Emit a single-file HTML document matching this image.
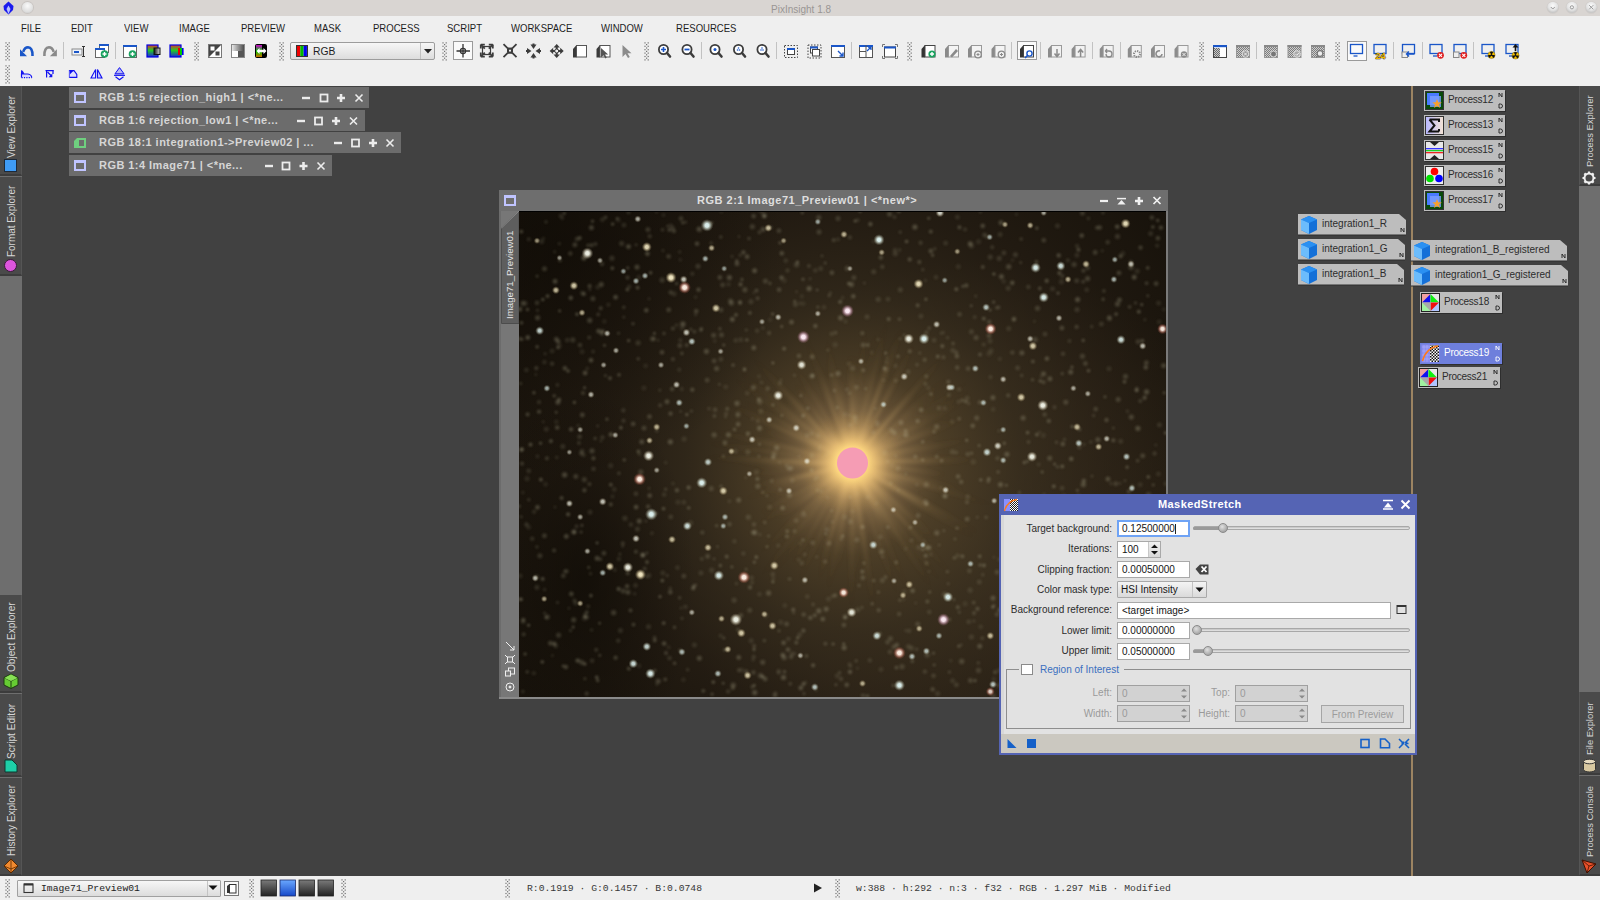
<!DOCTYPE html><html><head><meta charset="utf-8"><style>
*{margin:0;padding:0;box-sizing:border-box}
html,body{width:1600px;height:900px;overflow:hidden;background:#414141;font-family:"Liberation Sans",sans-serif}
.a{position:absolute}
.mi{position:absolute;top:22px;font-size:11.5px;color:#1e1e1e;white-space:nowrap;transform:scaleX(0.83);transform-origin:0 0}
.grip{position:absolute;width:5px;background-image:linear-gradient(45deg,#9a9a9a 25%,transparent 25%,transparent 75%,#9a9a9a 75%),linear-gradient(45deg,#9a9a9a 25%,transparent 25%,transparent 75%,#9a9a9a 75%);background-size:2px 2px;background-position:0 0,1px 1px;opacity:.8}
.sep{position:absolute;width:1px;background:#c4c4c4}
.ti{position:absolute;top:44px;width:16px;height:16px}
.ti2{position:absolute;top:66px;width:16px;height:16px}
.vt{position:absolute;transform-origin:0 0;transform:rotate(-90deg) scaleX(0.9);font-size:11px;color:#d6d6d6;white-space:nowrap}
.ictab{position:absolute;background:#484848}
.iw{position:absolute;height:21px;background:#6c6c6c;color:#d6d6d6;font-weight:bold;font-size:11px;white-space:nowrap}
.iw span{position:absolute;left:30px;top:4px;letter-spacing:0.45px}
.wb{position:absolute;top:5px;width:11px;height:11px}
.pi{position:absolute;height:21px;background:#bdbdbd;color:#2e2e2e;font-size:11px;white-space:nowrap}
.lbl{position:absolute;font-size:10px;color:#2c2c2c;text-align:right;white-space:nowrap}
.ed{position:absolute;height:17px;background:#fff;border:1px solid #a7a7a7;font-size:10px;color:#111;padding:2px 0 0 5px;white-space:nowrap}
.mono{font-family:"Liberation Mono",monospace}
.st{position:absolute;top:881px;font-size:10px;color:#2e2e2e;white-space:nowrap;font-family:"Liberation Mono",monospace}
</style></head><body><div class="a" style="left:0;top:0;width:1600px;height:16px;background:#d9d5d2"></div><div class="a" style="left:771px;top:3.5px;font-size:10px;color:#9a9694;letter-spacing:0px">PixInsight 1.8</div><svg class="a" style="left:2px;top:1px" width="13" height="14" viewBox="0 0 13 14"><path d="M6.5 0.5 L11.5 5 L11 9 L6.5 13.5 L2 9 L1.5 5 Z" fill="#1a1aee"/><path d="M6.5 4.5 L8.5 8 L6.5 13 L4.5 8Z" fill="#b8c0ff"/></svg><div class="a" style="left:21.5px;top:2.2px;width:11px;height:11px;border-radius:50%;background:radial-gradient(circle at 50% 35%,#fafafa,#dedede 65%,#bdbdbd);box-shadow:0 0 0 1px #c8c4c1"></div><svg class="a" style="left:1540px;top:0" width="60" height="16"><defs><radialGradient id="tbb" cx=".5" cy=".35" r=".6"><stop offset="0" stop-color="#fbfbfb"/><stop offset=".7" stop-color="#e2e2e2"/><stop offset="1" stop-color="#c8c8c8"/></radialGradient></defs><circle cx="12.8" cy="7.5" r="6.3" fill="#cfcbc8"/><circle cx="31.9" cy="7.5" r="6.3" fill="#cfcbc8"/><circle cx="51.25" cy="7.5" r="6.3" fill="#cfcbc8"/><circle cx="12.8" cy="7.3" r="5.6" fill="url(#tbb)"/><circle cx="31.9" cy="7.3" r="5.6" fill="url(#tbb)"/><circle cx="51.25" cy="7.3" r="5.6" fill="url(#tbb)"/><path d="M10.8 7 L12.8 9 L14.8 7" stroke="#9a9a9a" stroke-width="1" fill="none"/><circle cx="31.9" cy="7.3" r="1.6" fill="none" stroke="#9a9a9a" stroke-width="1"/><path d="M49.2 5.2 L53.3 9.3 M53.3 5.2 L49.2 9.3" stroke="#9a9a9a" stroke-width="1"/></svg><div class="a" style="left:0;top:16px;width:1600px;height:70px;background:#efefef"></div><div class="mi" style="left:21px">FILE</div><div class="mi" style="left:71px">EDIT</div><div class="mi" style="left:124px">VIEW</div><div class="mi" style="left:179px">IMAGE</div><div class="mi" style="left:241px">PREVIEW</div><div class="mi" style="left:314px">MASK</div><div class="mi" style="left:373px">PROCESS</div><div class="mi" style="left:447px">SCRIPT</div><div class="mi" style="left:511px">WORKSPACE</div><div class="mi" style="left:601px">WINDOW</div><div class="mi" style="left:676px">RESOURCES</div><svg class="a" style="left:0;top:0" width="1600" height="86"><rect x="5.4" y="42.3" width="1.2" height="1.2" fill="#707070"/><rect x="8.6" y="42.3" width="1.2" height="1.2" fill="#707070"/><rect x="7.0" y="44.0" width="1.2" height="1.2" fill="#707070"/><rect x="5.4" y="45.7" width="1.2" height="1.2" fill="#707070"/><rect x="8.6" y="45.7" width="1.2" height="1.2" fill="#707070"/><rect x="7.0" y="47.4" width="1.2" height="1.2" fill="#707070"/><rect x="5.4" y="49.1" width="1.2" height="1.2" fill="#707070"/><rect x="8.6" y="49.1" width="1.2" height="1.2" fill="#707070"/><rect x="7.0" y="50.8" width="1.2" height="1.2" fill="#707070"/><rect x="5.4" y="52.5" width="1.2" height="1.2" fill="#707070"/><rect x="8.6" y="52.5" width="1.2" height="1.2" fill="#707070"/><rect x="7.0" y="54.2" width="1.2" height="1.2" fill="#707070"/><rect x="5.4" y="55.9" width="1.2" height="1.2" fill="#707070"/><rect x="8.6" y="55.9" width="1.2" height="1.2" fill="#707070"/><rect x="7.0" y="57.6" width="1.2" height="1.2" fill="#707070"/><rect x="5.4" y="59.3" width="1.2" height="1.2" fill="#707070"/><rect x="8.6" y="59.3" width="1.2" height="1.2" fill="#707070"/><rect x="194.4" y="42.3" width="1.2" height="1.2" fill="#707070"/><rect x="197.6" y="42.3" width="1.2" height="1.2" fill="#707070"/><rect x="196.0" y="44.0" width="1.2" height="1.2" fill="#707070"/><rect x="194.4" y="45.7" width="1.2" height="1.2" fill="#707070"/><rect x="197.6" y="45.7" width="1.2" height="1.2" fill="#707070"/><rect x="196.0" y="47.4" width="1.2" height="1.2" fill="#707070"/><rect x="194.4" y="49.1" width="1.2" height="1.2" fill="#707070"/><rect x="197.6" y="49.1" width="1.2" height="1.2" fill="#707070"/><rect x="196.0" y="50.8" width="1.2" height="1.2" fill="#707070"/><rect x="194.4" y="52.5" width="1.2" height="1.2" fill="#707070"/><rect x="197.6" y="52.5" width="1.2" height="1.2" fill="#707070"/><rect x="196.0" y="54.2" width="1.2" height="1.2" fill="#707070"/><rect x="194.4" y="55.9" width="1.2" height="1.2" fill="#707070"/><rect x="197.6" y="55.9" width="1.2" height="1.2" fill="#707070"/><rect x="196.0" y="57.6" width="1.2" height="1.2" fill="#707070"/><rect x="194.4" y="59.3" width="1.2" height="1.2" fill="#707070"/><rect x="197.6" y="59.3" width="1.2" height="1.2" fill="#707070"/><rect x="279.4" y="42.3" width="1.2" height="1.2" fill="#707070"/><rect x="282.6" y="42.3" width="1.2" height="1.2" fill="#707070"/><rect x="281.0" y="44.0" width="1.2" height="1.2" fill="#707070"/><rect x="279.4" y="45.7" width="1.2" height="1.2" fill="#707070"/><rect x="282.6" y="45.7" width="1.2" height="1.2" fill="#707070"/><rect x="281.0" y="47.4" width="1.2" height="1.2" fill="#707070"/><rect x="279.4" y="49.1" width="1.2" height="1.2" fill="#707070"/><rect x="282.6" y="49.1" width="1.2" height="1.2" fill="#707070"/><rect x="281.0" y="50.8" width="1.2" height="1.2" fill="#707070"/><rect x="279.4" y="52.5" width="1.2" height="1.2" fill="#707070"/><rect x="282.6" y="52.5" width="1.2" height="1.2" fill="#707070"/><rect x="281.0" y="54.2" width="1.2" height="1.2" fill="#707070"/><rect x="279.4" y="55.9" width="1.2" height="1.2" fill="#707070"/><rect x="282.6" y="55.9" width="1.2" height="1.2" fill="#707070"/><rect x="281.0" y="57.6" width="1.2" height="1.2" fill="#707070"/><rect x="279.4" y="59.3" width="1.2" height="1.2" fill="#707070"/><rect x="282.6" y="59.3" width="1.2" height="1.2" fill="#707070"/><rect x="442.4" y="42.3" width="1.2" height="1.2" fill="#707070"/><rect x="445.6" y="42.3" width="1.2" height="1.2" fill="#707070"/><rect x="444.0" y="44.0" width="1.2" height="1.2" fill="#707070"/><rect x="442.4" y="45.7" width="1.2" height="1.2" fill="#707070"/><rect x="445.6" y="45.7" width="1.2" height="1.2" fill="#707070"/><rect x="444.0" y="47.4" width="1.2" height="1.2" fill="#707070"/><rect x="442.4" y="49.1" width="1.2" height="1.2" fill="#707070"/><rect x="445.6" y="49.1" width="1.2" height="1.2" fill="#707070"/><rect x="444.0" y="50.8" width="1.2" height="1.2" fill="#707070"/><rect x="442.4" y="52.5" width="1.2" height="1.2" fill="#707070"/><rect x="445.6" y="52.5" width="1.2" height="1.2" fill="#707070"/><rect x="444.0" y="54.2" width="1.2" height="1.2" fill="#707070"/><rect x="442.4" y="55.9" width="1.2" height="1.2" fill="#707070"/><rect x="445.6" y="55.9" width="1.2" height="1.2" fill="#707070"/><rect x="444.0" y="57.6" width="1.2" height="1.2" fill="#707070"/><rect x="442.4" y="59.3" width="1.2" height="1.2" fill="#707070"/><rect x="445.6" y="59.3" width="1.2" height="1.2" fill="#707070"/><rect x="644.4" y="42.3" width="1.2" height="1.2" fill="#707070"/><rect x="647.6" y="42.3" width="1.2" height="1.2" fill="#707070"/><rect x="646.0" y="44.0" width="1.2" height="1.2" fill="#707070"/><rect x="644.4" y="45.7" width="1.2" height="1.2" fill="#707070"/><rect x="647.6" y="45.7" width="1.2" height="1.2" fill="#707070"/><rect x="646.0" y="47.4" width="1.2" height="1.2" fill="#707070"/><rect x="644.4" y="49.1" width="1.2" height="1.2" fill="#707070"/><rect x="647.6" y="49.1" width="1.2" height="1.2" fill="#707070"/><rect x="646.0" y="50.8" width="1.2" height="1.2" fill="#707070"/><rect x="644.4" y="52.5" width="1.2" height="1.2" fill="#707070"/><rect x="647.6" y="52.5" width="1.2" height="1.2" fill="#707070"/><rect x="646.0" y="54.2" width="1.2" height="1.2" fill="#707070"/><rect x="644.4" y="55.9" width="1.2" height="1.2" fill="#707070"/><rect x="647.6" y="55.9" width="1.2" height="1.2" fill="#707070"/><rect x="646.0" y="57.6" width="1.2" height="1.2" fill="#707070"/><rect x="644.4" y="59.3" width="1.2" height="1.2" fill="#707070"/><rect x="647.6" y="59.3" width="1.2" height="1.2" fill="#707070"/><rect x="907.4" y="42.3" width="1.2" height="1.2" fill="#707070"/><rect x="910.6" y="42.3" width="1.2" height="1.2" fill="#707070"/><rect x="909.0" y="44.0" width="1.2" height="1.2" fill="#707070"/><rect x="907.4" y="45.7" width="1.2" height="1.2" fill="#707070"/><rect x="910.6" y="45.7" width="1.2" height="1.2" fill="#707070"/><rect x="909.0" y="47.4" width="1.2" height="1.2" fill="#707070"/><rect x="907.4" y="49.1" width="1.2" height="1.2" fill="#707070"/><rect x="910.6" y="49.1" width="1.2" height="1.2" fill="#707070"/><rect x="909.0" y="50.8" width="1.2" height="1.2" fill="#707070"/><rect x="907.4" y="52.5" width="1.2" height="1.2" fill="#707070"/><rect x="910.6" y="52.5" width="1.2" height="1.2" fill="#707070"/><rect x="909.0" y="54.2" width="1.2" height="1.2" fill="#707070"/><rect x="907.4" y="55.9" width="1.2" height="1.2" fill="#707070"/><rect x="910.6" y="55.9" width="1.2" height="1.2" fill="#707070"/><rect x="909.0" y="57.6" width="1.2" height="1.2" fill="#707070"/><rect x="907.4" y="59.3" width="1.2" height="1.2" fill="#707070"/><rect x="910.6" y="59.3" width="1.2" height="1.2" fill="#707070"/><rect x="1199.4" y="42.3" width="1.2" height="1.2" fill="#707070"/><rect x="1202.6" y="42.3" width="1.2" height="1.2" fill="#707070"/><rect x="1201.0" y="44.0" width="1.2" height="1.2" fill="#707070"/><rect x="1199.4" y="45.7" width="1.2" height="1.2" fill="#707070"/><rect x="1202.6" y="45.7" width="1.2" height="1.2" fill="#707070"/><rect x="1201.0" y="47.4" width="1.2" height="1.2" fill="#707070"/><rect x="1199.4" y="49.1" width="1.2" height="1.2" fill="#707070"/><rect x="1202.6" y="49.1" width="1.2" height="1.2" fill="#707070"/><rect x="1201.0" y="50.8" width="1.2" height="1.2" fill="#707070"/><rect x="1199.4" y="52.5" width="1.2" height="1.2" fill="#707070"/><rect x="1202.6" y="52.5" width="1.2" height="1.2" fill="#707070"/><rect x="1201.0" y="54.2" width="1.2" height="1.2" fill="#707070"/><rect x="1199.4" y="55.9" width="1.2" height="1.2" fill="#707070"/><rect x="1202.6" y="55.9" width="1.2" height="1.2" fill="#707070"/><rect x="1201.0" y="57.6" width="1.2" height="1.2" fill="#707070"/><rect x="1199.4" y="59.3" width="1.2" height="1.2" fill="#707070"/><rect x="1202.6" y="59.3" width="1.2" height="1.2" fill="#707070"/><rect x="1335.4" y="42.3" width="1.2" height="1.2" fill="#707070"/><rect x="1338.6" y="42.3" width="1.2" height="1.2" fill="#707070"/><rect x="1337.0" y="44.0" width="1.2" height="1.2" fill="#707070"/><rect x="1335.4" y="45.7" width="1.2" height="1.2" fill="#707070"/><rect x="1338.6" y="45.7" width="1.2" height="1.2" fill="#707070"/><rect x="1337.0" y="47.4" width="1.2" height="1.2" fill="#707070"/><rect x="1335.4" y="49.1" width="1.2" height="1.2" fill="#707070"/><rect x="1338.6" y="49.1" width="1.2" height="1.2" fill="#707070"/><rect x="1337.0" y="50.8" width="1.2" height="1.2" fill="#707070"/><rect x="1335.4" y="52.5" width="1.2" height="1.2" fill="#707070"/><rect x="1338.6" y="52.5" width="1.2" height="1.2" fill="#707070"/><rect x="1337.0" y="54.2" width="1.2" height="1.2" fill="#707070"/><rect x="1335.4" y="55.9" width="1.2" height="1.2" fill="#707070"/><rect x="1338.6" y="55.9" width="1.2" height="1.2" fill="#707070"/><rect x="1337.0" y="57.6" width="1.2" height="1.2" fill="#707070"/><rect x="1335.4" y="59.3" width="1.2" height="1.2" fill="#707070"/><rect x="1338.6" y="59.3" width="1.2" height="1.2" fill="#707070"/><rect x="5.4" y="65.3" width="1.2" height="1.2" fill="#707070"/><rect x="8.6" y="65.3" width="1.2" height="1.2" fill="#707070"/><rect x="7.0" y="67.0" width="1.2" height="1.2" fill="#707070"/><rect x="5.4" y="68.7" width="1.2" height="1.2" fill="#707070"/><rect x="8.6" y="68.7" width="1.2" height="1.2" fill="#707070"/><rect x="7.0" y="70.4" width="1.2" height="1.2" fill="#707070"/><rect x="5.4" y="72.1" width="1.2" height="1.2" fill="#707070"/><rect x="8.6" y="72.1" width="1.2" height="1.2" fill="#707070"/><rect x="7.0" y="73.8" width="1.2" height="1.2" fill="#707070"/><rect x="5.4" y="75.5" width="1.2" height="1.2" fill="#707070"/><rect x="8.6" y="75.5" width="1.2" height="1.2" fill="#707070"/><rect x="7.0" y="77.2" width="1.2" height="1.2" fill="#707070"/><rect x="5.4" y="78.9" width="1.2" height="1.2" fill="#707070"/><rect x="8.6" y="78.9" width="1.2" height="1.2" fill="#707070"/><rect x="7.0" y="80.6" width="1.2" height="1.2" fill="#707070"/><rect x="5.4" y="82.3" width="1.2" height="1.2" fill="#707070"/><rect x="8.6" y="82.3" width="1.2" height="1.2" fill="#707070"/><rect x="63" y="42" width="1" height="17" fill="#c2c2c2"/><rect x="115" y="42" width="1" height="17" fill="#c2c2c2"/><rect x="701" y="42" width="1" height="17" fill="#c2c2c2"/><rect x="776" y="42" width="1" height="17" fill="#c2c2c2"/><rect x="851" y="42" width="1" height="17" fill="#c2c2c2"/><rect x="1011" y="42" width="1" height="17" fill="#c2c2c2"/><rect x="1040" y="42" width="1" height="17" fill="#c2c2c2"/><rect x="1092" y="42" width="1" height="17" fill="#c2c2c2"/><rect x="1120" y="42" width="1" height="17" fill="#c2c2c2"/><rect x="1256" y="42" width="1" height="17" fill="#c2c2c2"/><rect x="1393" y="42" width="1" height="17" fill="#c2c2c2"/><rect x="1422" y="42" width="1" height="17" fill="#c2c2c2"/><rect x="1473" y="42" width="1" height="17" fill="#c2c2c2"/><g><path d="M23.2 51.8 Q24.7 47.3 28.0 47.3 Q32.7 47.5 32.5 56" stroke="#1a56c8" stroke-width="2.6" fill="none"/><path d="M20.0 49.2 L20.0 56.2 L27.0 56.2 Z" fill="#1a56c8"/></g><g transform="translate(100.4,0) scale(-1,1)"><path d="M46.7 51.8 Q48.2 47.3 51.5 47.3 Q56.2 47.5 56.0 56" stroke="#8a8a8a" stroke-width="2.6" fill="none"/><path d="M43.5 49.2 L43.5 56.2 L50.5 56.2 Z" fill="#8a8a8a"/></g><rect x="72" y="49" width="10" height="6" fill="#eef2f8" stroke="#8a8a8a" stroke-width="1"/><rect x="74" y="51" width="5" height="2" fill="#1a56c8"/><path d="M82 46.5h3 M83.5 46.5v10 M82 56.5h3" stroke="#333" stroke-width="1" fill="none"/><rect x="99.5" y="44.5" width="9.0" height="8.0" fill="#fff" stroke="#666" stroke-width="1"/><rect x="99.0" y="44.0" width="10.0" height="2" fill="#1a56c8"/><rect x="95.5" y="48.5" width="9.0" height="9.0" fill="#fff" stroke="#666" stroke-width="1"/><rect x="95.0" y="48.0" width="10.0" height="2" fill="#1a56c8"/><circle cx="104.5" cy="54.0" r="3.8" fill="#1aa360"/><path d="M102.5 54.0h4 M104.5 52.0v4" stroke="#fff" stroke-width="1.4"/><rect x="123.5" y="45.5" width="13.0" height="12.0" fill="#fff" stroke="#666" stroke-width="1"/><rect x="123.0" y="45.0" width="14.0" height="2" fill="#1a56c8"/><circle cx="132.5" cy="54.0" r="3.8" fill="#1aa360"/><path d="M130.5 54.0h4 M132.5 52.0v4" stroke="#fff" stroke-width="1.4"/><defs><linearGradient id="rgbg" x1="0" y1="0" x2="0" y2="1"><stop offset="0" stop-color="#d33"/><stop offset=".45" stop-color="#2c2"/><stop offset="1" stop-color="#22d"/></linearGradient><linearGradient id="gg" x1="0" x2="1"><stop offset="0" stop-color="#111"/><stop offset="1" stop-color="#ddd"/></linearGradient></defs><rect x="147" y="45" width="11" height="12" fill="url(#rgbg)" stroke="#0000e0" stroke-width="1.2"/><rect x="154" y="48" width="6" height="6.5" fill="url(#gg)" stroke="#111" stroke-width="1"/><rect x="170" y="45" width="11" height="12" fill="url(#rgbg)" stroke="#0000e0" stroke-width="1.2"/><rect x="178" y="48" width="2" height="7" fill="#e00"/><rect x="180" y="48" width="2" height="7" fill="#0c0"/><rect x="182" y="48" width="1.6" height="7" fill="#00e"/><rect x="208.5" y="44.5" width="13" height="13" fill="#fff" stroke="#777"/><path d="M209 45 H221 L209 57 Z" fill="#444"/><rect x="210.5" y="46.5" width="4" height="4" fill="#fff"/><rect x="215.5" y="51.5" width="4" height="4" fill="#444"/><defs><linearGradient id="g9" x1="0" x2="1"><stop offset="0" stop-color="#eee"/><stop offset="1" stop-color="#444"/></linearGradient></defs><rect x="231.5" y="44.5" width="13" height="13" fill="url(#g9)" stroke="#888"/><rect x="232" y="51" width="6" height="6" fill="#fff"/><rect x="238" y="51" width="6" height="6" fill="#555"/><defs><linearGradient id="g10" x1="0" y1="0" x2="0" y2="1"><stop offset="0" stop-color="#f0f"/><stop offset=".5" stop-color="#0f0"/><stop offset="1" stop-color="#f80"/></linearGradient></defs><rect x="255" y="44" width="12" height="14" rx="2" fill="#000"/><rect x="256" y="45" width="6" height="12" fill="url(#g10)" opacity=".8"/><path d="M256.5 51 L259.5 48 V49.8 H263.5 V48 L266.5 51 L263.5 54 V52.2 H259.5 V54 Z" fill="#fff"/><defs><linearGradient id="cmb" x1="0" y1="0" x2="0" y2="1"><stop offset="0" stop-color="#f7f7f7"/><stop offset="1" stop-color="#dcdcdc"/></linearGradient></defs><rect x="290.5" y="42.5" width="144" height="17" rx="1.5" fill="url(#cmb)" stroke="#9c9c9c"/><rect x="420" y="43" width="1" height="16" fill="#c0c0c0"/><path d="M424 49 H432 L428 53.5Z" fill="#222"/><text x="313" y="55" font-size="11.5" fill="#1e1e1e" font-family="Liberation Sans" transform="translate(313 0) scale(0.9 1) translate(-313 0)">RGB</text><rect x="297" y="46" width="3.3" height="10" fill="#e00"/><rect x="300.3" y="46" width="3.3" height="10" fill="#0b0"/><rect x="303.6" y="46" width="3.3" height="10" fill="#00e"/><rect x="296.5" y="45.5" width="11" height="11" fill="none" stroke="#333" stroke-width="1"/><rect x="453.5" y="41.5" width="19" height="18" fill="#fafafa" stroke="#9a9a9a"/><path d="M456.5 51 H470 M463 44 V57.5" stroke="#333" stroke-width="1.3"/><circle cx="463" cy="51" r="2.6" fill="none" stroke="#333" stroke-width="1.2"/><rect x="482.5" y="46.5" width="8" height="8" fill="none" stroke="#3c3c3c" stroke-width="1.2"/><path d="M484.8 48.6 L480.8 44.6" stroke="#3c3c3c" stroke-width="1.8"/><path d="M480.8 44.6 h4.0 M480.8 44.6 v4.0" stroke="#3c3c3c" stroke-width="1.8"/><path d="M484.8 52.6 L480.8 56.6" stroke="#3c3c3c" stroke-width="1.8"/><path d="M480.8 56.6 h4.0 M480.8 56.6 v-4.0" stroke="#3c3c3c" stroke-width="1.8"/><path d="M488.8 48.6 L492.8 44.6" stroke="#3c3c3c" stroke-width="1.8"/><path d="M492.8 44.6 h-4.0 M492.8 44.6 v4.0" stroke="#3c3c3c" stroke-width="1.8"/><path d="M488.8 52.6 L492.8 56.6" stroke="#3c3c3c" stroke-width="1.8"/><path d="M492.8 56.6 h-4.0 M492.8 56.6 v-4.0" stroke="#3c3c3c" stroke-width="1.8"/><path d="M503.5 44.1 L508.0 48.6" stroke="#3c3c3c" stroke-width="1.8"/><path d="M508.0 48.6 h4.0 M508.0 48.6 v4.0" stroke="#3c3c3c" stroke-width="1.8"/><path d="M503.5 57.1 L508.0 52.6" stroke="#3c3c3c" stroke-width="1.8"/><path d="M508.0 52.6 h4.0 M508.0 52.6 v-4.0" stroke="#3c3c3c" stroke-width="1.8"/><path d="M516.5 44.1 L512.0 48.6" stroke="#3c3c3c" stroke-width="1.8"/><path d="M512.0 48.6 h-4.0 M512.0 48.6 v4.0" stroke="#3c3c3c" stroke-width="1.8"/><path d="M516.5 57.1 L512.0 52.6" stroke="#3c3c3c" stroke-width="1.8"/><path d="M512.0 52.6 h-4.0 M512.0 52.6 v-4.0" stroke="#3c3c3c" stroke-width="1.8"/><g transform="rotate(0 533.5 51.0)"><path d="M530.5 44.5 L536.5 44.5 L533.5 49.0 Z" fill="#3c3c3c"/><rect x="532.5" y="43.5" width="2" height="3" fill="#3c3c3c"/></g><g transform="rotate(90 533.5 51.0)"><path d="M530.5 44.5 L536.5 44.5 L533.5 49.0 Z" fill="#3c3c3c"/><rect x="532.5" y="43.5" width="2" height="3" fill="#3c3c3c"/></g><g transform="rotate(180 533.5 51.0)"><path d="M530.5 44.5 L536.5 44.5 L533.5 49.0 Z" fill="#3c3c3c"/><rect x="532.5" y="43.5" width="2" height="3" fill="#3c3c3c"/></g><g transform="rotate(270 533.5 51.0)"><path d="M530.5 44.5 L536.5 44.5 L533.5 49.0 Z" fill="#3c3c3c"/><rect x="532.5" y="43.5" width="2" height="3" fill="#3c3c3c"/></g><rect x="555.7" y="46.0" width="2" height="10" fill="#3c3c3c"/><rect x="551.7" y="50.0" width="10" height="2" fill="#3c3c3c"/><g transform="rotate(0 556.7 51.0)"><path d="M553.5 47.5 L559.9 47.5 L556.7 44.0 Z" fill="#3c3c3c"/></g><g transform="rotate(90 556.7 51.0)"><path d="M553.5 47.5 L559.9 47.5 L556.7 44.0 Z" fill="#3c3c3c"/></g><g transform="rotate(180 556.7 51.0)"><path d="M553.5 47.5 L559.9 47.5 L556.7 44.0 Z" fill="#3c3c3c"/></g><g transform="rotate(270 556.7 51.0)"><path d="M553.5 47.5 L559.9 47.5 L556.7 44.0 Z" fill="#3c3c3c"/></g><circle cx="556.7" cy="51.0" r="2" fill="#efefef" stroke="#3c3c3c" stroke-width="1"/><path d="M573.0 49.0 L576.5 45.0 L576.5 57.5 L573.0 57.5 Z" fill="#3a3a3a"/><rect x="576.5" y="45.5" width="10" height="11.5" fill="#fff" stroke="#555" stroke-width="1"/><path d="M596.5 49.0 L600.0 45.0 L600.0 57.5 L596.5 57.5 Z" fill="#3a3a3a"/><rect x="600.0" y="45.5" width="10" height="11.5" fill="#fff" stroke="#555" stroke-width="1"/><path d="M601.0 48.0 l0 9.6 l2.4 -2.4 l2.0 3.2 l1.4 -0.8 l-1.8 -3.0 l3.2 0.0 Z" fill="#555"/><path d="M622.5 45.0 l0 12.0 l3.0 -3.0 l2.5 4.0 l1.8 -1.0 l-2.3 -3.8 l4.0 0.0 Z" fill="#8c8c8c"/><circle cx="663.5" cy="49.5" r="4.6" fill="#fff" stroke="#3c3c3c" stroke-width="1.8"/><path d="M667.0 53.0 L670.0 56.5" stroke="#3c3c3c" stroke-width="2.6" stroke-linecap="round"/><path d="M661.0 49.5h5 M663.5 47.0v5" stroke="#1a56c8" stroke-width="1.6"/><circle cx="687.0" cy="49.5" r="4.6" fill="#fff" stroke="#3c3c3c" stroke-width="1.8"/><path d="M690.5 53.0 L693.5 56.5" stroke="#3c3c3c" stroke-width="2.6" stroke-linecap="round"/><path d="M684.5 49.5h5" stroke="#1a56c8" stroke-width="1.8"/><circle cx="715.0" cy="49.5" r="4.6" fill="#fff" stroke="#3c3c3c" stroke-width="1.8"/><path d="M718.5 53.0 L721.5 56.5" stroke="#3c3c3c" stroke-width="2.6" stroke-linecap="round"/><circle cx="715.0" cy="49.5" r="1.5" fill="#1a56c8"/><circle cx="738.5" cy="49.5" r="4.6" fill="#fff" stroke="#3c3c3c" stroke-width="1.8"/><path d="M742.0 53.0 L745.0 56.5" stroke="#3c3c3c" stroke-width="2.6" stroke-linecap="round"/><circle cx="737.5" cy="50.0" r="0.8" fill="#1a56c8"/><circle cx="739.5" cy="50.0" r="0.8" fill="#1a56c8"/><circle cx="738.5" cy="48.0" r="0.8" fill="#1a56c8"/><circle cx="762.0" cy="49.5" r="4.6" fill="#fff" stroke="#3c3c3c" stroke-width="1.8"/><path d="M765.5 53.0 L768.5 56.5" stroke="#3c3c3c" stroke-width="2.6" stroke-linecap="round"/><circle cx="761.0" cy="50.0" r="0.8" fill="#1a56c8"/><circle cx="763.0" cy="50.0" r="0.8" fill="#1a56c8"/><circle cx="762.0" cy="48.0" r="0.8" fill="#1a56c8"/><rect x="784.5" y="45.5" width="13.0" height="12.0" fill="none" stroke="#444" stroke-width="1" stroke-dasharray="1.5 1.5"/><rect x="787.5" y="48.5" width="7.0" height="6.0" fill="#fff" stroke="#444" stroke-width="1"/><rect x="787.0" y="48.0" width="8.0" height="2" fill="#1a56c8"/><rect x="808.0" y="45.0" width="13.0" height="13.0" fill="none" stroke="#444" stroke-width="1" stroke-dasharray="1.5 1.5"/><rect x="810.5" y="47.0" width="7.0" height="6.0" fill="#fff" stroke="#444" stroke-width="1"/><rect x="810.0" y="46.5" width="8.0" height="2" fill="#1a56c8"/><rect x="812.5" y="49.5" width="7" height="6.5" fill="#fff" stroke="#444" stroke-width="1"/><rect x="831.5" y="45.5" width="13.0" height="12.0" fill="#fff" stroke="#555" stroke-width="1"/><rect x="831.0" y="45.0" width="14.0" height="2" fill="#1a56c8"/><path d="M838 51 L843 56 M843 52.5 V56 H839.5" stroke="#1a56c8" stroke-width="1.4" fill="none"/><rect x="859.5" y="45.5" width="13.0" height="12.0" fill="#fff" stroke="#555" stroke-width="1"/><rect x="859.0" y="45.0" width="14.0" height="2" fill="#1a56c8"/><path d="M859 51.5 H866 V58 M866 51.5 V45" stroke="#555" stroke-width="1" fill="none"/><path d="M867 51 L871 47 M868 47 H871 V50" stroke="#1a56c8" stroke-width="1.3" fill="none"/><rect x="884.5" y="47.0" width="11.0" height="10.0" fill="#fff" stroke="#444" stroke-width="1"/><rect x="884.0" y="46.5" width="12.0" height="2" fill="#1a56c8"/><path d="M882.5 47 V44.5 H885 M895 44.5 H897.5 V47 M882.5 56 V58.5 H885 M895 58.5 H897.5 V56" stroke="#777" stroke-width="1" fill="none"/><path d="M921.5 49.0 L925.0 45.0 L925.0 57.5 L921.5 57.5 Z" fill="#333"/><rect x="925.0" y="45.5" width="10" height="11.5" fill="#fff" stroke="#444" stroke-width="1"/><circle cx="932.0" cy="54.0" r="3.6" fill="#1aa360"/><path d="M930.0 54.0h4 M932.0 52.0v4" stroke="#fff" stroke-width="1.4"/><path d="M945.0 49.0 L948.5 45.0 L948.5 57.5 L945.0 57.5 Z" fill="#8a8a8a"/><rect x="948.5" y="45.5" width="10" height="11.5" fill="#f4f4f4" stroke="#999" stroke-width="1"/><path d="M968.0 49.0 L971.5 45.0 L971.5 57.5 L968.0 57.5 Z" fill="#8a8a8a"/><rect x="971.5" y="45.5" width="10" height="11.5" fill="#f4f4f4" stroke="#999" stroke-width="1"/><path d="M991.5 49.0 L995.0 45.0 L995.0 57.5 L991.5 57.5 Z" fill="#8a8a8a"/><rect x="995.0" y="45.5" width="10" height="11.5" fill="#f4f4f4" stroke="#999" stroke-width="1"/><path d="M950 56 L956 49 L958 51 L952 57.5 Z" fill="#8a8a8a"/><circle cx="978.0" cy="54.5" r="3.3" fill="#efefef" stroke="#8a8a8a" stroke-width="1.3"/><path d="M976.5 54.5h3 M978.0 53v3" stroke="#8a8a8a" stroke-width="1"/><circle cx="1001.5" cy="54.5" r="3.3" fill="#efefef" stroke="#8a8a8a" stroke-width="1.3"/><path d="M1000.0 54.5h3 M1001.5 53v3" stroke="#8a8a8a" stroke-width="1"/><rect x="1017.5" y="41.5" width="19" height="18" fill="#fafafa" stroke="#9a9a9a"/><path d="M1020.0 49.0 L1023.5 45.0 L1023.5 57.5 L1020.0 57.5 Z" fill="#333"/><rect x="1023.5" y="45.5" width="10" height="11.5" fill="#fff" stroke="#444" stroke-width="1"/><circle cx="1029.5" cy="53.5" r="2.6" fill="#fff" stroke="#1a56c8" stroke-width="1.4"/><path d="M1027.5 55.5 L1025 58" stroke="#1a56c8" stroke-width="1.6"/><path d="M1048.0 49.0 L1051.5 45.0 L1051.5 57.5 L1048.0 57.5 Z" fill="#8c8c8c"/><rect x="1051.5" y="45.5" width="10" height="11.5" fill="#f2f2f2" stroke="#9a9a9a" stroke-width="1"/><path d="M1071.6 49.0 L1075.1 45.0 L1075.1 57.5 L1071.6 57.5 Z" fill="#8c8c8c"/><rect x="1075.1" y="45.5" width="10" height="11.5" fill="#f2f2f2" stroke="#9a9a9a" stroke-width="1"/><path d="M1099.7 49.0 L1103.2 45.0 L1103.2 57.5 L1099.7 57.5 Z" fill="#8c8c8c"/><rect x="1103.2" y="45.5" width="10" height="11.5" fill="#f2f2f2" stroke="#9a9a9a" stroke-width="1"/><path d="M1127.8 49.0 L1131.3 45.0 L1131.3 57.5 L1127.8 57.5 Z" fill="#8c8c8c"/><rect x="1131.3" y="45.5" width="10" height="11.5" fill="#f2f2f2" stroke="#9a9a9a" stroke-width="1"/><path d="M1151.0 49.0 L1154.5 45.0 L1154.5 57.5 L1151.0 57.5 Z" fill="#8c8c8c"/><rect x="1154.5" y="45.5" width="10" height="11.5" fill="#f2f2f2" stroke="#9a9a9a" stroke-width="1"/><path d="M1174.5 49.0 L1178.0 45.0 L1178.0 57.5 L1174.5 57.5 Z" fill="#8c8c8c"/><rect x="1178.0" y="45.5" width="10" height="11.5" fill="#f2f2f2" stroke="#9a9a9a" stroke-width="1"/><path d="M1057 49 V56 M1054.5 53.5 L1057 56.5 L1059.5 53.5" stroke="#8a8a8a" stroke-width="1.5" fill="none"/><path d="M1080.6 57 V50 M1078 52.5 L1080.6 49.5 L1083.2 52.5" stroke="#8a8a8a" stroke-width="1.5" fill="none"/><path d="M1106 54 A3 3 0 1 0 1109 51 H1106 M1107 49 L1105.5 51 L1107 53" stroke="#8a8a8a" stroke-width="1.3" fill="none"/><circle cx="1137" cy="54" r="3" fill="none" stroke="#8a8a8a" stroke-width="2" stroke-dasharray="1.3 1"/><path d="M1162 54 A3 3 0 1 1 1160 51" stroke="#8a8a8a" stroke-width="1.6" fill="none"/><circle cx="1184" cy="54.5" r="3.2" fill="#8a8a8a"/><path d="M1182.5 53 L1185.5 56 M1185.5 53 L1182.5 56" stroke="#eee" stroke-width="1"/><defs><pattern id="chk" width="2" height="2" patternUnits="userSpaceOnUse"><rect width="2" height="2" fill="#c8c8c8"/><rect width="1" height="1" fill="#6a6a6a"/><rect x="1" y="1" width="1" height="1" fill="#6a6a6a"/></pattern></defs><rect x="1213.5" y="45.5" width="13" height="12" fill="#fff" stroke="#444"/><rect x="1214" y="48" width="6" height="9" fill="url(#chk)"/><rect x="1213" y="45" width="14" height="2.2" fill="#1a56c8"/><rect x="1236.5" y="45.5" width="13" height="12" fill="url(#chk)" stroke="#888" opacity=".85"/><rect x="1236.0" y="45" width="14" height="2" fill="#888"/><rect x="1264.5" y="45.5" width="13" height="12" fill="url(#chk)" stroke="#888" opacity=".85"/><rect x="1264.0" y="45" width="14" height="2" fill="#888"/><rect x="1288.0" y="45.5" width="13" height="12" fill="url(#chk)" stroke="#888" opacity=".85"/><rect x="1287.5" y="45" width="14" height="2" fill="#888"/><rect x="1311.5" y="45.5" width="13" height="12" fill="url(#chk)" stroke="#888" opacity=".85"/><rect x="1311.0" y="45" width="14" height="2" fill="#888"/><circle cx="1245.5" cy="54" r="3.3" fill="#999" stroke="#eee" stroke-width=".8"/><path d="M1244 52.5 L1247 55.5 M1247 52.5 L1244 55.5" stroke="#eee" stroke-width="1"/><circle cx="1273.5" cy="54" r="3" fill="#777" stroke="#eee" stroke-width=".8"/><circle cx="1297" cy="54" r="3.3" fill="#aaa" stroke="#eee" stroke-width=".8"/><path d="M1295.5 54 L1296.8 55.3 L1299 52.8" stroke="#eee" stroke-width="1" fill="none"/><circle cx="1320" cy="53.5" r="2.8" fill="#eee" stroke="#777" stroke-width="1.2"/><path d="M1318 55.5 L1316 57.5" stroke="#777" stroke-width="1.5"/><rect x="1347.5" y="41.5" width="19" height="19" fill="#fafafa" stroke="#9a9a9a"/><rect x="1350.5" y="44.5" width="12" height="9" fill="none" stroke="#1a56c8" stroke-width="1.3"/><path d="M1353.5 56.0 h4" stroke="#1a56c8" stroke-width="1.3"/><rect x="1374.0" y="44.5" width="12" height="9" fill="none" stroke="#1a56c8" stroke-width="1.3"/><text x="1375.5" y="59" font-size="9" font-weight="bold" fill="#f0b800" stroke="#111" stroke-width=".7" paint-order="stroke" font-family="Liberation Sans">24</text><rect x="1402.5" y="44.5" width="12" height="9" fill="none" stroke="#1a56c8" stroke-width="1.3"/><rect x="1402" y="52" width="5.5" height="5.5" fill="#efefef" stroke="#888" stroke-width="1"/><path d="M1414.5 54 H1406.5 M1409 51.5 L1406.5 54 L1409 56.5" stroke="#1a56c8" stroke-width="1.4" fill="none"/><rect x="1430.0" y="44.5" width="12" height="9" fill="none" stroke="#1a56c8" stroke-width="1.3"/><path d="M1433.0 56.0 h4" stroke="#1a56c8" stroke-width="1.3"/><circle cx="1440.5" cy="55.3" r="3.4" fill="#e02020"/><path d="M1439.0 53.8 L1442.0 56.8 M1442.0 53.8 L1439.0 56.8" stroke="#fff" stroke-width="1.1"/><rect x="1454.0" y="44.5" width="12" height="9" fill="none" stroke="#1a56c8" stroke-width="1.3"/><rect x="1453.5" y="52" width="5.5" height="5.5" fill="#efefef" stroke="#888" stroke-width="1"/><circle cx="1463.8" cy="55.3" r="3.4" fill="#e02020"/><path d="M1462.3 53.8 L1465.3 56.8 M1465.3 53.8 L1462.3 56.8" stroke="#fff" stroke-width="1.1"/><rect x="1482.0" y="44.5" width="12" height="9" fill="none" stroke="#1a56c8" stroke-width="1.3"/><path d="M1485.0 56.0 h4" stroke="#1a56c8" stroke-width="1.3"/><circle cx="1491.5" cy="55.0" r="3.6" fill="#f5c000" stroke="#6a5000" stroke-width=".4"/><circle cx="1491.5" cy="55.0" r=".9" fill="#111"/><path d="M1491.5 55.0 L1489.8 52.1 A3.4 3.4 0 0 1 1493.2 52.1Z M1491.5 55.0 L1494.9 55.0 A3.4 3.4 0 0 1 1493.2 57.9Z M1491.5 55.0 L1489.8 57.9 A3.4 3.4 0 0 1 1488.1 55.0Z" fill="#111"/><rect x="1506.0" y="44.5" width="12" height="9" fill="none" stroke="#1a56c8" stroke-width="1.3"/><path d="M1509.0 56.0 h4" stroke="#1a56c8" stroke-width="1.3"/><circle cx="1515.5" cy="55.5" r="3.6" fill="#f5c000" stroke="#6a5000" stroke-width=".4"/><circle cx="1515.5" cy="55.5" r=".9" fill="#111"/><path d="M1515.5 55.5 L1513.8 52.6 A3.4 3.4 0 0 1 1517.2 52.6Z M1515.5 55.5 L1518.9 55.5 A3.4 3.4 0 0 1 1517.2 58.4Z M1515.5 55.5 L1513.8 58.4 A3.4 3.4 0 0 1 1512.1 55.5Z" fill="#111"/><path d="M1515.5 51 V46.5" stroke="#111" stroke-width="1.6"/><path d="M1512.5 47.5 L1515.5 44 L1518.5 47.5Z" fill="#111"/><path d="M21.5 77.5 V74 H27 A4.5 4 0 0 1 31.8 77.5" fill="#d8d8ff" stroke="#1010f0" stroke-width="1.2"/><path d="M21.5 77.7 H31.8" stroke="#1010f0" stroke-width="1.2" stroke-dasharray="1.2 1.2"/><path d="M21 70.5 L24.5 74 L21 74Z" fill="#1010f0"/><path d="M21.3 70.5 L23.5 72.8" stroke="#1010f0" stroke-width="1.2"/><path d="M45.5 70.6 H53.8 M46.6 70.6 V77.6 M53 70.6 V74" stroke="#1010f0" stroke-width="1.2" fill="none"/><path d="M47.5 72 L51.5 76" stroke="#1010f0" stroke-width="1.3"/><path d="M52.3 73.5 V77.2 H48.6Z" fill="#1010f0"/><path d="M69.6 70 V77.8" stroke="#1010f0" stroke-width="1.4"/><path d="M69.6 77.4 H76.8 V74.5 L74 70.6 H69.6" fill="#e0e0ff" stroke="#1010f0" stroke-width="1.1"/><path d="M70 70.3 H74 L70 74.3Z" fill="#1010f0"/><path d="M91 78 L95.6 69.5 V78 Z" fill="#e8e8ff" stroke="#1010f0" stroke-width="1.1"/><path d="M97.5 78 V69.5 L102 78 Z" fill="#c8c8f8" stroke="#1010f0" stroke-width="1.1"/><path d="M114 75.3 H125" stroke="#1010f0" stroke-width="1.2"/><path d="M115 73.8 L119.5 67.6 L124 73.8Z" fill="#b8b8f4" stroke="#1010f0" stroke-width="1"/><path d="M115.5 76.8 L119.5 79.8 L123.5 76.8" fill="none" stroke="#1010f0" stroke-width="1.1"/></svg><div class="a" style="left:0;top:86px;width:1600px;height:790px;background:#414141"></div><div class="a" style="left:0;top:86px;width:22px;height:790px;background:#6e6e6e"></div><div class="a" style="left:0;top:86px;width:22px;height:90px;background:#4a4a4a;border-right:1px solid #555;border-bottom:2px solid #3c3c3c"></div><div class="vt" style="left:5.5px;top:158.3px;font-size:10px;transform:rotate(-90deg) scaleX(1.011)">View Explorer</div><div class="a" style="left:4px;top:159px;width:13px;height:13px;background:#3f9cf6;border:1px solid #1d2a3a"></div><div class="a" style="left:0;top:177px;width:22px;height:99px;background:#4a4a4a;border-right:1px solid #555;border-bottom:2px solid #3c3c3c"></div><div class="vt" style="left:5.5px;top:256.5px;font-size:10px;transform:rotate(-90deg) scaleX(0.994)">Format Explorer</div><div class="a" style="left:4px;top:259px;width:13px;height:13px;border-radius:50%;background:#dd55dd;border:1px solid #3a1a3a"></div><div class="a" style="left:0;top:595px;width:22px;height:98px;background:#4a4a4a;border-right:1px solid #555;border-bottom:2px solid #3c3c3c"></div><div class="vt" style="left:5.5px;top:671.8px;font-size:10px;transform:rotate(-90deg) scaleX(1.011)">Object Explorer</div><svg class="a" style="left:3px;top:673px" width="16" height="16"><path d="M8 1 L15 4.5 V12 L8 15.5 L1 12 V4.5Z" fill="#66cc33" stroke="#1d3a10" stroke-width="1"/><path d="M1 4.5 L8 8 L15 4.5 M8 8 V15.5" stroke="#1d3a10" stroke-width="1" fill="none"/><path d="M1.5 5 L8 1.5 L14.5 5 L8 8Z" fill="#88e055"/></svg><div class="a" style="left:0;top:694px;width:22px;height:83px;background:#4a4a4a;border-right:1px solid #555;border-bottom:2px solid #3c3c3c"></div><div class="vt" style="left:5.5px;top:758.5px;font-size:10px;transform:rotate(-90deg) scaleX(1.013)">Script Editor</div><svg class="a" style="left:4px;top:759px" width="14" height="14"><path d="M1 1 H8 L13 6 V13 H1Z" fill="#1ecfa8" stroke="#0a3a30" stroke-width="1"/></svg><div class="a" style="left:0;top:778px;width:22px;height:98px;background:#4a4a4a;border-right:1px solid #555;border-bottom:2px solid #3c3c3c"></div><div class="vt" style="left:5.5px;top:856.3px;font-size:10px;transform:rotate(-90deg) scaleX(1.000)">History Explorer</div><svg class="a" style="left:3px;top:858px" width="16" height="16"><path d="M8 1 L15 8 L8 15 L1 8Z" fill="#f08a30" stroke="#5a2a00" stroke-width="1"/><path d="M8 1 V15 M1 8 L8 11 L15 8" stroke="#5a2a00" stroke-width=".8" fill="none"/></svg><div class="a" style="left:1579px;top:86px;width:21px;height:790px;background:#6e6e6e"></div><div class="a" style="left:1579px;top:86px;width:21px;height:100px;background:#4a4a4a;border-left:1px solid #555;border-bottom:2px solid #3c3c3c"></div><div class="vt" style="left:1584.2px;top:167.4px;font-size:9.5px;transform:rotate(-90deg) scaleX(0.991)">Process Explorer</div><svg class="a" style="left:1581px;top:170px" width="16" height="16"><circle cx="8" cy="8" r="4.5" fill="none" stroke="#f0f0f0" stroke-width="2"/><g stroke="#f0f0f0" stroke-width="2.2"><path d="M8 1.5 V3.5 M8 12.5 V14.5 M1.5 8 H3.5 M12.5 8 H14.5 M3.4 3.4 L4.8 4.8 M11.2 11.2 L12.6 12.6 M3.4 12.6 L4.8 11.2 M11.2 4.8 L12.6 3.4"/></g></svg><div class="a" style="left:1579px;top:692px;width:21px;height:83px;background:#4a4a4a;border-left:1px solid #555;border-bottom:2px solid #3c3c3c"></div><div class="vt" style="left:1584.2px;top:755.0px;font-size:9.5px;transform:rotate(-90deg) scaleX(0.986)">File Explorer</div><svg class="a" style="left:1582px;top:758px" width="15" height="15"><path d="M1.5 3.5 V11.5 A6 2.5 0 0 0 13.5 11.5 V3.5" fill="#d8c8a0" stroke="#333" stroke-width="1"/><ellipse cx="7.5" cy="3.5" rx="6" ry="2.3" fill="#e8dcc0" stroke="#333" stroke-width="1"/></svg><div class="a" style="left:1579px;top:776px;width:21px;height:100px;background:#4a4a4a;border-left:1px solid #555;border-bottom:2px solid #3c3c3c"></div><div class="vt" style="left:1584.2px;top:856.5px;font-size:9.5px;transform:rotate(-90deg) scaleX(0.988)">Process Console</div><svg class="a" style="left:1581px;top:858px" width="16" height="16"><path d="M1 2 L15 6 L6 15Z" fill="#e8502a" stroke="#401000" stroke-width="1"/><path d="M1 2 L8 8 L6 15 M8 8 L15 6" stroke="#401000" stroke-width=".8" fill="none"/></svg><div class="a" style="left:1411px;top:86px;width:2px;height:790px;background:#9c8462"></div><div class="iw" style="left:69px;top:87px;width:300px"><span>RGB 1:5 rejection_high1 | &lt;*ne...</span></div><div class="a" style="left:74px;top:92px;width:12px;height:11px;border:2px solid #c0c4ff;border-top-width:3px"></div><svg class="a" style="left:0;top:0;overflow:visible" width="1" height="1"><path d="M302.0 98.0 h8" stroke="#ececec" stroke-width="2.4"/><rect x="320.5" y="94.5" width="7" height="7" fill="none" stroke="#ececec" stroke-width="1.8"/><path d="M337.0 98.0 h8 M341.0 94.0 v8" stroke="#ececec" stroke-width="2.6"/><path d="M355.5 94.5 l7 7 M362.5 94.5 l-7 7" stroke="#ececec" stroke-width="1.6"/></svg><div class="iw" style="left:69px;top:110px;width:296px"><span>RGB 1:6 rejection_low1 | &lt;*ne...</span></div><div class="a" style="left:74px;top:115px;width:12px;height:11px;border:2px solid #c0c4ff;border-top-width:3px"></div><svg class="a" style="left:0;top:0;overflow:visible" width="1" height="1"><path d="M297.0 121.0 h8" stroke="#ececec" stroke-width="2.4"/><rect x="315.0" y="117.5" width="7" height="7" fill="none" stroke="#ececec" stroke-width="1.8"/><path d="M332.0 121.0 h8 M336.0 117.0 v8" stroke="#ececec" stroke-width="2.6"/><path d="M350.0 117.5 l7 7 M357.0 117.5 l-7 7" stroke="#ececec" stroke-width="1.6"/></svg><div class="iw" style="left:69px;top:132px;width:332px"><span>RGB 18:1 integration1-&gt;Preview02 | ...</span></div><svg class="a" style="left:73px;top:137px" width="14" height="12"><path d="M1 4 L4 1 H13 V11 H1Z" fill="#6fcf7f"/><rect x="6" y="3" width="5" height="6" fill="#6c6c6c"/></svg><svg class="a" style="left:0;top:0;overflow:visible" width="1" height="1"><path d="M334.0 143.0 h8" stroke="#ececec" stroke-width="2.4"/><rect x="352.0" y="139.5" width="7" height="7" fill="none" stroke="#ececec" stroke-width="1.8"/><path d="M369.0 143.0 h8 M373.0 139.0 v8" stroke="#ececec" stroke-width="2.6"/><path d="M386.5 139.5 l7 7 M393.5 139.5 l-7 7" stroke="#ececec" stroke-width="1.6"/></svg><div class="iw" style="left:69px;top:155px;width:263px"><span>RGB 1:4 Image71 | &lt;*ne...</span></div><div class="a" style="left:74px;top:160px;width:12px;height:11px;border:2px solid #c0c4ff;border-top-width:3px"></div><svg class="a" style="left:0;top:0;overflow:visible" width="1" height="1"><path d="M265.0 166.0 h8" stroke="#ececec" stroke-width="2.4"/><rect x="282.5" y="162.5" width="7" height="7" fill="none" stroke="#ececec" stroke-width="1.8"/><path d="M299.5 166.0 h8 M303.5 162.0 v8" stroke="#ececec" stroke-width="2.6"/><path d="M317.5 162.5 l7 7 M324.5 162.5 l-7 7" stroke="#ececec" stroke-width="1.6"/></svg><div class="a" style="left:499px;top:190px;width:669px;height:509px;background:#7a7a7a"></div><div class="a" style="left:499px;top:190px;width:669px;height:21px;background:#6e6e6e"></div><div class="a" style="left:697px;top:194px;font-size:11px;font-weight:bold;color:#dedede;white-space:nowrap;letter-spacing:0.51px">RGB 2:1 Image71_Preview01 | &lt;*new*&gt;</div><div class="a" style="left:504px;top:195px;width:12px;height:11px;border:2px solid #c0c4ff;border-top-width:3px"></div><svg class="a" style="left:1095px;top:194px" width="72" height="14"><path d="M5 7 h8" stroke="#f0f0f0" stroke-width="2.2"/><path d="M22 4.6 h9" stroke="#f0f0f0" stroke-width="1.5"/><path d="M26.5 6 L22.4 10.4 H30.6Z" fill="#f0f0f0"/><path d="M40 7 h8 M44 3 v8" stroke="#f0f0f0" stroke-width="2.6"/><path d="M58.5 3 l7 7 M65.5 3 l-7 7" stroke="#f0f0f0" stroke-width="1.7"/></svg><div class="a" style="left:499px;top:211px;width:20px;height:486px;background:#777"></div><div class="a" style="left:499px;top:211px;width:2px;height:486px;background:#6c6c6c"></div><svg class="a" style="left:501px;top:210px" width="18" height="114"><path d="M18 1 L0.5 18 V113.5 H18Z" fill="#5e5e5e" stroke="#4c4c4c" stroke-width="1"/><path d="M18 1 L0.5 18" stroke="#8a8a8a" stroke-width="1"/></svg><div class="vt" style="left:504px;top:319px;font-size:9.7px;color:#e4e4e4;transform:rotate(-90deg)">Image71_Preview01</div><svg class="a" style="left:503px;top:640px" width="14" height="55"><g stroke="#f0f0f0" fill="none" stroke-width="1"><path d="M3 2 L11 10 M11 6 V10 H7"/><rect x="4.5" y="17" width="5" height="5"/><path d="M2 15 L4.5 17.5 M12 15 L9.5 17.5 M2 24 L4.5 21.5 M12 24 L9.5 21.5"/><rect x="5.5" y="28" width="6" height="6"/><rect x="2.5" y="31" width="5" height="5" fill="#7d7d7d"/><circle cx="7" cy="47" r="4"/><circle cx="7" cy="47" r="1" fill="#f0f0f0"/></g></svg><div class="a" style="left:499px;top:697px;width:669px;height:2px;background:#8a8a8a"></div><svg class="a" style="left:519px;top:211px" width="647" height="486" viewBox="519 211 647 486"><defs><radialGradient id="bgglow" cx="852" cy="463" r="420" gradientUnits="userSpaceOnUse"><stop offset="0" stop-color="#c8a060" stop-opacity="1"/><stop offset=".05" stop-color="#a08050" stop-opacity=".9"/><stop offset=".12" stop-color="#7a6242" stop-opacity=".82"/><stop offset=".22" stop-color="#56462c" stop-opacity=".75"/><stop offset=".4" stop-color="#3e3322" stop-opacity=".62"/><stop offset=".6" stop-color="#30261a" stop-opacity=".48"/><stop offset=".85" stop-color="#241c12" stop-opacity=".28"/><stop offset="1" stop-color="#1c160e" stop-opacity="0"/></radialGradient><radialGradient id="lrglow" cx="980" cy="560" r="300" gradientUnits="userSpaceOnUse"><stop offset="0" stop-color="#4a3c26" stop-opacity=".6"/><stop offset=".6" stop-color="#3a2f1e" stop-opacity=".45"/><stop offset="1" stop-color="#3a2f1e" stop-opacity="0"/></radialGradient><radialGradient id="uldark" cx="560" cy="250" r="230" gradientUnits="userSpaceOnUse"><stop offset="0" stop-color="#0e0a05" stop-opacity=".6"/><stop offset="1" stop-color="#0e0a05" stop-opacity="0"/></radialGradient><radialGradient id="lldark" cx="0" cy="0" r="1" gradientUnits="userSpaceOnUse" gradientTransform="translate(585 580) scale(110 190)"><stop offset="0" stop-color="#0c0904" stop-opacity=".6"/><stop offset="1" stop-color="#0e0a05" stop-opacity="0"/></radialGradient><radialGradient id="sw"><stop offset="0" stop-color="rgb(240,242,230)" stop-opacity="1"/><stop offset=".3" stop-color="rgb(240,242,230)" stop-opacity=".95"/><stop offset=".55" stop-color="rgb(230,227,207)" stop-opacity=".6"/><stop offset=".8" stop-color="rgb(220,212,184)" stop-opacity=".2"/><stop offset="1" stop-color="rgb(220,212,184)" stop-opacity="0"/></radialGradient><radialGradient id="sc"><stop offset="0" stop-color="rgb(222,242,240)" stop-opacity="1"/><stop offset=".3" stop-color="rgb(222,242,240)" stop-opacity=".95"/><stop offset=".55" stop-color="rgb(213,227,216)" stop-opacity=".6"/><stop offset=".8" stop-color="rgb(204,212,192)" stop-opacity=".2"/><stop offset="1" stop-color="rgb(204,212,192)" stop-opacity="0"/></radialGradient><radialGradient id="sy"><stop offset="0" stop-color="rgb(242,232,195)" stop-opacity="1"/><stop offset=".3" stop-color="rgb(242,232,195)" stop-opacity=".95"/><stop offset=".55" stop-color="rgb(232,218,175)" stop-opacity=".6"/><stop offset=".8" stop-color="rgb(222,204,156)" stop-opacity=".2"/><stop offset="1" stop-color="rgb(222,204,156)" stop-opacity="0"/></radialGradient><radialGradient id="sp"><stop offset="0" stop-color="rgb(255,236,245)" stop-opacity="1"/><stop offset=".3" stop-color="rgb(255,236,245)" stop-opacity=".95"/><stop offset=".55" stop-color="rgb(242,198,220)" stop-opacity=".6"/><stop offset=".8" stop-color="rgb(230,160,195)" stop-opacity=".2"/><stop offset="1" stop-color="rgb(230,160,195)" stop-opacity="0"/></radialGradient><radialGradient id="sr"><stop offset="0" stop-color="rgb(255,240,228)" stop-opacity="1"/><stop offset=".3" stop-color="rgb(255,240,228)" stop-opacity=".95"/><stop offset=".55" stop-color="rgb(242,180,164)" stop-opacity=".6"/><stop offset=".8" stop-color="rgb(230,120,100)" stop-opacity=".2"/><stop offset="1" stop-color="rgb(230,120,100)" stop-opacity="0"/></radialGradient><radialGradient id="sf"><stop offset="0" stop-color="#b0ac90" stop-opacity=".55"/><stop offset=".4" stop-color="#a8a488" stop-opacity=".4"/><stop offset=".75" stop-color="#a8a488" stop-opacity=".12"/><stop offset="1" stop-color="#a8a488" stop-opacity="0"/></radialGradient><radialGradient id="rayf" cx="852" cy="463" r="150" gradientUnits="userSpaceOnUse"><stop offset="0" stop-color="#ffd890" stop-opacity=".9"/><stop offset=".3" stop-color="#e8c07a" stop-opacity=".5"/><stop offset="1" stop-color="#c09a60" stop-opacity="0"/></radialGradient><radialGradient id="core" cx="852" cy="463" r="54" gradientUnits="userSpaceOnUse"><stop offset="0" stop-color="#ffe498" stop-opacity="1"/><stop offset=".3" stop-color="#fbd57e" stop-opacity="1"/><stop offset=".45" stop-color="#e8bc70" stop-opacity=".65"/><stop offset=".7" stop-color="#b89058" stop-opacity=".25"/><stop offset="1" stop-color="#a07840" stop-opacity="0"/></radialGradient><filter id="blr" x="-50%" y="-50%" width="200%" height="200%"><feGaussianBlur stdDeviation="2"/></filter><filter id="sblr" x="0" y="0" width="100%" height="100%"><feGaussianBlur stdDeviation="0.7"/></filter><filter id="fblr" x="0" y="0" width="100%" height="100%"><feGaussianBlur stdDeviation="1.2"/></filter></defs><rect x="519" y="211" width="647" height="486" fill="#17120b"/><rect x="519" y="211" width="647" height="486" fill="url(#lrglow)"/><rect x="519" y="211" width="647" height="486" fill="url(#bgglow)"/><rect x="519" y="211" width="647" height="486" fill="url(#uldark)"/><rect x="519" y="211" width="647" height="486" fill="url(#lldark)"/><g filter="url(#fblr)"><circle cx="728.5" cy="284.3" r="3.5" fill="url(#sf)" opacity="0.29"/><circle cx="865.7" cy="388.7" r="2.4" fill="url(#sf)" opacity="0.50"/><circle cx="543.3" cy="421.8" r="2.4" fill="url(#sf)" opacity="0.30"/><circle cx="793.7" cy="612.9" r="2.5" fill="url(#sf)" opacity="0.36"/><circle cx="924.9" cy="671.6" r="3.3" fill="url(#sf)" opacity="0.45"/><circle cx="1150.6" cy="233.6" r="3.8" fill="url(#sf)" opacity="0.39"/><circle cx="612.3" cy="268.2" r="2.9" fill="url(#sf)" opacity="0.66"/><circle cx="635.9" cy="493.7" r="3.5" fill="url(#sf)" opacity="0.44"/><circle cx="873.4" cy="241.5" r="2.4" fill="url(#sf)" opacity="0.35"/><circle cx="959.2" cy="418.8" r="2.9" fill="url(#sf)" opacity="0.54"/><circle cx="812.2" cy="356.7" r="3.7" fill="url(#sf)" opacity="0.60"/><circle cx="676.9" cy="490.2" r="3.2" fill="url(#sf)" opacity="0.69"/><circle cx="991.0" cy="350.9" r="4.1" fill="url(#sf)" opacity="0.31"/><circle cx="789.5" cy="579.0" r="2.6" fill="url(#sf)" opacity="0.49"/><circle cx="544.4" cy="535.8" r="3.7" fill="url(#sf)" opacity="0.54"/><circle cx="1085.4" cy="363.5" r="3.6" fill="url(#sf)" opacity="0.55"/><circle cx="894.2" cy="432.7" r="3.8" fill="url(#sf)" opacity="0.72"/><circle cx="825.7" cy="533.8" r="2.4" fill="url(#sf)" opacity="0.60"/><circle cx="937.7" cy="693.6" r="3.8" fill="url(#sf)" opacity="0.39"/><circle cx="768.6" cy="536.0" r="2.3" fill="url(#sf)" opacity="0.48"/><circle cx="627.7" cy="267.9" r="2.4" fill="url(#sf)" opacity="0.63"/><circle cx="602.7" cy="331.3" r="3.0" fill="url(#sf)" opacity="0.69"/><circle cx="571.1" cy="429.3" r="3.3" fill="url(#sf)" opacity="0.69"/><circle cx="1049.1" cy="630.9" r="2.8" fill="url(#sf)" opacity="0.46"/><circle cx="751.1" cy="640.7" r="4.0" fill="url(#sf)" opacity="0.33"/><circle cx="633.0" cy="323.7" r="2.7" fill="url(#sf)" opacity="0.49"/><circle cx="900.2" cy="338.7" r="2.3" fill="url(#sf)" opacity="0.46"/><circle cx="757.9" cy="486.2" r="4.0" fill="url(#sf)" opacity="0.60"/><circle cx="852.5" cy="511.2" r="3.5" fill="url(#sf)" opacity="0.28"/><circle cx="1101.0" cy="590.1" r="3.9" fill="url(#sf)" opacity="0.65"/><circle cx="772.9" cy="404.9" r="2.5" fill="url(#sf)" opacity="0.57"/><circle cx="559.3" cy="243.7" r="2.7" fill="url(#sf)" opacity="0.33"/><circle cx="739.0" cy="236.6" r="2.3" fill="url(#sf)" opacity="0.33"/><circle cx="584.6" cy="387.7" r="2.3" fill="url(#sf)" opacity="0.69"/><circle cx="916.3" cy="283.2" r="2.8" fill="url(#sf)" opacity="0.42"/><circle cx="754.6" cy="270.7" r="3.8" fill="url(#sf)" opacity="0.75"/><circle cx="820.5" cy="446.1" r="2.5" fill="url(#sf)" opacity="0.30"/><circle cx="740.7" cy="339.7" r="3.8" fill="url(#sf)" opacity="0.33"/><circle cx="533.9" cy="673.2" r="3.3" fill="url(#sf)" opacity="0.32"/><circle cx="870.4" cy="224.1" r="3.3" fill="url(#sf)" opacity="0.74"/><circle cx="1077.6" cy="549.4" r="2.8" fill="url(#sf)" opacity="0.43"/><circle cx="627.1" cy="586.2" r="3.3" fill="url(#sf)" opacity="0.64"/><circle cx="732.3" cy="319.4" r="3.8" fill="url(#sf)" opacity="0.74"/><circle cx="1070.7" cy="602.8" r="3.8" fill="url(#sf)" opacity="0.62"/><circle cx="665.7" cy="462.6" r="2.9" fill="url(#sf)" opacity="0.26"/><circle cx="537.1" cy="346.8" r="2.8" fill="url(#sf)" opacity="0.60"/><circle cx="1137.9" cy="428.4" r="4.0" fill="url(#sf)" opacity="0.74"/><circle cx="1136.9" cy="388.2" r="2.7" fill="url(#sf)" opacity="0.36"/><circle cx="646.3" cy="310.3" r="3.4" fill="url(#sf)" opacity="0.70"/><circle cx="1062.8" cy="444.0" r="3.5" fill="url(#sf)" opacity="0.65"/><circle cx="573.9" cy="532.0" r="3.9" fill="url(#sf)" opacity="0.64"/><circle cx="1004.3" cy="443.3" r="2.6" fill="url(#sf)" opacity="0.64"/><circle cx="734.1" cy="600.2" r="4.0" fill="url(#sf)" opacity="0.45"/><circle cx="778.7" cy="671.1" r="3.6" fill="url(#sf)" opacity="0.34"/><circle cx="601.2" cy="284.5" r="3.9" fill="url(#sf)" opacity="0.65"/><circle cx="613.6" cy="612.7" r="4.1" fill="url(#sf)" opacity="0.58"/><circle cx="745.7" cy="477.6" r="2.5" fill="url(#sf)" opacity="0.26"/><circle cx="1147.2" cy="526.7" r="3.2" fill="url(#sf)" opacity="0.72"/><circle cx="799.7" cy="634.7" r="3.8" fill="url(#sf)" opacity="0.36"/><circle cx="681.9" cy="353.4" r="2.7" fill="url(#sf)" opacity="0.54"/><circle cx="686.8" cy="414.6" r="2.5" fill="url(#sf)" opacity="0.71"/><circle cx="747.9" cy="433.7" r="3.4" fill="url(#sf)" opacity="0.70"/><circle cx="791.1" cy="657.0" r="3.2" fill="url(#sf)" opacity="0.52"/><circle cx="857.7" cy="220.1" r="3.1" fill="url(#sf)" opacity="0.34"/><circle cx="521.5" cy="599.4" r="2.6" fill="url(#sf)" opacity="0.49"/><circle cx="988.2" cy="481.4" r="2.9" fill="url(#sf)" opacity="0.51"/><circle cx="878.4" cy="592.2" r="2.5" fill="url(#sf)" opacity="0.53"/><circle cx="679.8" cy="345.6" r="3.7" fill="url(#sf)" opacity="0.50"/><circle cx="882.4" cy="580.4" r="3.9" fill="url(#sf)" opacity="0.47"/><circle cx="915.3" cy="456.7" r="3.2" fill="url(#sf)" opacity="0.60"/><circle cx="811.7" cy="470.2" r="3.2" fill="url(#sf)" opacity="0.72"/><circle cx="971.4" cy="637.0" r="4.0" fill="url(#sf)" opacity="0.38"/><circle cx="881.0" cy="669.4" r="3.8" fill="url(#sf)" opacity="0.32"/><circle cx="597.7" cy="425.9" r="2.4" fill="url(#sf)" opacity="0.37"/><circle cx="566.3" cy="536.4" r="3.7" fill="url(#sf)" opacity="0.70"/><circle cx="618.9" cy="559.0" r="3.5" fill="url(#sf)" opacity="0.32"/><circle cx="1090.2" cy="681.2" r="2.7" fill="url(#sf)" opacity="0.73"/><circle cx="776.7" cy="447.8" r="4.1" fill="url(#sf)" opacity="0.67"/><circle cx="623.5" cy="420.7" r="3.2" fill="url(#sf)" opacity="0.42"/><circle cx="645.6" cy="365.8" r="3.6" fill="url(#sf)" opacity="0.26"/><circle cx="877.5" cy="425.1" r="2.3" fill="url(#sf)" opacity="0.42"/><circle cx="922.7" cy="460.0" r="2.4" fill="url(#sf)" opacity="0.74"/><circle cx="1029.1" cy="683.2" r="2.5" fill="url(#sf)" opacity="0.38"/><circle cx="544.6" cy="589.6" r="2.8" fill="url(#sf)" opacity="0.31"/><circle cx="792.2" cy="653.9" r="3.8" fill="url(#sf)" opacity="0.38"/><circle cx="615.6" cy="657.7" r="3.3" fill="url(#sf)" opacity="0.60"/><circle cx="576.9" cy="239.0" r="3.5" fill="url(#sf)" opacity="0.46"/><circle cx="565.9" cy="667.0" r="3.4" fill="url(#sf)" opacity="0.65"/><circle cx="573.2" cy="627.1" r="2.4" fill="url(#sf)" opacity="0.68"/><circle cx="812.6" cy="375.8" r="3.3" fill="url(#sf)" opacity="0.71"/><circle cx="692.3" cy="273.8" r="3.2" fill="url(#sf)" opacity="0.37"/><circle cx="589.8" cy="289.5" r="2.4" fill="url(#sf)" opacity="0.35"/><circle cx="720.9" cy="359.2" r="3.7" fill="url(#sf)" opacity="0.39"/><circle cx="842.6" cy="297.5" r="2.9" fill="url(#sf)" opacity="0.26"/><circle cx="681.0" cy="218.5" r="3.6" fill="url(#sf)" opacity="0.53"/><circle cx="641.6" cy="441.7" r="4.0" fill="url(#sf)" opacity="0.30"/><circle cx="1048.8" cy="421.0" r="3.2" fill="url(#sf)" opacity="0.67"/><circle cx="773.3" cy="457.2" r="3.5" fill="url(#sf)" opacity="0.74"/><circle cx="740.7" cy="615.5" r="3.6" fill="url(#sf)" opacity="0.57"/><circle cx="780.8" cy="379.9" r="2.4" fill="url(#sf)" opacity="0.31"/><circle cx="564.8" cy="571.1" r="2.8" fill="url(#sf)" opacity="0.33"/><circle cx="573.7" cy="619.9" r="3.9" fill="url(#sf)" opacity="0.59"/><circle cx="701.4" cy="328.7" r="2.8" fill="url(#sf)" opacity="0.48"/><circle cx="620.9" cy="427.7" r="2.8" fill="url(#sf)" opacity="0.73"/><circle cx="1148.3" cy="476.9" r="2.7" fill="url(#sf)" opacity="0.73"/><circle cx="719.3" cy="384.3" r="2.3" fill="url(#sf)" opacity="0.44"/><circle cx="826.1" cy="455.3" r="2.7" fill="url(#sf)" opacity="0.50"/><circle cx="522.2" cy="339.4" r="2.5" fill="url(#sf)" opacity="0.45"/><circle cx="546.0" cy="221.9" r="2.8" fill="url(#sf)" opacity="0.37"/><circle cx="897.9" cy="468.2" r="3.7" fill="url(#sf)" opacity="0.58"/><circle cx="982.2" cy="638.2" r="3.0" fill="url(#sf)" opacity="0.41"/><circle cx="1156.1" cy="283.6" r="3.6" fill="url(#sf)" opacity="0.57"/><circle cx="547.3" cy="617.0" r="3.9" fill="url(#sf)" opacity="0.56"/><circle cx="993.8" cy="605.7" r="2.6" fill="url(#sf)" opacity="0.51"/><circle cx="845.3" cy="616.8" r="3.7" fill="url(#sf)" opacity="0.66"/><circle cx="896.9" cy="644.9" r="3.5" fill="url(#sf)" opacity="0.60"/><circle cx="667.8" cy="226.1" r="2.5" fill="url(#sf)" opacity="0.43"/><circle cx="586.9" cy="617.2" r="3.3" fill="url(#sf)" opacity="0.56"/><circle cx="924.2" cy="541.8" r="3.2" fill="url(#sf)" opacity="0.25"/><circle cx="1035.1" cy="574.7" r="3.2" fill="url(#sf)" opacity="0.52"/><circle cx="945.6" cy="243.1" r="3.6" fill="url(#sf)" opacity="0.38"/><circle cx="567.2" cy="340.1" r="3.6" fill="url(#sf)" opacity="0.35"/><circle cx="997.7" cy="685.2" r="3.2" fill="url(#sf)" opacity="0.44"/><circle cx="828.9" cy="543.3" r="3.7" fill="url(#sf)" opacity="0.56"/><circle cx="934.9" cy="248.7" r="2.6" fill="url(#sf)" opacity="0.38"/><circle cx="999.9" cy="358.9" r="3.3" fill="url(#sf)" opacity="0.26"/><circle cx="558.2" cy="341.6" r="3.5" fill="url(#sf)" opacity="0.60"/><circle cx="956.2" cy="352.4" r="3.2" fill="url(#sf)" opacity="0.48"/><circle cx="820.7" cy="268.6" r="3.9" fill="url(#sf)" opacity="0.35"/><circle cx="1151.8" cy="666.0" r="2.3" fill="url(#sf)" opacity="0.48"/><circle cx="1049.5" cy="681.5" r="3.1" fill="url(#sf)" opacity="0.38"/><circle cx="654.8" cy="670.6" r="2.7" fill="url(#sf)" opacity="0.54"/><circle cx="610.7" cy="465.7" r="4.0" fill="url(#sf)" opacity="0.32"/><circle cx="1049.7" cy="458.2" r="3.9" fill="url(#sf)" opacity="0.60"/><circle cx="668.7" cy="647.3" r="3.2" fill="url(#sf)" opacity="0.26"/><circle cx="521.3" cy="450.0" r="3.1" fill="url(#sf)" opacity="0.40"/><circle cx="610.0" cy="378.2" r="2.9" fill="url(#sf)" opacity="0.67"/><circle cx="520.1" cy="575.9" r="3.8" fill="url(#sf)" opacity="0.31"/><circle cx="1118.4" cy="557.5" r="3.9" fill="url(#sf)" opacity="0.39"/><circle cx="759.8" cy="401.9" r="4.1" fill="url(#sf)" opacity="0.54"/><circle cx="752.4" cy="419.0" r="2.8" fill="url(#sf)" opacity="0.27"/><circle cx="584.8" cy="616.7" r="2.8" fill="url(#sf)" opacity="0.72"/><circle cx="680.3" cy="340.1" r="3.2" fill="url(#sf)" opacity="0.34"/><circle cx="760.6" cy="675.7" r="3.9" fill="url(#sf)" opacity="0.66"/><circle cx="927.2" cy="654.9" r="4.0" fill="url(#sf)" opacity="0.52"/><circle cx="984.6" cy="235.0" r="3.6" fill="url(#sf)" opacity="0.48"/><circle cx="1006.0" cy="524.2" r="2.8" fill="url(#sf)" opacity="0.27"/><circle cx="1118.6" cy="272.9" r="3.1" fill="url(#sf)" opacity="0.42"/><circle cx="711.7" cy="570.2" r="4.1" fill="url(#sf)" opacity="0.38"/><circle cx="943.4" cy="357.2" r="3.3" fill="url(#sf)" opacity="0.45"/><circle cx="627.3" cy="289.6" r="2.7" fill="url(#sf)" opacity="0.70"/><circle cx="840.6" cy="317.9" r="3.9" fill="url(#sf)" opacity="0.75"/><circle cx="810.1" cy="278.8" r="2.6" fill="url(#sf)" opacity="0.30"/><circle cx="740.2" cy="255.3" r="2.7" fill="url(#sf)" opacity="0.38"/><circle cx="887.5" cy="642.2" r="3.6" fill="url(#sf)" opacity="0.46"/><circle cx="786.8" cy="465.7" r="3.0" fill="url(#sf)" opacity="0.42"/><circle cx="559.2" cy="345.9" r="4.0" fill="url(#sf)" opacity="0.31"/><circle cx="844.7" cy="517.0" r="3.9" fill="url(#sf)" opacity="0.36"/><circle cx="694.4" cy="331.7" r="3.0" fill="url(#sf)" opacity="0.47"/><circle cx="1136.2" cy="623.5" r="3.9" fill="url(#sf)" opacity="0.26"/><circle cx="539.9" cy="555.8" r="3.9" fill="url(#sf)" opacity="0.49"/><circle cx="898.9" cy="211.1" r="3.0" fill="url(#sf)" opacity="0.71"/><circle cx="1053.2" cy="626.8" r="4.1" fill="url(#sf)" opacity="0.37"/><circle cx="589.6" cy="286.0" r="3.2" fill="url(#sf)" opacity="0.59"/><circle cx="1128.1" cy="561.8" r="3.5" fill="url(#sf)" opacity="0.63"/><circle cx="814.9" cy="479.0" r="2.4" fill="url(#sf)" opacity="0.64"/><circle cx="669.5" cy="658.1" r="3.5" fill="url(#sf)" opacity="0.40"/><circle cx="601.8" cy="333.4" r="3.4" fill="url(#sf)" opacity="0.60"/><circle cx="591.5" cy="245.2" r="3.2" fill="url(#sf)" opacity="0.54"/><circle cx="770.1" cy="319.7" r="3.4" fill="url(#sf)" opacity="0.26"/><circle cx="714.1" cy="434.9" r="4.0" fill="url(#sf)" opacity="0.57"/><circle cx="1090.8" cy="442.0" r="2.7" fill="url(#sf)" opacity="0.37"/><circle cx="1140.5" cy="553.5" r="2.9" fill="url(#sf)" opacity="0.26"/><circle cx="841.4" cy="538.8" r="3.1" fill="url(#sf)" opacity="0.38"/><circle cx="950.8" cy="660.6" r="2.7" fill="url(#sf)" opacity="0.27"/><circle cx="737.7" cy="415.4" r="3.5" fill="url(#sf)" opacity="0.35"/><circle cx="1034.7" cy="570.2" r="3.2" fill="url(#sf)" opacity="0.35"/><circle cx="1146.5" cy="362.5" r="3.8" fill="url(#sf)" opacity="0.37"/><circle cx="662.3" cy="580.6" r="2.8" fill="url(#sf)" opacity="0.73"/><circle cx="839.8" cy="302.0" r="2.7" fill="url(#sf)" opacity="0.46"/><circle cx="949.4" cy="672.1" r="2.6" fill="url(#sf)" opacity="0.45"/><circle cx="656.8" cy="684.4" r="2.6" fill="url(#sf)" opacity="0.28"/><circle cx="557.9" cy="402.2" r="3.9" fill="url(#sf)" opacity="0.69"/><circle cx="993.1" cy="695.8" r="4.0" fill="url(#sf)" opacity="0.41"/><circle cx="639.0" cy="665.8" r="3.6" fill="url(#sf)" opacity="0.27"/><circle cx="948.9" cy="395.0" r="3.0" fill="url(#sf)" opacity="0.42"/><circle cx="628.5" cy="212.4" r="2.8" fill="url(#sf)" opacity="0.43"/><circle cx="1137.2" cy="271.1" r="4.0" fill="url(#sf)" opacity="0.35"/><circle cx="749.7" cy="610.3" r="3.8" fill="url(#sf)" opacity="0.47"/><circle cx="550.9" cy="441.1" r="3.0" fill="url(#sf)" opacity="0.71"/><circle cx="643.9" cy="388.0" r="3.9" fill="url(#sf)" opacity="0.27"/><circle cx="784.8" cy="605.5" r="3.7" fill="url(#sf)" opacity="0.27"/><circle cx="541.6" cy="241.4" r="4.0" fill="url(#sf)" opacity="0.38"/><circle cx="1002.5" cy="647.7" r="2.9" fill="url(#sf)" opacity="0.39"/><circle cx="1138.6" cy="510.9" r="2.8" fill="url(#sf)" opacity="0.61"/><circle cx="723.8" cy="345.0" r="2.3" fill="url(#sf)" opacity="0.63"/><circle cx="1111.9" cy="519.1" r="4.0" fill="url(#sf)" opacity="0.26"/><circle cx="670.3" cy="441.9" r="4.0" fill="url(#sf)" opacity="0.73"/><circle cx="769.1" cy="333.0" r="3.1" fill="url(#sf)" opacity="0.50"/><circle cx="1119.5" cy="299.9" r="3.7" fill="url(#sf)" opacity="0.62"/><circle cx="1051.3" cy="586.6" r="3.4" fill="url(#sf)" opacity="0.41"/><circle cx="725.7" cy="386.9" r="3.7" fill="url(#sf)" opacity="0.29"/><circle cx="646.7" cy="576.9" r="2.7" fill="url(#sf)" opacity="0.28"/><circle cx="540.9" cy="479.6" r="2.9" fill="url(#sf)" opacity="0.74"/><circle cx="1090.6" cy="691.1" r="2.8" fill="url(#sf)" opacity="0.29"/><circle cx="581.4" cy="453.3" r="3.6" fill="url(#sf)" opacity="0.47"/><circle cx="670.5" cy="413.6" r="3.4" fill="url(#sf)" opacity="0.59"/><circle cx="1002.9" cy="622.6" r="3.5" fill="url(#sf)" opacity="0.31"/><circle cx="1063.0" cy="353.8" r="3.3" fill="url(#sf)" opacity="0.44"/><circle cx="996.5" cy="307.8" r="2.7" fill="url(#sf)" opacity="0.37"/><circle cx="618.2" cy="640.7" r="3.3" fill="url(#sf)" opacity="0.41"/><circle cx="775.3" cy="693.3" r="3.2" fill="url(#sf)" opacity="0.37"/><circle cx="1042.1" cy="528.5" r="4.1" fill="url(#sf)" opacity="0.30"/><circle cx="826.2" cy="609.1" r="3.8" fill="url(#sf)" opacity="0.71"/><circle cx="545.1" cy="353.7" r="2.5" fill="url(#sf)" opacity="0.34"/><circle cx="1148.5" cy="494.4" r="4.0" fill="url(#sf)" opacity="0.44"/><circle cx="1079.4" cy="429.3" r="2.8" fill="url(#sf)" opacity="0.64"/><circle cx="1130.9" cy="262.4" r="3.4" fill="url(#sf)" opacity="0.56"/><circle cx="659.8" cy="390.2" r="2.6" fill="url(#sf)" opacity="0.35"/><circle cx="683.9" cy="502.3" r="3.5" fill="url(#sf)" opacity="0.35"/><circle cx="526.4" cy="370.0" r="3.5" fill="url(#sf)" opacity="0.34"/><circle cx="721.0" cy="309.9" r="3.7" fill="url(#sf)" opacity="0.52"/><circle cx="559.9" cy="260.3" r="3.0" fill="url(#sf)" opacity="0.53"/><circle cx="932.6" cy="255.3" r="2.6" fill="url(#sf)" opacity="0.60"/><circle cx="784.1" cy="348.7" r="2.9" fill="url(#sf)" opacity="0.73"/><circle cx="721.1" cy="486.3" r="2.9" fill="url(#sf)" opacity="0.46"/><circle cx="1078.2" cy="695.4" r="3.0" fill="url(#sf)" opacity="0.35"/><circle cx="990.0" cy="310.0" r="2.3" fill="url(#sf)" opacity="0.70"/><circle cx="793.2" cy="609.7" r="3.0" fill="url(#sf)" opacity="0.69"/><circle cx="817.2" cy="290.0" r="2.3" fill="url(#sf)" opacity="0.53"/><circle cx="933.5" cy="653.2" r="2.5" fill="url(#sf)" opacity="0.56"/><circle cx="758.9" cy="456.2" r="2.6" fill="url(#sf)" opacity="0.39"/><circle cx="856.2" cy="660.8" r="2.5" fill="url(#sf)" opacity="0.50"/><circle cx="1039.7" cy="680.9" r="2.7" fill="url(#sf)" opacity="0.31"/><circle cx="1129.2" cy="685.1" r="3.2" fill="url(#sf)" opacity="0.28"/><circle cx="1118.2" cy="399.5" r="3.9" fill="url(#sf)" opacity="0.56"/><circle cx="1052.5" cy="288.9" r="3.7" fill="url(#sf)" opacity="0.36"/><circle cx="780.7" cy="622.3" r="3.8" fill="url(#sf)" opacity="0.34"/><circle cx="660.1" cy="405.3" r="3.2" fill="url(#sf)" opacity="0.44"/><circle cx="598.6" cy="331.1" r="3.6" fill="url(#sf)" opacity="0.70"/><circle cx="545.6" cy="484.3" r="3.7" fill="url(#sf)" opacity="0.27"/><circle cx="1061.3" cy="268.2" r="3.4" fill="url(#sf)" opacity="0.53"/><circle cx="924.7" cy="359.8" r="3.1" fill="url(#sf)" opacity="0.54"/><circle cx="794.5" cy="531.2" r="3.1" fill="url(#sf)" opacity="0.47"/><circle cx="534.1" cy="511.8" r="3.2" fill="url(#sf)" opacity="0.37"/><circle cx="1013.0" cy="590.1" r="3.1" fill="url(#sf)" opacity="0.34"/><circle cx="825.2" cy="263.0" r="2.5" fill="url(#sf)" opacity="0.47"/><circle cx="578.3" cy="425.8" r="3.2" fill="url(#sf)" opacity="0.27"/><circle cx="930.8" cy="251.0" r="3.6" fill="url(#sf)" opacity="0.64"/><circle cx="849.9" cy="237.4" r="3.2" fill="url(#sf)" opacity="0.44"/><circle cx="1134.2" cy="277.2" r="3.8" fill="url(#sf)" opacity="0.75"/><circle cx="992.7" cy="607.1" r="2.6" fill="url(#sf)" opacity="0.74"/><circle cx="837.2" cy="675.9" r="3.9" fill="url(#sf)" opacity="0.33"/><circle cx="1029.1" cy="663.3" r="2.4" fill="url(#sf)" opacity="0.43"/><circle cx="1008.2" cy="288.2" r="3.9" fill="url(#sf)" opacity="0.39"/><circle cx="1046.7" cy="280.8" r="3.2" fill="url(#sf)" opacity="0.71"/><circle cx="653.8" cy="338.8" r="3.2" fill="url(#sf)" opacity="0.41"/><circle cx="542.8" cy="299.5" r="2.6" fill="url(#sf)" opacity="0.72"/><circle cx="958.8" cy="646.2" r="2.6" fill="url(#sf)" opacity="0.64"/><circle cx="593.5" cy="468.9" r="3.4" fill="url(#sf)" opacity="0.43"/><circle cx="1083.8" cy="480.8" r="3.3" fill="url(#sf)" opacity="0.69"/><circle cx="586.7" cy="693.6" r="3.4" fill="url(#sf)" opacity="0.45"/><circle cx="1035.1" cy="339.7" r="4.1" fill="url(#sf)" opacity="0.54"/><circle cx="752.1" cy="582.6" r="3.1" fill="url(#sf)" opacity="0.34"/><circle cx="1000.1" cy="234.5" r="3.8" fill="url(#sf)" opacity="0.38"/><circle cx="932.6" cy="689.3" r="3.4" fill="url(#sf)" opacity="0.58"/><circle cx="721.3" cy="211.9" r="2.4" fill="url(#sf)" opacity="0.32"/><circle cx="917.6" cy="421.1" r="3.2" fill="url(#sf)" opacity="0.70"/><circle cx="604.4" cy="321.4" r="3.5" fill="url(#sf)" opacity="0.26"/><circle cx="520.7" cy="383.5" r="2.5" fill="url(#sf)" opacity="0.43"/><circle cx="664.1" cy="494.6" r="3.4" fill="url(#sf)" opacity="0.35"/><circle cx="922.7" cy="441.8" r="2.5" fill="url(#sf)" opacity="0.72"/><circle cx="676.6" cy="283.6" r="2.5" fill="url(#sf)" opacity="0.57"/><circle cx="1082.7" cy="591.1" r="3.0" fill="url(#sf)" opacity="0.38"/><circle cx="526.4" cy="524.4" r="3.3" fill="url(#sf)" opacity="0.43"/><circle cx="936.7" cy="426.7" r="4.0" fill="url(#sf)" opacity="0.62"/><circle cx="679.8" cy="650.1" r="2.4" fill="url(#sf)" opacity="0.52"/><circle cx="781.7" cy="326.5" r="2.4" fill="url(#sf)" opacity="0.64"/><circle cx="527.0" cy="478.7" r="4.0" fill="url(#sf)" opacity="0.32"/><circle cx="648.1" cy="506.5" r="3.2" fill="url(#sf)" opacity="0.57"/><circle cx="1045.3" cy="295.9" r="2.9" fill="url(#sf)" opacity="0.40"/><circle cx="550.4" cy="643.2" r="3.7" fill="url(#sf)" opacity="0.61"/><circle cx="523.1" cy="621.4" r="3.6" fill="url(#sf)" opacity="0.48"/><circle cx="998.9" cy="430.9" r="2.7" fill="url(#sf)" opacity="0.30"/><circle cx="669.3" cy="229.9" r="2.9" fill="url(#sf)" opacity="0.62"/><circle cx="968.7" cy="621.8" r="3.6" fill="url(#sf)" opacity="0.38"/><circle cx="877.3" cy="422.9" r="3.7" fill="url(#sf)" opacity="0.51"/><circle cx="690.6" cy="523.0" r="4.0" fill="url(#sf)" opacity="0.36"/><circle cx="1088.4" cy="218.4" r="2.8" fill="url(#sf)" opacity="0.37"/><circle cx="1000.3" cy="670.1" r="3.6" fill="url(#sf)" opacity="0.41"/><circle cx="1088.5" cy="370.7" r="2.7" fill="url(#sf)" opacity="0.70"/><circle cx="927.1" cy="547.7" r="3.5" fill="url(#sf)" opacity="0.74"/><circle cx="822.8" cy="619.1" r="3.6" fill="url(#sf)" opacity="0.68"/><circle cx="801.9" cy="563.2" r="3.3" fill="url(#sf)" opacity="0.40"/><circle cx="656.1" cy="513.6" r="2.4" fill="url(#sf)" opacity="0.71"/><circle cx="612.6" cy="224.1" r="2.5" fill="url(#sf)" opacity="0.71"/><circle cx="742.1" cy="279.9" r="2.4" fill="url(#sf)" opacity="0.27"/><circle cx="967.1" cy="519.1" r="3.6" fill="url(#sf)" opacity="0.62"/><circle cx="561.6" cy="498.0" r="3.0" fill="url(#sf)" opacity="0.66"/><circle cx="1049.3" cy="644.2" r="2.4" fill="url(#sf)" opacity="0.68"/><circle cx="1110.6" cy="669.9" r="2.5" fill="url(#sf)" opacity="0.35"/><circle cx="591.4" cy="227.7" r="3.8" fill="url(#sf)" opacity="0.66"/><circle cx="929.3" cy="612.0" r="3.4" fill="url(#sf)" opacity="0.39"/><circle cx="583.6" cy="258.6" r="3.7" fill="url(#sf)" opacity="0.35"/><circle cx="725.5" cy="416.9" r="2.3" fill="url(#sf)" opacity="0.38"/><circle cx="701.8" cy="558.9" r="3.0" fill="url(#sf)" opacity="0.41"/><circle cx="1142.7" cy="455.8" r="3.8" fill="url(#sf)" opacity="0.56"/><circle cx="539.0" cy="411.7" r="3.1" fill="url(#sf)" opacity="0.64"/><circle cx="743.4" cy="553.5" r="3.3" fill="url(#sf)" opacity="0.36"/><circle cx="1076.9" cy="255.2" r="3.8" fill="url(#sf)" opacity="0.34"/><circle cx="519.8" cy="309.2" r="3.7" fill="url(#sf)" opacity="0.74"/><circle cx="521.8" cy="449.5" r="3.2" fill="url(#sf)" opacity="0.65"/><circle cx="638.4" cy="451.4" r="2.9" fill="url(#sf)" opacity="0.67"/><circle cx="687.6" cy="669.7" r="2.8" fill="url(#sf)" opacity="0.36"/><circle cx="971.6" cy="453.2" r="2.5" fill="url(#sf)" opacity="0.57"/><circle cx="571.3" cy="593.9" r="3.6" fill="url(#sf)" opacity="0.64"/><circle cx="925.3" cy="383.8" r="3.0" fill="url(#sf)" opacity="0.45"/><circle cx="1095.1" cy="252.9" r="3.9" fill="url(#sf)" opacity="0.26"/><circle cx="652.4" cy="338.9" r="3.9" fill="url(#sf)" opacity="0.50"/><circle cx="764.4" cy="640.6" r="2.7" fill="url(#sf)" opacity="0.48"/><circle cx="862.9" cy="577.7" r="3.7" fill="url(#sf)" opacity="0.57"/><circle cx="744.5" cy="369.8" r="2.6" fill="url(#sf)" opacity="0.67"/><circle cx="947.4" cy="571.6" r="2.6" fill="url(#sf)" opacity="0.47"/><circle cx="1019.4" cy="492.5" r="2.5" fill="url(#sf)" opacity="0.48"/><circle cx="1091.7" cy="326.6" r="2.6" fill="url(#sf)" opacity="0.40"/><circle cx="973.9" cy="621.0" r="2.6" fill="url(#sf)" opacity="0.33"/><circle cx="679.2" cy="369.7" r="3.2" fill="url(#sf)" opacity="0.33"/><circle cx="731.3" cy="303.0" r="4.1" fill="url(#sf)" opacity="0.61"/><circle cx="584.9" cy="678.7" r="2.5" fill="url(#sf)" opacity="0.44"/><circle cx="1155.5" cy="597.3" r="3.6" fill="url(#sf)" opacity="0.47"/><circle cx="645.9" cy="521.1" r="2.5" fill="url(#sf)" opacity="0.35"/><circle cx="770.3" cy="227.5" r="3.0" fill="url(#sf)" opacity="0.65"/><circle cx="967.7" cy="454.2" r="3.4" fill="url(#sf)" opacity="0.48"/><circle cx="610.8" cy="504.4" r="3.0" fill="url(#sf)" opacity="0.62"/><circle cx="1106.5" cy="420.0" r="3.3" fill="url(#sf)" opacity="0.62"/><circle cx="791.5" cy="322.1" r="3.6" fill="url(#sf)" opacity="0.69"/><circle cx="1019.8" cy="551.2" r="3.8" fill="url(#sf)" opacity="0.59"/><circle cx="934.1" cy="431.6" r="2.9" fill="url(#sf)" opacity="0.56"/><circle cx="582.3" cy="414.9" r="3.7" fill="url(#sf)" opacity="0.61"/><circle cx="926.4" cy="332.5" r="3.1" fill="url(#sf)" opacity="0.48"/><circle cx="921.2" cy="409.9" r="3.5" fill="url(#sf)" opacity="0.72"/><circle cx="637.4" cy="529.1" r="3.7" fill="url(#sf)" opacity="0.44"/><circle cx="835.9" cy="684.7" r="2.4" fill="url(#sf)" opacity="0.52"/><circle cx="623.1" cy="591.0" r="4.0" fill="url(#sf)" opacity="0.51"/><circle cx="584.4" cy="490.2" r="3.3" fill="url(#sf)" opacity="0.61"/><circle cx="850.4" cy="521.7" r="3.8" fill="url(#sf)" opacity="0.51"/><circle cx="784.5" cy="671.7" r="2.7" fill="url(#sf)" opacity="0.59"/><circle cx="772.9" cy="581.7" r="2.5" fill="url(#sf)" opacity="0.74"/><circle cx="749.0" cy="238.5" r="2.8" fill="url(#sf)" opacity="0.45"/><circle cx="527.6" cy="414.4" r="3.1" fill="url(#sf)" opacity="0.60"/><circle cx="746.8" cy="339.9" r="2.7" fill="url(#sf)" opacity="0.62"/><circle cx="1127.1" cy="467.2" r="2.7" fill="url(#sf)" opacity="0.65"/><circle cx="772.6" cy="314.0" r="2.5" fill="url(#sf)" opacity="0.64"/><circle cx="1042.8" cy="519.3" r="3.1" fill="url(#sf)" opacity="0.53"/><circle cx="665.2" cy="679.4" r="2.9" fill="url(#sf)" opacity="0.57"/><circle cx="1048.7" cy="607.7" r="3.1" fill="url(#sf)" opacity="0.40"/><circle cx="873.7" cy="271.8" r="3.8" fill="url(#sf)" opacity="0.43"/><circle cx="1069.4" cy="341.0" r="3.0" fill="url(#sf)" opacity="0.38"/><circle cx="794.7" cy="301.3" r="2.3" fill="url(#sf)" opacity="0.61"/><circle cx="700.9" cy="330.1" r="2.8" fill="url(#sf)" opacity="0.49"/><circle cx="796.2" cy="520.7" r="3.5" fill="url(#sf)" opacity="0.43"/><circle cx="1119.9" cy="626.3" r="2.4" fill="url(#sf)" opacity="0.66"/><circle cx="1105.1" cy="592.0" r="2.6" fill="url(#sf)" opacity="0.67"/><circle cx="928.7" cy="218.3" r="2.3" fill="url(#sf)" opacity="0.73"/><circle cx="943.4" cy="332.5" r="2.5" fill="url(#sf)" opacity="0.32"/><circle cx="670.2" cy="588.3" r="2.9" fill="url(#sf)" opacity="0.33"/><circle cx="1103.9" cy="595.8" r="2.6" fill="url(#sf)" opacity="0.70"/><circle cx="912.6" cy="590.7" r="3.5" fill="url(#sf)" opacity="0.70"/><circle cx="1028.9" cy="618.7" r="2.7" fill="url(#sf)" opacity="0.60"/><circle cx="862.4" cy="571.6" r="3.1" fill="url(#sf)" opacity="0.69"/><circle cx="878.1" cy="339.5" r="2.7" fill="url(#sf)" opacity="0.32"/><circle cx="838.0" cy="239.4" r="3.1" fill="url(#sf)" opacity="0.32"/><circle cx="836.9" cy="453.1" r="3.3" fill="url(#sf)" opacity="0.68"/><circle cx="523.3" cy="619.6" r="3.1" fill="url(#sf)" opacity="0.53"/><circle cx="949.4" cy="619.5" r="3.0" fill="url(#sf)" opacity="0.46"/><circle cx="1140.5" cy="247.6" r="3.4" fill="url(#sf)" opacity="0.57"/><circle cx="537.5" cy="507.3" r="3.5" fill="url(#sf)" opacity="0.72"/><circle cx="732.8" cy="688.1" r="3.2" fill="url(#sf)" opacity="0.49"/><circle cx="1099.7" cy="227.5" r="3.6" fill="url(#sf)" opacity="0.56"/><circle cx="738.1" cy="629.8" r="3.0" fill="url(#sf)" opacity="0.49"/><circle cx="859.0" cy="585.5" r="2.7" fill="url(#sf)" opacity="0.47"/><circle cx="792.3" cy="480.3" r="3.8" fill="url(#sf)" opacity="0.40"/><circle cx="1054.5" cy="407.2" r="3.2" fill="url(#sf)" opacity="0.39"/><circle cx="846.7" cy="684.8" r="3.5" fill="url(#sf)" opacity="0.65"/><circle cx="733.1" cy="365.1" r="2.8" fill="url(#sf)" opacity="0.54"/><circle cx="929.7" cy="592.1" r="2.4" fill="url(#sf)" opacity="0.61"/><circle cx="1092.0" cy="476.1" r="2.4" fill="url(#sf)" opacity="0.40"/><circle cx="523.0" cy="303.3" r="4.0" fill="url(#sf)" opacity="0.55"/><circle cx="944.7" cy="594.5" r="3.9" fill="url(#sf)" opacity="0.56"/><circle cx="918.0" cy="515.6" r="3.6" fill="url(#sf)" opacity="0.55"/><circle cx="959.6" cy="314.3" r="3.5" fill="url(#sf)" opacity="0.48"/><circle cx="1012.5" cy="260.3" r="2.6" fill="url(#sf)" opacity="0.27"/><circle cx="1020.1" cy="655.2" r="3.5" fill="url(#sf)" opacity="0.43"/><circle cx="1051.2" cy="593.3" r="3.3" fill="url(#sf)" opacity="0.38"/><circle cx="714.4" cy="416.0" r="2.9" fill="url(#sf)" opacity="0.47"/><circle cx="934.2" cy="664.9" r="2.4" fill="url(#sf)" opacity="0.53"/><circle cx="544.5" cy="268.8" r="3.8" fill="url(#sf)" opacity="0.54"/><circle cx="1113.4" cy="428.0" r="2.3" fill="url(#sf)" opacity="0.44"/><circle cx="902.0" cy="666.7" r="4.1" fill="url(#sf)" opacity="0.49"/><circle cx="785.8" cy="260.6" r="3.5" fill="url(#sf)" opacity="0.36"/><circle cx="617.2" cy="218.5" r="2.3" fill="url(#sf)" opacity="0.59"/><circle cx="597.7" cy="680.6" r="2.5" fill="url(#sf)" opacity="0.68"/><circle cx="602.4" cy="219.6" r="3.6" fill="url(#sf)" opacity="0.37"/><circle cx="993.6" cy="302.1" r="2.4" fill="url(#sf)" opacity="0.64"/><circle cx="980.7" cy="626.8" r="3.6" fill="url(#sf)" opacity="0.29"/><circle cx="925.7" cy="555.7" r="3.1" fill="url(#sf)" opacity="0.72"/><circle cx="683.4" cy="679.7" r="3.6" fill="url(#sf)" opacity="0.26"/><circle cx="528.5" cy="527.2" r="3.8" fill="url(#sf)" opacity="0.29"/><circle cx="720.3" cy="565.5" r="2.6" fill="url(#sf)" opacity="0.68"/><circle cx="833.7" cy="240.1" r="3.0" fill="url(#sf)" opacity="0.54"/><circle cx="802.9" cy="540.0" r="2.6" fill="url(#sf)" opacity="0.65"/><circle cx="754.0" cy="524.4" r="3.4" fill="url(#sf)" opacity="0.46"/><circle cx="768.6" cy="593.1" r="4.0" fill="url(#sf)" opacity="0.64"/><circle cx="885.7" cy="353.1" r="2.4" fill="url(#sf)" opacity="0.74"/><circle cx="974.0" cy="613.1" r="2.9" fill="url(#sf)" opacity="0.55"/><circle cx="1151.4" cy="615.0" r="3.4" fill="url(#sf)" opacity="0.40"/><circle cx="796.3" cy="642.6" r="3.0" fill="url(#sf)" opacity="0.59"/><circle cx="908.4" cy="646.5" r="3.8" fill="url(#sf)" opacity="0.39"/><circle cx="520.1" cy="338.8" r="3.1" fill="url(#sf)" opacity="0.54"/><circle cx="1046.9" cy="642.3" r="2.4" fill="url(#sf)" opacity="0.67"/><circle cx="1044.2" cy="632.5" r="3.3" fill="url(#sf)" opacity="0.39"/><circle cx="1069.7" cy="603.2" r="3.5" fill="url(#sf)" opacity="0.71"/><circle cx="743.4" cy="252.3" r="3.3" fill="url(#sf)" opacity="0.65"/><circle cx="648.7" cy="575.6" r="4.0" fill="url(#sf)" opacity="0.37"/><circle cx="911.7" cy="540.3" r="3.1" fill="url(#sf)" opacity="0.35"/><circle cx="683.8" cy="576.1" r="3.7" fill="url(#sf)" opacity="0.48"/><circle cx="575.7" cy="603.0" r="3.7" fill="url(#sf)" opacity="0.37"/><circle cx="894.0" cy="646.9" r="3.9" fill="url(#sf)" opacity="0.51"/><circle cx="827.4" cy="497.4" r="2.6" fill="url(#sf)" opacity="0.35"/><circle cx="635.9" cy="551.7" r="3.0" fill="url(#sf)" opacity="0.53"/><circle cx="779.4" cy="462.4" r="2.6" fill="url(#sf)" opacity="0.27"/><circle cx="1164.2" cy="392.8" r="2.5" fill="url(#sf)" opacity="0.57"/><circle cx="1028.4" cy="286.9" r="3.4" fill="url(#sf)" opacity="0.42"/><circle cx="855.1" cy="221.0" r="2.4" fill="url(#sf)" opacity="0.75"/><circle cx="1079.4" cy="447.3" r="3.3" fill="url(#sf)" opacity="0.38"/><circle cx="1023.1" cy="418.0" r="4.0" fill="url(#sf)" opacity="0.63"/><circle cx="1048.8" cy="679.2" r="2.8" fill="url(#sf)" opacity="0.27"/><circle cx="649.0" cy="298.8" r="2.5" fill="url(#sf)" opacity="0.28"/><circle cx="879.6" cy="634.1" r="3.1" fill="url(#sf)" opacity="0.72"/><circle cx="1107.7" cy="242.2" r="3.4" fill="url(#sf)" opacity="0.45"/><circle cx="596.6" cy="677.2" r="2.8" fill="url(#sf)" opacity="0.53"/><circle cx="933.5" cy="675.8" r="3.5" fill="url(#sf)" opacity="0.45"/><circle cx="809.1" cy="288.6" r="4.0" fill="url(#sf)" opacity="0.75"/><circle cx="662.5" cy="229.8" r="2.8" fill="url(#sf)" opacity="0.43"/><circle cx="1103.1" cy="650.6" r="3.8" fill="url(#sf)" opacity="0.27"/><circle cx="1027.8" cy="555.9" r="3.5" fill="url(#sf)" opacity="0.74"/><circle cx="555.1" cy="281.4" r="3.7" fill="url(#sf)" opacity="0.72"/><circle cx="956.9" cy="356.2" r="3.4" fill="url(#sf)" opacity="0.63"/><circle cx="587.2" cy="368.4" r="2.8" fill="url(#sf)" opacity="0.31"/><circle cx="830.4" cy="292.9" r="2.7" fill="url(#sf)" opacity="0.32"/><circle cx="957.4" cy="217.1" r="3.6" fill="url(#sf)" opacity="0.35"/><circle cx="542.3" cy="661.9" r="2.7" fill="url(#sf)" opacity="0.72"/><circle cx="1079.8" cy="642.9" r="2.6" fill="url(#sf)" opacity="0.47"/><circle cx="581.8" cy="662.4" r="3.8" fill="url(#sf)" opacity="0.56"/><circle cx="811.7" cy="376.1" r="3.8" fill="url(#sf)" opacity="0.49"/><circle cx="925.4" cy="280.4" r="2.7" fill="url(#sf)" opacity="0.28"/><circle cx="980.8" cy="479.9" r="2.6" fill="url(#sf)" opacity="0.69"/><circle cx="691.4" cy="411.1" r="2.6" fill="url(#sf)" opacity="0.39"/><circle cx="1062.2" cy="373.6" r="2.6" fill="url(#sf)" opacity="0.50"/><circle cx="724.8" cy="649.9" r="2.5" fill="url(#sf)" opacity="0.74"/><circle cx="555.8" cy="646.0" r="3.5" fill="url(#sf)" opacity="0.36"/><circle cx="827.9" cy="350.1" r="2.8" fill="url(#sf)" opacity="0.35"/><circle cx="754.7" cy="692.6" r="4.1" fill="url(#sf)" opacity="0.71"/><circle cx="582.1" cy="351.7" r="3.9" fill="url(#sf)" opacity="0.28"/><circle cx="989.0" cy="353.7" r="4.1" fill="url(#sf)" opacity="0.26"/><circle cx="1041.1" cy="376.7" r="2.6" fill="url(#sf)" opacity="0.25"/><circle cx="1057.5" cy="466.9" r="2.6" fill="url(#sf)" opacity="0.47"/><circle cx="1109.1" cy="317.1" r="3.3" fill="url(#sf)" opacity="0.32"/><circle cx="635.5" cy="585.4" r="3.6" fill="url(#sf)" opacity="0.35"/><circle cx="570.3" cy="253.5" r="3.4" fill="url(#sf)" opacity="0.50"/><circle cx="696.2" cy="311.1" r="3.4" fill="url(#sf)" opacity="0.60"/><circle cx="1044.1" cy="494.3" r="2.7" fill="url(#sf)" opacity="0.28"/><circle cx="993.1" cy="409.3" r="3.6" fill="url(#sf)" opacity="0.28"/><circle cx="1043.5" cy="373.9" r="3.8" fill="url(#sf)" opacity="0.68"/><circle cx="838.0" cy="218.5" r="3.9" fill="url(#sf)" opacity="0.49"/><circle cx="1083.2" cy="340.4" r="2.6" fill="url(#sf)" opacity="0.67"/><circle cx="756.5" cy="290.5" r="3.0" fill="url(#sf)" opacity="0.55"/><circle cx="522.0" cy="463.6" r="3.1" fill="url(#sf)" opacity="0.51"/><circle cx="597.1" cy="558.3" r="3.8" fill="url(#sf)" opacity="0.68"/><circle cx="726.7" cy="556.6" r="3.0" fill="url(#sf)" opacity="0.63"/><circle cx="558.6" cy="635.2" r="4.0" fill="url(#sf)" opacity="0.50"/><circle cx="851.1" cy="468.8" r="3.3" fill="url(#sf)" opacity="0.26"/><circle cx="1144.9" cy="319.7" r="2.6" fill="url(#sf)" opacity="0.30"/><circle cx="681.0" cy="608.1" r="2.4" fill="url(#sf)" opacity="0.30"/><circle cx="971.2" cy="305.8" r="2.3" fill="url(#sf)" opacity="0.55"/><circle cx="892.0" cy="465.1" r="3.6" fill="url(#sf)" opacity="0.30"/><circle cx="1081.6" cy="559.5" r="2.4" fill="url(#sf)" opacity="0.31"/><circle cx="838.4" cy="454.4" r="2.8" fill="url(#sf)" opacity="0.31"/><circle cx="781.5" cy="277.6" r="3.4" fill="url(#sf)" opacity="0.68"/><circle cx="614.3" cy="489.4" r="3.6" fill="url(#sf)" opacity="0.33"/><circle cx="1053.4" cy="666.7" r="3.0" fill="url(#sf)" opacity="0.46"/><circle cx="1062.3" cy="466.4" r="3.0" fill="url(#sf)" opacity="0.72"/><circle cx="1021.7" cy="375.5" r="2.7" fill="url(#sf)" opacity="0.42"/><circle cx="800.8" cy="687.9" r="3.7" fill="url(#sf)" opacity="0.71"/><circle cx="1046.3" cy="622.9" r="2.4" fill="url(#sf)" opacity="0.51"/><circle cx="1138.7" cy="665.1" r="2.7" fill="url(#sf)" opacity="0.46"/><circle cx="928.4" cy="388.1" r="3.3" fill="url(#sf)" opacity="0.28"/><circle cx="799.2" cy="456.3" r="2.3" fill="url(#sf)" opacity="0.32"/><circle cx="1146.4" cy="588.4" r="4.0" fill="url(#sf)" opacity="0.57"/><circle cx="1042.6" cy="640.8" r="3.9" fill="url(#sf)" opacity="0.27"/><circle cx="934.1" cy="340.2" r="3.5" fill="url(#sf)" opacity="0.39"/><circle cx="869.8" cy="660.3" r="3.4" fill="url(#sf)" opacity="0.38"/><circle cx="855.6" cy="421.8" r="4.0" fill="url(#sf)" opacity="0.39"/><circle cx="716.6" cy="525.7" r="2.5" fill="url(#sf)" opacity="0.55"/><circle cx="1137.6" cy="460.7" r="2.8" fill="url(#sf)" opacity="0.48"/><circle cx="864.4" cy="283.1" r="2.5" fill="url(#sf)" opacity="0.32"/><circle cx="709.0" cy="408.6" r="2.8" fill="url(#sf)" opacity="0.37"/><circle cx="575.8" cy="476.5" r="3.8" fill="url(#sf)" opacity="0.55"/><circle cx="887.9" cy="527.1" r="2.7" fill="url(#sf)" opacity="0.61"/><circle cx="817.2" cy="477.3" r="3.4" fill="url(#sf)" opacity="0.48"/><circle cx="719.9" cy="328.7" r="2.7" fill="url(#sf)" opacity="0.51"/><circle cx="766.9" cy="495.6" r="2.3" fill="url(#sf)" opacity="0.43"/><circle cx="1076.6" cy="326.9" r="3.3" fill="url(#sf)" opacity="0.50"/><circle cx="703.3" cy="690.9" r="2.8" fill="url(#sf)" opacity="0.64"/><circle cx="621.6" cy="243.5" r="3.9" fill="url(#sf)" opacity="0.47"/><circle cx="559.1" cy="399.5" r="3.1" fill="url(#sf)" opacity="0.62"/><circle cx="589.7" cy="320.4" r="4.0" fill="url(#sf)" opacity="0.62"/><circle cx="619.0" cy="374.8" r="2.9" fill="url(#sf)" opacity="0.59"/><circle cx="917.7" cy="624.1" r="3.8" fill="url(#sf)" opacity="0.51"/><circle cx="997.0" cy="572.2" r="3.7" fill="url(#sf)" opacity="0.49"/><circle cx="1026.9" cy="555.4" r="3.9" fill="url(#sf)" opacity="0.31"/><circle cx="1082.4" cy="213.1" r="3.7" fill="url(#sf)" opacity="0.54"/><circle cx="841.1" cy="678.9" r="3.3" fill="url(#sf)" opacity="0.46"/><circle cx="1026.0" cy="635.2" r="3.4" fill="url(#sf)" opacity="0.44"/><circle cx="811.6" cy="433.5" r="3.6" fill="url(#sf)" opacity="0.40"/><circle cx="771.8" cy="480.9" r="3.0" fill="url(#sf)" opacity="0.41"/><circle cx="1028.2" cy="623.9" r="3.2" fill="url(#sf)" opacity="0.47"/><circle cx="638.2" cy="358.8" r="2.6" fill="url(#sf)" opacity="0.54"/><circle cx="895.3" cy="253.7" r="4.0" fill="url(#sf)" opacity="0.41"/><circle cx="1064.7" cy="618.3" r="4.0" fill="url(#sf)" opacity="0.35"/><circle cx="794.9" cy="653.5" r="2.3" fill="url(#sf)" opacity="0.27"/><circle cx="884.5" cy="452.7" r="4.0" fill="url(#sf)" opacity="0.64"/><circle cx="867.4" cy="696.2" r="3.2" fill="url(#sf)" opacity="0.51"/><circle cx="962.3" cy="400.3" r="2.9" fill="url(#sf)" opacity="0.55"/><circle cx="746.2" cy="671.7" r="3.5" fill="url(#sf)" opacity="0.51"/><circle cx="583.0" cy="393.0" r="3.0" fill="url(#sf)" opacity="0.53"/><circle cx="890.4" cy="638.6" r="4.0" fill="url(#sf)" opacity="0.49"/><circle cx="803.8" cy="514.6" r="4.1" fill="url(#sf)" opacity="0.42"/><circle cx="862.0" cy="607.5" r="2.6" fill="url(#sf)" opacity="0.41"/><circle cx="1152.0" cy="612.5" r="3.2" fill="url(#sf)" opacity="0.31"/><circle cx="1097.7" cy="546.3" r="3.8" fill="url(#sf)" opacity="0.75"/><circle cx="1093.6" cy="415.6" r="2.6" fill="url(#sf)" opacity="0.39"/><circle cx="850.0" cy="456.4" r="2.6" fill="url(#sf)" opacity="0.34"/><circle cx="926.7" cy="504.1" r="2.9" fill="url(#sf)" opacity="0.75"/><circle cx="930.8" cy="231.6" r="3.0" fill="url(#sf)" opacity="0.64"/><circle cx="717.5" cy="546.7" r="2.3" fill="url(#sf)" opacity="0.40"/><circle cx="1063.9" cy="495.9" r="3.5" fill="url(#sf)" opacity="0.35"/><circle cx="841.1" cy="479.9" r="2.8" fill="url(#sf)" opacity="0.57"/><circle cx="862.9" cy="695.6" r="3.3" fill="url(#sf)" opacity="0.46"/><circle cx="597.6" cy="287.2" r="3.7" fill="url(#sf)" opacity="0.30"/><circle cx="583.8" cy="293.9" r="3.2" fill="url(#sf)" opacity="0.66"/><circle cx="915.6" cy="603.0" r="2.4" fill="url(#sf)" opacity="0.26"/><circle cx="1017.6" cy="367.9" r="3.6" fill="url(#sf)" opacity="0.43"/><circle cx="628.6" cy="340.6" r="2.5" fill="url(#sf)" opacity="0.70"/><circle cx="895.7" cy="380.6" r="3.1" fill="url(#sf)" opacity="0.44"/><circle cx="554.4" cy="643.8" r="3.3" fill="url(#sf)" opacity="0.73"/><circle cx="803.4" cy="512.4" r="2.7" fill="url(#sf)" opacity="0.27"/><circle cx="1121.2" cy="626.4" r="2.9" fill="url(#sf)" opacity="0.70"/><circle cx="1046.9" cy="358.6" r="3.4" fill="url(#sf)" opacity="0.73"/><circle cx="839.6" cy="672.6" r="2.7" fill="url(#sf)" opacity="0.44"/><circle cx="983.8" cy="318.6" r="2.9" fill="url(#sf)" opacity="0.69"/><circle cx="832.4" cy="596.3" r="2.7" fill="url(#sf)" opacity="0.34"/><circle cx="750.9" cy="301.7" r="4.0" fill="url(#sf)" opacity="0.40"/><circle cx="882.3" cy="266.8" r="3.3" fill="url(#sf)" opacity="0.44"/><circle cx="779.9" cy="242.8" r="2.5" fill="url(#sf)" opacity="0.66"/><circle cx="746.3" cy="330.0" r="2.6" fill="url(#sf)" opacity="0.39"/><circle cx="672.5" cy="228.0" r="3.5" fill="url(#sf)" opacity="0.42"/><circle cx="619.9" cy="554.1" r="2.5" fill="url(#sf)" opacity="0.38"/><circle cx="1059.3" cy="273.1" r="3.1" fill="url(#sf)" opacity="0.67"/><circle cx="1039.8" cy="288.4" r="2.9" fill="url(#sf)" opacity="0.61"/><circle cx="762.9" cy="676.8" r="2.7" fill="url(#sf)" opacity="0.73"/><circle cx="845.6" cy="321.5" r="3.1" fill="url(#sf)" opacity="0.32"/><circle cx="976.1" cy="337.7" r="3.9" fill="url(#sf)" opacity="0.54"/><circle cx="757.1" cy="330.7" r="3.4" fill="url(#sf)" opacity="0.36"/><circle cx="1083.4" cy="270.7" r="3.2" fill="url(#sf)" opacity="0.52"/><circle cx="694.0" cy="586.1" r="3.0" fill="url(#sf)" opacity="0.58"/><circle cx="886.3" cy="362.0" r="3.0" fill="url(#sf)" opacity="0.29"/><circle cx="633.5" cy="624.6" r="2.9" fill="url(#sf)" opacity="0.58"/><circle cx="589.5" cy="484.1" r="3.0" fill="url(#sf)" opacity="0.50"/><circle cx="711.1" cy="243.0" r="2.9" fill="url(#sf)" opacity="0.36"/><circle cx="600.6" cy="559.3" r="2.8" fill="url(#sf)" opacity="0.45"/><circle cx="1107.1" cy="587.6" r="3.9" fill="url(#sf)" opacity="0.68"/><circle cx="604.5" cy="345.4" r="2.4" fill="url(#sf)" opacity="0.59"/><circle cx="948.4" cy="381.8" r="3.0" fill="url(#sf)" opacity="0.58"/><circle cx="971.4" cy="331.7" r="3.8" fill="url(#sf)" opacity="0.43"/><circle cx="925.9" cy="299.3" r="2.5" fill="url(#sf)" opacity="0.71"/><circle cx="993.9" cy="557.3" r="2.4" fill="url(#sf)" opacity="0.27"/><circle cx="623.8" cy="307.3" r="2.8" fill="url(#sf)" opacity="0.44"/><circle cx="544.4" cy="362.1" r="3.4" fill="url(#sf)" opacity="0.34"/><circle cx="1062.1" cy="488.1" r="3.6" fill="url(#sf)" opacity="0.38"/><circle cx="800.4" cy="543.6" r="2.9" fill="url(#sf)" opacity="0.25"/><circle cx="1058.8" cy="588.4" r="2.8" fill="url(#sf)" opacity="0.27"/><circle cx="1071.6" cy="506.2" r="2.4" fill="url(#sf)" opacity="0.37"/><circle cx="590.9" cy="595.6" r="2.7" fill="url(#sf)" opacity="0.71"/><circle cx="1003.9" cy="252.9" r="3.6" fill="url(#sf)" opacity="0.45"/><circle cx="1002.7" cy="613.8" r="2.8" fill="url(#sf)" opacity="0.29"/><circle cx="1131.3" cy="417.1" r="4.0" fill="url(#sf)" opacity="0.60"/><circle cx="996.9" cy="614.4" r="3.4" fill="url(#sf)" opacity="0.48"/><circle cx="554.1" cy="550.4" r="3.1" fill="url(#sf)" opacity="0.51"/><circle cx="1119.5" cy="273.0" r="3.7" fill="url(#sf)" opacity="0.27"/><circle cx="973.7" cy="602.6" r="2.8" fill="url(#sf)" opacity="0.52"/><circle cx="1146.2" cy="520.8" r="3.3" fill="url(#sf)" opacity="0.37"/><circle cx="557.4" cy="384.9" r="3.0" fill="url(#sf)" opacity="0.35"/><circle cx="719.9" cy="277.4" r="3.6" fill="url(#sf)" opacity="0.59"/><circle cx="672.9" cy="328.5" r="3.2" fill="url(#sf)" opacity="0.47"/><circle cx="1124.5" cy="381.8" r="2.8" fill="url(#sf)" opacity="0.69"/><circle cx="610.8" cy="484.7" r="2.9" fill="url(#sf)" opacity="0.66"/><circle cx="873.7" cy="580.6" r="2.6" fill="url(#sf)" opacity="0.58"/><circle cx="906.3" cy="435.1" r="3.7" fill="url(#sf)" opacity="0.67"/><circle cx="593.1" cy="351.6" r="2.9" fill="url(#sf)" opacity="0.35"/><circle cx="558.0" cy="347.5" r="2.7" fill="url(#sf)" opacity="0.60"/><circle cx="808.9" cy="265.9" r="2.9" fill="url(#sf)" opacity="0.48"/><circle cx="753.8" cy="292.7" r="2.4" fill="url(#sf)" opacity="0.26"/><circle cx="1160.9" cy="575.7" r="2.5" fill="url(#sf)" opacity="0.61"/><circle cx="1153.2" cy="484.9" r="2.5" fill="url(#sf)" opacity="0.49"/><circle cx="800.0" cy="303.2" r="3.3" fill="url(#sf)" opacity="0.25"/><circle cx="1114.0" cy="524.2" r="3.4" fill="url(#sf)" opacity="0.72"/><circle cx="941.2" cy="333.2" r="2.7" fill="url(#sf)" opacity="0.32"/><circle cx="536.9" cy="587.4" r="3.8" fill="url(#sf)" opacity="0.40"/><circle cx="639.2" cy="521.1" r="3.8" fill="url(#sf)" opacity="0.71"/><circle cx="628.0" cy="592.3" r="3.8" fill="url(#sf)" opacity="0.62"/><circle cx="730.4" cy="300.7" r="3.8" fill="url(#sf)" opacity="0.41"/><circle cx="757.4" cy="478.9" r="3.0" fill="url(#sf)" opacity="0.67"/><circle cx="673.9" cy="231.0" r="3.3" fill="url(#sf)" opacity="0.56"/><circle cx="1049.4" cy="553.9" r="3.9" fill="url(#sf)" opacity="0.72"/><circle cx="838.9" cy="453.8" r="2.6" fill="url(#sf)" opacity="0.40"/><circle cx="895.0" cy="250.0" r="3.5" fill="url(#sf)" opacity="0.33"/><circle cx="805.7" cy="682.3" r="2.5" fill="url(#sf)" opacity="0.27"/><circle cx="803.4" cy="303.7" r="3.6" fill="url(#sf)" opacity="0.25"/><circle cx="1063.0" cy="626.7" r="3.7" fill="url(#sf)" opacity="0.46"/><circle cx="702.3" cy="532.5" r="3.2" fill="url(#sf)" opacity="0.46"/><circle cx="738.1" cy="424.2" r="3.5" fill="url(#sf)" opacity="0.66"/><circle cx="1103.9" cy="290.9" r="2.8" fill="url(#sf)" opacity="0.47"/><circle cx="883.5" cy="380.2" r="2.7" fill="url(#sf)" opacity="0.29"/><circle cx="728.4" cy="434.8" r="4.0" fill="url(#sf)" opacity="0.70"/><circle cx="1078.9" cy="684.5" r="4.0" fill="url(#sf)" opacity="0.56"/><circle cx="1043.8" cy="240.2" r="3.5" fill="url(#sf)" opacity="0.55"/><circle cx="711.2" cy="488.6" r="4.0" fill="url(#sf)" opacity="0.49"/><circle cx="937.8" cy="356.5" r="2.9" fill="url(#sf)" opacity="0.69"/><circle cx="537.0" cy="302.8" r="3.5" fill="url(#sf)" opacity="0.47"/><circle cx="574.1" cy="532.0" r="3.0" fill="url(#sf)" opacity="0.54"/><circle cx="788.4" cy="468.6" r="3.3" fill="url(#sf)" opacity="0.45"/><circle cx="592.9" cy="298.7" r="3.9" fill="url(#sf)" opacity="0.52"/><circle cx="591.6" cy="630.0" r="2.8" fill="url(#sf)" opacity="0.30"/><circle cx="862.4" cy="333.2" r="3.2" fill="url(#sf)" opacity="0.53"/><circle cx="665.6" cy="489.3" r="2.5" fill="url(#sf)" opacity="0.51"/><circle cx="899.7" cy="250.0" r="3.0" fill="url(#sf)" opacity="0.29"/><circle cx="803.4" cy="630.6" r="3.3" fill="url(#sf)" opacity="0.61"/><circle cx="1008.7" cy="266.7" r="4.1" fill="url(#sf)" opacity="0.61"/><circle cx="585.1" cy="614.5" r="3.0" fill="url(#sf)" opacity="0.34"/><circle cx="1140.1" cy="484.6" r="3.7" fill="url(#sf)" opacity="0.32"/><circle cx="1021.2" cy="239.0" r="2.7" fill="url(#sf)" opacity="0.44"/><circle cx="528.8" cy="499.8" r="2.7" fill="url(#sf)" opacity="0.40"/><circle cx="976.7" cy="418.0" r="3.9" fill="url(#sf)" opacity="0.56"/><circle cx="1083.3" cy="484.6" r="4.0" fill="url(#sf)" opacity="0.69"/><circle cx="627.7" cy="573.3" r="2.9" fill="url(#sf)" opacity="0.63"/><circle cx="959.3" cy="612.3" r="2.5" fill="url(#sf)" opacity="0.44"/><circle cx="996.0" cy="671.7" r="3.6" fill="url(#sf)" opacity="0.27"/><circle cx="909.7" cy="259.4" r="3.3" fill="url(#sf)" opacity="0.65"/><circle cx="592.1" cy="660.7" r="3.5" fill="url(#sf)" opacity="0.38"/><circle cx="644.0" cy="428.1" r="3.8" fill="url(#sf)" opacity="0.54"/><circle cx="592.5" cy="221.2" r="2.5" fill="url(#sf)" opacity="0.65"/><circle cx="638.9" cy="480.4" r="2.8" fill="url(#sf)" opacity="0.59"/><circle cx="765.4" cy="281.1" r="3.9" fill="url(#sf)" opacity="0.52"/><circle cx="965.1" cy="603.8" r="4.0" fill="url(#sf)" opacity="0.26"/><circle cx="740.5" cy="284.4" r="3.2" fill="url(#sf)" opacity="0.69"/><circle cx="1036.9" cy="228.2" r="2.6" fill="url(#sf)" opacity="0.66"/><circle cx="958.6" cy="401.8" r="3.2" fill="url(#sf)" opacity="0.33"/><circle cx="1065.8" cy="402.2" r="3.9" fill="url(#sf)" opacity="0.56"/><circle cx="568.1" cy="371.0" r="2.7" fill="url(#sf)" opacity="0.70"/><circle cx="900.2" cy="232.2" r="2.6" fill="url(#sf)" opacity="0.43"/><circle cx="821.6" cy="491.4" r="3.0" fill="url(#sf)" opacity="0.43"/><circle cx="522.9" cy="492.5" r="2.9" fill="url(#sf)" opacity="0.26"/><circle cx="816.2" cy="690.4" r="2.4" fill="url(#sf)" opacity="0.32"/><circle cx="953.1" cy="343.5" r="2.8" fill="url(#sf)" opacity="0.50"/><circle cx="688.6" cy="487.5" r="3.3" fill="url(#sf)" opacity="0.73"/><circle cx="1160.9" cy="227.6" r="3.3" fill="url(#sf)" opacity="0.64"/><circle cx="1083.4" cy="587.3" r="3.4" fill="url(#sf)" opacity="0.57"/><circle cx="753.8" cy="347.8" r="3.7" fill="url(#sf)" opacity="0.69"/><circle cx="1126.3" cy="542.1" r="2.8" fill="url(#sf)" opacity="0.63"/><circle cx="997.5" cy="458.3" r="3.4" fill="url(#sf)" opacity="0.43"/><circle cx="875.3" cy="408.3" r="2.4" fill="url(#sf)" opacity="0.42"/><circle cx="728.1" cy="691.4" r="3.2" fill="url(#sf)" opacity="0.43"/><circle cx="676.5" cy="325.1" r="2.9" fill="url(#sf)" opacity="0.32"/><circle cx="523.7" cy="634.3" r="3.1" fill="url(#sf)" opacity="0.47"/><circle cx="887.0" cy="358.0" r="2.6" fill="url(#sf)" opacity="0.28"/><circle cx="714.1" cy="360.9" r="3.6" fill="url(#sf)" opacity="0.53"/><circle cx="1125.5" cy="376.5" r="4.0" fill="url(#sf)" opacity="0.54"/><circle cx="570.8" cy="297.9" r="3.3" fill="url(#sf)" opacity="0.74"/><circle cx="750.0" cy="587.4" r="3.1" fill="url(#sf)" opacity="0.68"/><circle cx="562.8" cy="446.5" r="3.9" fill="url(#sf)" opacity="0.39"/><circle cx="685.6" cy="222.2" r="2.6" fill="url(#sf)" opacity="0.38"/><circle cx="974.7" cy="317.1" r="3.0" fill="url(#sf)" opacity="0.35"/><circle cx="909.1" cy="630.9" r="3.5" fill="url(#sf)" opacity="0.35"/><circle cx="993.8" cy="679.1" r="3.4" fill="url(#sf)" opacity="0.29"/><circle cx="1042.7" cy="636.5" r="2.9" fill="url(#sf)" opacity="0.32"/><circle cx="640.8" cy="472.0" r="3.9" fill="url(#sf)" opacity="0.57"/><circle cx="1116.1" cy="314.1" r="2.9" fill="url(#sf)" opacity="0.62"/><circle cx="938.9" cy="408.0" r="3.5" fill="url(#sf)" opacity="0.42"/><circle cx="556.2" cy="412.3" r="2.4" fill="url(#sf)" opacity="0.56"/><circle cx="735.4" cy="451.3" r="3.4" fill="url(#sf)" opacity="0.38"/><circle cx="818.8" cy="217.6" r="4.0" fill="url(#sf)" opacity="0.53"/><circle cx="1157.9" cy="238.2" r="3.4" fill="url(#sf)" opacity="0.61"/><circle cx="732.0" cy="256.4" r="2.6" fill="url(#sf)" opacity="0.32"/><circle cx="1015.4" cy="254.7" r="3.8" fill="url(#sf)" opacity="0.46"/><circle cx="867.5" cy="497.0" r="3.3" fill="url(#sf)" opacity="0.58"/><circle cx="908.2" cy="371.8" r="3.6" fill="url(#sf)" opacity="0.38"/><circle cx="979.3" cy="582.0" r="3.7" fill="url(#sf)" opacity="0.40"/><circle cx="1018.9" cy="686.0" r="3.1" fill="url(#sf)" opacity="0.39"/><circle cx="857.6" cy="668.3" r="2.5" fill="url(#sf)" opacity="0.25"/><circle cx="826.8" cy="529.5" r="3.7" fill="url(#sf)" opacity="0.43"/><circle cx="1159.2" cy="321.9" r="3.7" fill="url(#sf)" opacity="0.29"/><circle cx="537.1" cy="276.2" r="2.4" fill="url(#sf)" opacity="0.50"/><circle cx="878.2" cy="299.4" r="4.0" fill="url(#sf)" opacity="0.43"/><circle cx="615.6" cy="297.2" r="3.6" fill="url(#sf)" opacity="0.71"/><circle cx="623.9" cy="225.1" r="3.7" fill="url(#sf)" opacity="0.37"/><circle cx="1154.6" cy="453.5" r="3.4" fill="url(#sf)" opacity="0.42"/><circle cx="1036.9" cy="434.6" r="2.9" fill="url(#sf)" opacity="0.70"/><circle cx="588.7" cy="567.4" r="2.4" fill="url(#sf)" opacity="0.57"/><circle cx="779.0" cy="630.9" r="2.4" fill="url(#sf)" opacity="0.53"/><circle cx="784.2" cy="657.7" r="4.0" fill="url(#sf)" opacity="0.56"/><circle cx="664.0" cy="333.4" r="2.8" fill="url(#sf)" opacity="0.47"/><circle cx="668.7" cy="309.8" r="3.7" fill="url(#sf)" opacity="0.57"/><circle cx="712.1" cy="694.2" r="2.7" fill="url(#sf)" opacity="0.53"/><circle cx="620.4" cy="630.5" r="3.9" fill="url(#sf)" opacity="0.38"/><circle cx="1005.2" cy="610.9" r="2.8" fill="url(#sf)" opacity="0.42"/><circle cx="833.2" cy="644.0" r="2.6" fill="url(#sf)" opacity="0.59"/><circle cx="905.6" cy="431.2" r="3.3" fill="url(#sf)" opacity="0.69"/><circle cx="654.8" cy="640.4" r="2.9" fill="url(#sf)" opacity="0.64"/><circle cx="1077.6" cy="299.6" r="3.9" fill="url(#sf)" opacity="0.75"/><circle cx="711.5" cy="222.9" r="2.5" fill="url(#sf)" opacity="0.74"/><circle cx="525.1" cy="654.0" r="2.6" fill="url(#sf)" opacity="0.62"/><circle cx="582.1" cy="293.0" r="3.5" fill="url(#sf)" opacity="0.30"/><circle cx="738.7" cy="657.4" r="3.6" fill="url(#sf)" opacity="0.69"/><circle cx="1152.8" cy="227.0" r="2.7" fill="url(#sf)" opacity="0.65"/><circle cx="965.1" cy="229.4" r="3.2" fill="url(#sf)" opacity="0.37"/><circle cx="797.5" cy="262.0" r="2.3" fill="url(#sf)" opacity="0.75"/><circle cx="723.8" cy="638.0" r="2.5" fill="url(#sf)" opacity="0.49"/><circle cx="606.9" cy="419.2" r="2.6" fill="url(#sf)" opacity="0.59"/><circle cx="614.7" cy="569.8" r="3.2" fill="url(#sf)" opacity="0.31"/><circle cx="747.8" cy="452.2" r="4.0" fill="url(#sf)" opacity="0.42"/><circle cx="658.2" cy="681.2" r="3.9" fill="url(#sf)" opacity="0.62"/><circle cx="695.6" cy="297.1" r="2.8" fill="url(#sf)" opacity="0.28"/><circle cx="546.9" cy="458.3" r="3.0" fill="url(#sf)" opacity="0.53"/><circle cx="753.6" cy="216.1" r="3.5" fill="url(#sf)" opacity="0.58"/><circle cx="870.9" cy="477.7" r="3.5" fill="url(#sf)" opacity="0.74"/><circle cx="1084.5" cy="559.8" r="3.0" fill="url(#sf)" opacity="0.41"/><circle cx="790.2" cy="683.8" r="3.0" fill="url(#sf)" opacity="0.44"/><circle cx="784.3" cy="280.5" r="4.1" fill="url(#sf)" opacity="0.25"/><circle cx="912.3" cy="661.2" r="2.8" fill="url(#sf)" opacity="0.56"/><circle cx="762.9" cy="328.0" r="2.7" fill="url(#sf)" opacity="0.31"/><circle cx="1064.5" cy="592.0" r="3.9" fill="url(#sf)" opacity="0.27"/><circle cx="968.1" cy="368.6" r="3.5" fill="url(#sf)" opacity="0.52"/><circle cx="723.2" cy="683.2" r="2.3" fill="url(#sf)" opacity="0.62"/><circle cx="1071.2" cy="458.9" r="3.4" fill="url(#sf)" opacity="0.75"/><circle cx="670.7" cy="516.9" r="3.6" fill="url(#sf)" opacity="0.44"/><circle cx="979.8" cy="402.3" r="3.2" fill="url(#sf)" opacity="0.56"/><circle cx="957.2" cy="367.6" r="3.4" fill="url(#sf)" opacity="0.52"/><circle cx="663.5" cy="508.7" r="2.8" fill="url(#sf)" opacity="0.70"/><circle cx="825.2" cy="561.7" r="3.2" fill="url(#sf)" opacity="0.49"/><circle cx="662.1" cy="280.1" r="4.0" fill="url(#sf)" opacity="0.51"/><circle cx="858.0" cy="467.4" r="3.8" fill="url(#sf)" opacity="0.37"/><circle cx="630.5" cy="610.4" r="3.1" fill="url(#sf)" opacity="0.57"/><circle cx="1054.4" cy="645.5" r="3.9" fill="url(#sf)" opacity="0.27"/><circle cx="765.7" cy="615.4" r="3.8" fill="url(#sf)" opacity="0.31"/><circle cx="618.5" cy="333.2" r="2.5" fill="url(#sf)" opacity="0.43"/><circle cx="1038.7" cy="464.4" r="3.1" fill="url(#sf)" opacity="0.29"/><circle cx="774.9" cy="695.5" r="3.6" fill="url(#sf)" opacity="0.47"/><circle cx="828.5" cy="599.0" r="3.7" fill="url(#sf)" opacity="0.32"/><circle cx="959.1" cy="389.3" r="3.2" fill="url(#sf)" opacity="0.37"/><circle cx="758.9" cy="376.3" r="3.0" fill="url(#sf)" opacity="0.26"/><circle cx="649.0" cy="488.3" r="2.4" fill="url(#sf)" opacity="0.34"/><circle cx="983.7" cy="344.5" r="2.9" fill="url(#sf)" opacity="0.37"/><circle cx="1058.7" cy="255.4" r="3.4" fill="url(#sf)" opacity="0.68"/><circle cx="649.5" cy="416.6" r="3.7" fill="url(#sf)" opacity="0.56"/><circle cx="759.4" cy="232.3" r="3.1" fill="url(#sf)" opacity="0.43"/><circle cx="980.0" cy="354.5" r="3.0" fill="url(#sf)" opacity="0.57"/><circle cx="1043.6" cy="382.2" r="3.0" fill="url(#sf)" opacity="0.54"/><circle cx="1117.4" cy="304.1" r="4.0" fill="url(#sf)" opacity="0.61"/><circle cx="759.9" cy="534.5" r="2.9" fill="url(#sf)" opacity="0.29"/><circle cx="1008.2" cy="395.4" r="3.2" fill="url(#sf)" opacity="0.50"/><circle cx="1102.1" cy="578.9" r="2.3" fill="url(#sf)" opacity="0.55"/><circle cx="818.3" cy="435.6" r="3.8" fill="url(#sf)" opacity="0.46"/><circle cx="825.4" cy="643.7" r="3.1" fill="url(#sf)" opacity="0.50"/><circle cx="850.1" cy="611.8" r="3.5" fill="url(#sf)" opacity="0.62"/><circle cx="778.9" cy="230.7" r="3.5" fill="url(#sf)" opacity="0.53"/><circle cx="1016.7" cy="585.2" r="2.5" fill="url(#sf)" opacity="0.36"/><circle cx="568.9" cy="608.3" r="2.5" fill="url(#sf)" opacity="0.29"/><circle cx="1006.4" cy="485.3" r="2.4" fill="url(#sf)" opacity="0.59"/><circle cx="979.1" cy="445.6" r="2.4" fill="url(#sf)" opacity="0.60"/><circle cx="789.4" cy="494.8" r="4.1" fill="url(#sf)" opacity="0.66"/><circle cx="1083.1" cy="281.7" r="2.9" fill="url(#sf)" opacity="0.51"/><circle cx="522.9" cy="691.5" r="2.8" fill="url(#sf)" opacity="0.38"/><circle cx="721.5" cy="334.9" r="3.8" fill="url(#sf)" opacity="0.53"/><circle cx="849.6" cy="415.2" r="2.4" fill="url(#sf)" opacity="0.40"/><circle cx="1079.8" cy="600.8" r="3.8" fill="url(#sf)" opacity="0.38"/><circle cx="649.7" cy="236.3" r="3.3" fill="url(#sf)" opacity="0.44"/><circle cx="819.4" cy="448.6" r="3.4" fill="url(#sf)" opacity="0.43"/><circle cx="1037.5" cy="308.3" r="4.0" fill="url(#sf)" opacity="0.53"/><circle cx="552.1" cy="363.7" r="3.3" fill="url(#sf)" opacity="0.45"/><circle cx="884.5" cy="368.2" r="2.8" fill="url(#sf)" opacity="0.65"/><circle cx="707.6" cy="556.3" r="3.7" fill="url(#sf)" opacity="0.55"/><circle cx="813.1" cy="665.3" r="3.1" fill="url(#sf)" opacity="0.69"/><circle cx="556.3" cy="421.8" r="3.5" fill="url(#sf)" opacity="0.27"/><circle cx="1077.1" cy="246.0" r="3.4" fill="url(#sf)" opacity="0.34"/><circle cx="1115.8" cy="483.7" r="3.7" fill="url(#sf)" opacity="0.50"/><circle cx="955.0" cy="539.0" r="2.8" fill="url(#sf)" opacity="0.36"/><circle cx="1061.4" cy="281.8" r="4.0" fill="url(#sf)" opacity="0.35"/><circle cx="584.3" cy="257.3" r="3.7" fill="url(#sf)" opacity="0.73"/><circle cx="787.3" cy="531.2" r="2.8" fill="url(#sf)" opacity="0.70"/><circle cx="962.8" cy="286.3" r="2.4" fill="url(#sf)" opacity="0.60"/><circle cx="546.0" cy="617.4" r="2.8" fill="url(#sf)" opacity="0.37"/><circle cx="895.6" cy="365.9" r="3.3" fill="url(#sf)" opacity="0.33"/><circle cx="1109.0" cy="368.7" r="3.8" fill="url(#sf)" opacity="0.33"/><circle cx="1036.2" cy="687.3" r="3.0" fill="url(#sf)" opacity="0.27"/><circle cx="764.8" cy="522.4" r="2.7" fill="url(#sf)" opacity="0.52"/><circle cx="579.6" cy="436.7" r="3.6" fill="url(#sf)" opacity="0.46"/><circle cx="958.3" cy="266.6" r="3.8" fill="url(#sf)" opacity="0.31"/><circle cx="1116.4" cy="695.1" r="4.0" fill="url(#sf)" opacity="0.51"/><circle cx="707.1" cy="380.1" r="3.7" fill="url(#sf)" opacity="0.50"/><circle cx="1120.6" cy="256.2" r="3.2" fill="url(#sf)" opacity="0.68"/><circle cx="905.8" cy="473.8" r="2.5" fill="url(#sf)" opacity="0.32"/><circle cx="694.4" cy="645.0" r="3.8" fill="url(#sf)" opacity="0.36"/><circle cx="1117.2" cy="226.7" r="3.4" fill="url(#sf)" opacity="0.73"/><circle cx="741.8" cy="670.0" r="3.5" fill="url(#sf)" opacity="0.28"/><circle cx="734.5" cy="429.5" r="2.7" fill="url(#sf)" opacity="0.62"/><circle cx="634.7" cy="593.8" r="2.8" fill="url(#sf)" opacity="0.28"/><circle cx="880.8" cy="257.5" r="3.3" fill="url(#sf)" opacity="0.64"/><circle cx="904.4" cy="435.2" r="2.4" fill="url(#sf)" opacity="0.51"/><circle cx="581.9" cy="525.4" r="2.5" fill="url(#sf)" opacity="0.54"/><circle cx="747.3" cy="393.1" r="3.5" fill="url(#sf)" opacity="0.33"/><circle cx="628.8" cy="668.6" r="2.9" fill="url(#sf)" opacity="0.67"/><circle cx="1084.1" cy="444.4" r="2.6" fill="url(#sf)" opacity="0.30"/><circle cx="1087.8" cy="267.9" r="3.2" fill="url(#sf)" opacity="0.52"/><circle cx="595.1" cy="438.4" r="2.6" fill="url(#sf)" opacity="0.52"/><circle cx="846.9" cy="389.3" r="2.7" fill="url(#sf)" opacity="0.45"/><circle cx="650.6" cy="272.8" r="2.7" fill="url(#sf)" opacity="0.69"/><circle cx="843.7" cy="643.8" r="2.3" fill="url(#sf)" opacity="0.72"/><circle cx="835.0" cy="595.4" r="3.3" fill="url(#sf)" opacity="0.59"/><circle cx="667.3" cy="575.5" r="2.6" fill="url(#sf)" opacity="0.38"/><circle cx="539.0" cy="402.1" r="3.2" fill="url(#sf)" opacity="0.40"/><circle cx="1095.2" cy="252.0" r="3.3" fill="url(#sf)" opacity="0.37"/><circle cx="904.2" cy="592.0" r="3.6" fill="url(#sf)" opacity="0.28"/><circle cx="678.0" cy="502.2" r="4.1" fill="url(#sf)" opacity="0.27"/><circle cx="919.0" cy="547.2" r="3.8" fill="url(#sf)" opacity="0.42"/><circle cx="1043.4" cy="435.4" r="4.0" fill="url(#sf)" opacity="0.26"/><circle cx="1127.4" cy="411.2" r="3.0" fill="url(#sf)" opacity="0.29"/><circle cx="677.4" cy="567.6" r="3.5" fill="url(#sf)" opacity="0.33"/><circle cx="741.8" cy="279.2" r="2.7" fill="url(#sf)" opacity="0.36"/><circle cx="733.2" cy="685.3" r="4.1" fill="url(#sf)" opacity="0.65"/><circle cx="829.4" cy="452.7" r="3.7" fill="url(#sf)" opacity="0.70"/><circle cx="1005.2" cy="520.3" r="2.7" fill="url(#sf)" opacity="0.56"/><circle cx="1066.2" cy="593.3" r="2.5" fill="url(#sf)" opacity="0.61"/><circle cx="744.9" cy="289.8" r="4.0" fill="url(#sf)" opacity="0.59"/><circle cx="1001.4" cy="276.6" r="3.8" fill="url(#sf)" opacity="0.72"/><circle cx="1104.4" cy="573.1" r="3.8" fill="url(#sf)" opacity="0.65"/><circle cx="901.0" cy="422.6" r="3.8" fill="url(#sf)" opacity="0.64"/><circle cx="1082.4" cy="356.3" r="4.0" fill="url(#sf)" opacity="0.52"/><circle cx="1131.0" cy="267.3" r="4.0" fill="url(#sf)" opacity="0.64"/><circle cx="682.0" cy="618.4" r="2.7" fill="url(#sf)" opacity="0.35"/><circle cx="815.3" cy="326.0" r="3.2" fill="url(#sf)" opacity="0.70"/><circle cx="962.4" cy="556.3" r="3.0" fill="url(#sf)" opacity="0.64"/><circle cx="1032.5" cy="542.9" r="4.0" fill="url(#sf)" opacity="0.66"/><circle cx="781.8" cy="253.3" r="3.5" fill="url(#sf)" opacity="0.67"/><circle cx="738.7" cy="500.1" r="3.8" fill="url(#sf)" opacity="0.65"/><circle cx="521.9" cy="448.7" r="2.3" fill="url(#sf)" opacity="0.31"/><circle cx="1044.6" cy="414.5" r="3.4" fill="url(#sf)" opacity="0.48"/><circle cx="736.0" cy="314.8" r="2.9" fill="url(#sf)" opacity="0.67"/><circle cx="919.7" cy="353.0" r="2.5" fill="url(#sf)" opacity="0.39"/><circle cx="972.7" cy="425.8" r="3.5" fill="url(#sf)" opacity="0.65"/><circle cx="597.1" cy="542.9" r="2.4" fill="url(#sf)" opacity="0.66"/><circle cx="638.1" cy="342.9" r="4.0" fill="url(#sf)" opacity="0.43"/><circle cx="664.1" cy="643.5" r="3.4" fill="url(#sf)" opacity="0.70"/><circle cx="774.1" cy="453.8" r="4.0" fill="url(#sf)" opacity="0.50"/><circle cx="1158.6" cy="303.1" r="3.8" fill="url(#sf)" opacity="0.33"/><circle cx="860.1" cy="211.2" r="2.6" fill="url(#sf)" opacity="0.72"/><circle cx="813.1" cy="604.4" r="2.8" fill="url(#sf)" opacity="0.43"/><circle cx="584.3" cy="479.6" r="3.9" fill="url(#sf)" opacity="0.51"/><circle cx="762.7" cy="662.3" r="3.9" fill="url(#sf)" opacity="0.58"/><circle cx="568.1" cy="514.3" r="3.1" fill="url(#sf)" opacity="0.73"/><circle cx="753.1" cy="532.3" r="3.4" fill="url(#sf)" opacity="0.44"/><circle cx="856.9" cy="539.8" r="3.9" fill="url(#sf)" opacity="0.50"/><circle cx="754.3" cy="685.4" r="2.4" fill="url(#sf)" opacity="0.67"/><circle cx="961.2" cy="481.9" r="3.1" fill="url(#sf)" opacity="0.63"/><circle cx="1095.5" cy="565.2" r="3.6" fill="url(#sf)" opacity="0.27"/><circle cx="729.4" cy="277.6" r="4.0" fill="url(#sf)" opacity="0.70"/><circle cx="612.5" cy="496.5" r="3.3" fill="url(#sf)" opacity="0.27"/><circle cx="772.8" cy="574.2" r="3.5" fill="url(#sf)" opacity="0.39"/><circle cx="1012.3" cy="352.5" r="3.3" fill="url(#sf)" opacity="0.46"/><circle cx="1151.9" cy="526.3" r="3.7" fill="url(#sf)" opacity="0.59"/><circle cx="765.2" cy="679.0" r="3.6" fill="url(#sf)" opacity="0.60"/><circle cx="698.5" cy="289.7" r="3.3" fill="url(#sf)" opacity="0.66"/><circle cx="1032.5" cy="379.8" r="2.6" fill="url(#sf)" opacity="0.51"/><circle cx="1086.7" cy="289.8" r="3.6" fill="url(#sf)" opacity="0.34"/><circle cx="720.8" cy="237.0" r="2.8" fill="url(#sf)" opacity="0.44"/><circle cx="1144.6" cy="678.6" r="2.6" fill="url(#sf)" opacity="0.40"/><circle cx="1129.6" cy="306.9" r="2.9" fill="url(#sf)" opacity="0.47"/><circle cx="589.2" cy="337.5" r="3.0" fill="url(#sf)" opacity="0.44"/><circle cx="1142.4" cy="340.7" r="2.7" fill="url(#sf)" opacity="0.70"/><circle cx="810.3" cy="617.8" r="3.4" fill="url(#sf)" opacity="0.64"/><circle cx="722.6" cy="284.9" r="3.7" fill="url(#sf)" opacity="0.49"/><circle cx="880.5" cy="536.9" r="3.7" fill="url(#sf)" opacity="0.39"/><circle cx="753.7" cy="656.9" r="3.3" fill="url(#sf)" opacity="0.39"/><circle cx="926.7" cy="337.2" r="3.7" fill="url(#sf)" opacity="0.27"/><circle cx="1053.8" cy="486.3" r="2.9" fill="url(#sf)" opacity="0.72"/><circle cx="690.8" cy="329.3" r="2.4" fill="url(#sf)" opacity="0.52"/><circle cx="1006.7" cy="540.5" r="3.0" fill="url(#sf)" opacity="0.65"/><circle cx="591.0" cy="360.2" r="3.5" fill="url(#sf)" opacity="0.73"/><circle cx="929.1" cy="547.3" r="3.7" fill="url(#sf)" opacity="0.45"/><circle cx="1127.4" cy="571.8" r="2.9" fill="url(#sf)" opacity="0.45"/><circle cx="1040.3" cy="381.0" r="2.6" fill="url(#sf)" opacity="0.69"/><circle cx="863.1" cy="464.3" r="3.5" fill="url(#sf)" opacity="0.70"/><circle cx="605.4" cy="375.6" r="2.4" fill="url(#sf)" opacity="0.46"/><circle cx="843.9" cy="625.0" r="3.5" fill="url(#sf)" opacity="0.54"/><circle cx="780.2" cy="489.8" r="2.8" fill="url(#sf)" opacity="0.67"/><circle cx="1029.1" cy="618.5" r="2.6" fill="url(#sf)" opacity="0.59"/><circle cx="1006.9" cy="454.3" r="3.9" fill="url(#sf)" opacity="0.70"/><circle cx="999.7" cy="610.0" r="3.5" fill="url(#sf)" opacity="0.69"/><circle cx="603.9" cy="553.2" r="3.6" fill="url(#sf)" opacity="0.56"/><circle cx="697.0" cy="243.7" r="3.4" fill="url(#sf)" opacity="0.66"/><circle cx="695.6" cy="314.6" r="2.7" fill="url(#sf)" opacity="0.30"/><circle cx="956.4" cy="684.8" r="3.7" fill="url(#sf)" opacity="0.43"/><circle cx="971.5" cy="246.1" r="3.8" fill="url(#sf)" opacity="0.41"/><circle cx="521.2" cy="516.8" r="2.5" fill="url(#sf)" opacity="0.39"/><circle cx="557.2" cy="427.6" r="3.3" fill="url(#sf)" opacity="0.65"/><circle cx="544.6" cy="613.1" r="2.5" fill="url(#sf)" opacity="0.36"/><circle cx="926.3" cy="376.3" r="2.9" fill="url(#sf)" opacity="0.53"/><circle cx="660.0" cy="596.6" r="2.7" fill="url(#sf)" opacity="0.67"/><circle cx="1042.2" cy="472.0" r="2.4" fill="url(#sf)" opacity="0.64"/><circle cx="537.4" cy="456.3" r="3.1" fill="url(#sf)" opacity="0.28"/><circle cx="926.6" cy="563.1" r="3.4" fill="url(#sf)" opacity="0.45"/><circle cx="850.3" cy="497.1" r="2.7" fill="url(#sf)" opacity="0.68"/><circle cx="1163.2" cy="601.8" r="4.0" fill="url(#sf)" opacity="0.41"/><circle cx="1157.1" cy="245.7" r="3.2" fill="url(#sf)" opacity="0.32"/><circle cx="812.7" cy="542.8" r="3.6" fill="url(#sf)" opacity="0.48"/><circle cx="740.1" cy="303.3" r="3.0" fill="url(#sf)" opacity="0.39"/><circle cx="644.7" cy="568.7" r="3.2" fill="url(#sf)" opacity="0.47"/><circle cx="646.9" cy="553.0" r="2.7" fill="url(#sf)" opacity="0.38"/><circle cx="881.5" cy="551.8" r="4.1" fill="url(#sf)" opacity="0.62"/><circle cx="1132.6" cy="658.1" r="3.6" fill="url(#sf)" opacity="0.61"/><circle cx="559.6" cy="310.9" r="2.3" fill="url(#sf)" opacity="0.68"/><circle cx="986.1" cy="517.3" r="2.8" fill="url(#sf)" opacity="0.43"/><circle cx="624.9" cy="518.3" r="4.1" fill="url(#sf)" opacity="0.40"/><circle cx="547.6" cy="296.1" r="2.9" fill="url(#sf)" opacity="0.70"/><circle cx="1039.5" cy="432.2" r="2.5" fill="url(#sf)" opacity="0.30"/><circle cx="618.6" cy="588.9" r="3.1" fill="url(#sf)" opacity="0.75"/><circle cx="1108.9" cy="597.2" r="3.2" fill="url(#sf)" opacity="0.66"/><circle cx="602.0" cy="263.9" r="3.3" fill="url(#sf)" opacity="0.50"/><circle cx="654.4" cy="333.4" r="2.3" fill="url(#sf)" opacity="0.70"/><circle cx="978.5" cy="670.4" r="4.1" fill="url(#sf)" opacity="0.47"/><circle cx="992.9" cy="397.7" r="3.8" fill="url(#sf)" opacity="0.67"/><circle cx="605.6" cy="217.3" r="2.7" fill="url(#sf)" opacity="0.54"/><circle cx="764.2" cy="215.4" r="3.8" fill="url(#sf)" opacity="0.64"/><circle cx="819.0" cy="232.0" r="3.9" fill="url(#sf)" opacity="0.52"/><circle cx="564.9" cy="368.2" r="3.4" fill="url(#sf)" opacity="0.69"/><circle cx="832.5" cy="521.8" r="2.7" fill="url(#sf)" opacity="0.37"/><circle cx="1105.0" cy="396.9" r="2.5" fill="url(#sf)" opacity="0.55"/><circle cx="600.7" cy="308.2" r="3.1" fill="url(#sf)" opacity="0.54"/><circle cx="930.7" cy="554.6" r="3.1" fill="url(#sf)" opacity="0.28"/><circle cx="987.7" cy="237.1" r="3.1" fill="url(#sf)" opacity="0.45"/><circle cx="954.4" cy="557.9" r="2.7" fill="url(#sf)" opacity="0.57"/><circle cx="966.7" cy="440.3" r="2.6" fill="url(#sf)" opacity="0.70"/><circle cx="906.6" cy="241.5" r="2.7" fill="url(#sf)" opacity="0.74"/><circle cx="667.0" cy="401.7" r="3.7" fill="url(#sf)" opacity="0.66"/><circle cx="929.1" cy="571.4" r="2.4" fill="url(#sf)" opacity="0.30"/><circle cx="1150.6" cy="601.1" r="2.4" fill="url(#sf)" opacity="0.27"/><circle cx="674.6" cy="663.3" r="2.7" fill="url(#sf)" opacity="0.59"/><circle cx="1120.9" cy="521.4" r="4.0" fill="url(#sf)" opacity="0.38"/><circle cx="618.3" cy="219.9" r="3.7" fill="url(#sf)" opacity="0.30"/><circle cx="1148.6" cy="556.1" r="2.6" fill="url(#sf)" opacity="0.65"/><circle cx="624.3" cy="459.9" r="2.5" fill="url(#sf)" opacity="0.64"/><circle cx="1094.6" cy="656.3" r="2.3" fill="url(#sf)" opacity="0.68"/><circle cx="878.7" cy="610.2" r="3.2" fill="url(#sf)" opacity="0.56"/><circle cx="903.7" cy="599.6" r="2.4" fill="url(#sf)" opacity="0.28"/><circle cx="871.9" cy="352.4" r="3.0" fill="url(#sf)" opacity="0.25"/><circle cx="1001.0" cy="222.7" r="3.8" fill="url(#sf)" opacity="0.66"/><circle cx="815.3" cy="270.4" r="3.5" fill="url(#sf)" opacity="0.35"/><circle cx="796.6" cy="264.7" r="4.1" fill="url(#sf)" opacity="0.52"/><circle cx="747.1" cy="256.7" r="3.6" fill="url(#sf)" opacity="0.67"/><circle cx="1067.9" cy="260.3" r="3.0" fill="url(#sf)" opacity="0.40"/><circle cx="1012.3" cy="282.8" r="3.4" fill="url(#sf)" opacity="0.74"/><circle cx="1016.4" cy="214.4" r="2.4" fill="url(#sf)" opacity="0.31"/><circle cx="967.0" cy="502.0" r="3.2" fill="url(#sf)" opacity="0.48"/><circle cx="782.6" cy="508.0" r="3.5" fill="url(#sf)" opacity="0.71"/><circle cx="993.0" cy="598.1" r="3.9" fill="url(#sf)" opacity="0.67"/><circle cx="982.7" cy="225.9" r="3.5" fill="url(#sf)" opacity="0.67"/><circle cx="797.7" cy="637.8" r="2.6" fill="url(#sf)" opacity="0.72"/><circle cx="804.8" cy="554.4" r="2.8" fill="url(#sf)" opacity="0.40"/><circle cx="744.5" cy="368.7" r="2.5" fill="url(#sf)" opacity="0.47"/><circle cx="1153.6" cy="528.9" r="4.0" fill="url(#sf)" opacity="0.63"/><circle cx="1060.4" cy="694.2" r="3.7" fill="url(#sf)" opacity="0.39"/><circle cx="680.6" cy="411.4" r="2.3" fill="url(#sf)" opacity="0.37"/><circle cx="1092.4" cy="658.6" r="2.9" fill="url(#sf)" opacity="0.64"/><circle cx="1020.4" cy="643.5" r="3.7" fill="url(#sf)" opacity="0.52"/><circle cx="586.8" cy="612.2" r="2.9" fill="url(#sf)" opacity="0.56"/><circle cx="756.5" cy="472.1" r="4.0" fill="url(#sf)" opacity="0.33"/><circle cx="862.5" cy="526.9" r="3.3" fill="url(#sf)" opacity="0.72"/><circle cx="782.7" cy="655.1" r="3.5" fill="url(#sf)" opacity="0.73"/><circle cx="577.0" cy="314.2" r="2.8" fill="url(#sf)" opacity="0.70"/><circle cx="527.8" cy="337.5" r="3.6" fill="url(#sf)" opacity="0.74"/><circle cx="633.1" cy="423.9" r="3.5" fill="url(#sf)" opacity="0.60"/><circle cx="1001.7" cy="577.0" r="2.7" fill="url(#sf)" opacity="0.38"/><circle cx="536.9" cy="546.9" r="2.7" fill="url(#sf)" opacity="0.38"/><circle cx="1142.9" cy="523.6" r="3.4" fill="url(#sf)" opacity="0.58"/><circle cx="905.8" cy="548.7" r="2.8" fill="url(#sf)" opacity="0.28"/><circle cx="562.3" cy="218.1" r="3.0" fill="url(#sf)" opacity="0.32"/><circle cx="592.0" cy="450.9" r="4.0" fill="url(#sf)" opacity="0.59"/><circle cx="695.9" cy="584.9" r="2.6" fill="url(#sf)" opacity="0.30"/><circle cx="715.1" cy="409.7" r="3.5" fill="url(#sf)" opacity="0.47"/><circle cx="990.2" cy="257.1" r="4.0" fill="url(#sf)" opacity="0.42"/><circle cx="1057.5" cy="225.9" r="3.8" fill="url(#sf)" opacity="0.36"/><circle cx="1072.2" cy="601.2" r="3.5" fill="url(#sf)" opacity="0.39"/><circle cx="525.3" cy="303.3" r="3.9" fill="url(#sf)" opacity="0.33"/><circle cx="945.5" cy="496.3" r="3.5" fill="url(#sf)" opacity="0.34"/><circle cx="611.9" cy="258.2" r="4.1" fill="url(#sf)" opacity="0.44"/><circle cx="941.0" cy="487.8" r="2.7" fill="url(#sf)" opacity="0.28"/><circle cx="528.6" cy="625.3" r="2.5" fill="url(#sf)" opacity="0.73"/><circle cx="754.3" cy="562.2" r="2.5" fill="url(#sf)" opacity="0.64"/><circle cx="681.8" cy="389.0" r="3.2" fill="url(#sf)" opacity="0.31"/><circle cx="679.6" cy="597.8" r="2.8" fill="url(#sf)" opacity="0.44"/><circle cx="1013.8" cy="319.9" r="2.6" fill="url(#sf)" opacity="0.36"/><circle cx="767.6" cy="388.6" r="3.5" fill="url(#sf)" opacity="0.49"/><circle cx="1081.7" cy="235.6" r="3.5" fill="url(#sf)" opacity="0.67"/><circle cx="670.9" cy="225.3" r="3.1" fill="url(#sf)" opacity="0.31"/><circle cx="816.6" cy="556.8" r="2.5" fill="url(#sf)" opacity="0.31"/><circle cx="829.2" cy="295.5" r="2.7" fill="url(#sf)" opacity="0.47"/><circle cx="595.5" cy="244.0" r="3.0" fill="url(#sf)" opacity="0.48"/><circle cx="1125.0" cy="480.6" r="2.4" fill="url(#sf)" opacity="0.36"/><circle cx="1000.5" cy="484.6" r="3.9" fill="url(#sf)" opacity="0.73"/><circle cx="1074.1" cy="264.5" r="4.0" fill="url(#sf)" opacity="0.51"/><circle cx="674.1" cy="293.9" r="3.9" fill="url(#sf)" opacity="0.36"/><circle cx="572.8" cy="339.9" r="4.0" fill="url(#sf)" opacity="0.48"/><circle cx="992.2" cy="247.2" r="3.1" fill="url(#sf)" opacity="0.41"/><circle cx="651.9" cy="533.2" r="3.0" fill="url(#sf)" opacity="0.31"/><circle cx="1155.8" cy="445.0" r="2.6" fill="url(#sf)" opacity="0.26"/><circle cx="941.5" cy="461.1" r="2.3" fill="url(#sf)" opacity="0.49"/><circle cx="998.1" cy="472.0" r="2.7" fill="url(#sf)" opacity="0.50"/><circle cx="910.4" cy="527.5" r="2.6" fill="url(#sf)" opacity="0.65"/><circle cx="1130.8" cy="570.8" r="3.8" fill="url(#sf)" opacity="0.43"/><circle cx="1103.1" cy="299.3" r="2.7" fill="url(#sf)" opacity="0.55"/><circle cx="1102.3" cy="250.8" r="2.7" fill="url(#sf)" opacity="0.27"/><circle cx="803.0" cy="279.3" r="2.6" fill="url(#sf)" opacity="0.62"/><circle cx="896.4" cy="667.6" r="3.0" fill="url(#sf)" opacity="0.59"/><circle cx="527.2" cy="671.9" r="2.7" fill="url(#sf)" opacity="0.49"/><circle cx="850.0" cy="671.9" r="3.2" fill="url(#sf)" opacity="0.75"/><circle cx="920.9" cy="316.2" r="3.8" fill="url(#sf)" opacity="0.35"/><circle cx="1165.7" cy="432.9" r="2.7" fill="url(#sf)" opacity="0.73"/><circle cx="727.2" cy="408.8" r="2.9" fill="url(#sf)" opacity="0.58"/><circle cx="533.9" cy="392.7" r="2.6" fill="url(#sf)" opacity="0.66"/><circle cx="519.1" cy="506.3" r="2.8" fill="url(#sf)" opacity="0.48"/><circle cx="882.5" cy="556.9" r="2.5" fill="url(#sf)" opacity="0.37"/><circle cx="597.0" cy="677.7" r="2.6" fill="url(#sf)" opacity="0.32"/><circle cx="856.9" cy="493.6" r="3.9" fill="url(#sf)" opacity="0.28"/><circle cx="670.6" cy="292.4" r="3.4" fill="url(#sf)" opacity="0.48"/><circle cx="783.6" cy="642.8" r="3.5" fill="url(#sf)" opacity="0.68"/><circle cx="1138.1" cy="341.7" r="4.0" fill="url(#sf)" opacity="0.45"/><circle cx="552.4" cy="655.6" r="2.5" fill="url(#sf)" opacity="0.26"/><circle cx="706.4" cy="351.4" r="4.0" fill="url(#sf)" opacity="0.69"/><circle cx="790.8" cy="468.3" r="3.8" fill="url(#sf)" opacity="0.65"/><circle cx="941.8" cy="460.2" r="2.5" fill="url(#sf)" opacity="0.37"/><circle cx="944.8" cy="495.9" r="3.7" fill="url(#sf)" opacity="0.70"/><circle cx="1141.7" cy="304.6" r="2.4" fill="url(#sf)" opacity="0.70"/><circle cx="888.0" cy="299.2" r="3.5" fill="url(#sf)" opacity="0.38"/><circle cx="672.1" cy="389.0" r="3.2" fill="url(#sf)" opacity="0.59"/><circle cx="566.5" cy="571.3" r="3.4" fill="url(#sf)" opacity="0.49"/><circle cx="953.9" cy="599.6" r="2.3" fill="url(#sf)" opacity="0.49"/><circle cx="957.6" cy="555.6" r="3.5" fill="url(#sf)" opacity="0.34"/><circle cx="1139.1" cy="592.8" r="2.7" fill="url(#sf)" opacity="0.47"/><circle cx="1138.8" cy="311.7" r="3.0" fill="url(#sf)" opacity="0.73"/><circle cx="1101.4" cy="324.0" r="3.6" fill="url(#sf)" opacity="0.43"/><circle cx="948.2" cy="583.7" r="2.5" fill="url(#sf)" opacity="0.36"/><circle cx="658.1" cy="340.3" r="2.4" fill="url(#sf)" opacity="0.32"/><circle cx="781.8" cy="415.5" r="2.4" fill="url(#sf)" opacity="0.54"/><circle cx="1128.7" cy="491.4" r="2.9" fill="url(#sf)" opacity="0.60"/><circle cx="801.9" cy="296.3" r="3.2" fill="url(#sf)" opacity="0.26"/><circle cx="956.3" cy="289.2" r="3.0" fill="url(#sf)" opacity="0.73"/><circle cx="1015.1" cy="617.1" r="3.5" fill="url(#sf)" opacity="0.57"/><circle cx="975.1" cy="680.6" r="2.7" fill="url(#sf)" opacity="0.63"/><circle cx="713.6" cy="335.3" r="3.8" fill="url(#sf)" opacity="0.55"/><circle cx="1068.7" cy="636.3" r="3.4" fill="url(#sf)" opacity="0.35"/><circle cx="528.7" cy="470.9" r="3.6" fill="url(#sf)" opacity="0.39"/><circle cx="564.3" cy="213.3" r="2.6" fill="url(#sf)" opacity="0.60"/><circle cx="521.5" cy="322.8" r="2.8" fill="url(#sf)" opacity="0.61"/><circle cx="1157.7" cy="220.4" r="2.5" fill="url(#sf)" opacity="0.72"/><circle cx="1146.6" cy="283.2" r="2.9" fill="url(#sf)" opacity="0.51"/><circle cx="726.1" cy="413.8" r="3.2" fill="url(#sf)" opacity="0.38"/><circle cx="554.6" cy="251.8" r="2.6" fill="url(#sf)" opacity="0.30"/><circle cx="922.8" cy="549.6" r="2.8" fill="url(#sf)" opacity="0.65"/><circle cx="990.5" cy="377.1" r="3.2" fill="url(#sf)" opacity="0.34"/><circle cx="1120.0" cy="483.3" r="2.4" fill="url(#sf)" opacity="0.33"/><circle cx="967.1" cy="398.2" r="3.6" fill="url(#sf)" opacity="0.36"/><circle cx="1034.8" cy="600.8" r="2.5" fill="url(#sf)" opacity="0.54"/><circle cx="642.8" cy="555.0" r="3.7" fill="url(#sf)" opacity="0.65"/><circle cx="668.6" cy="256.4" r="3.5" fill="url(#sf)" opacity="0.53"/><circle cx="608.4" cy="304.7" r="3.3" fill="url(#sf)" opacity="0.30"/><circle cx="929.2" cy="328.1" r="2.8" fill="url(#sf)" opacity="0.46"/><circle cx="863.9" cy="563.1" r="2.4" fill="url(#sf)" opacity="0.61"/><circle cx="662.0" cy="352.3" r="3.5" fill="url(#sf)" opacity="0.60"/><circle cx="916.7" cy="649.3" r="2.7" fill="url(#sf)" opacity="0.41"/><circle cx="947.6" cy="337.7" r="2.6" fill="url(#sf)" opacity="0.36"/><circle cx="1018.0" cy="612.9" r="3.6" fill="url(#sf)" opacity="0.73"/><circle cx="1032.9" cy="361.5" r="2.9" fill="url(#sf)" opacity="0.61"/><circle cx="555.0" cy="507.1" r="2.5" fill="url(#sf)" opacity="0.27"/><circle cx="851.4" cy="284.5" r="4.0" fill="url(#sf)" opacity="0.69"/><circle cx="817.8" cy="307.1" r="2.5" fill="url(#sf)" opacity="0.50"/><circle cx="856.3" cy="387.3" r="3.6" fill="url(#sf)" opacity="0.51"/><circle cx="1020.7" cy="262.6" r="2.4" fill="url(#sf)" opacity="0.44"/><circle cx="831.8" cy="333.8" r="3.5" fill="url(#sf)" opacity="0.36"/><circle cx="724.9" cy="442.8" r="3.6" fill="url(#sf)" opacity="0.64"/><circle cx="759.5" cy="428.2" r="4.0" fill="url(#sf)" opacity="0.72"/><circle cx="919.3" cy="262.0" r="3.1" fill="url(#sf)" opacity="0.57"/><circle cx="699.2" cy="229.2" r="4.1" fill="url(#sf)" opacity="0.70"/><circle cx="602.4" cy="437.4" r="3.4" fill="url(#sf)" opacity="0.40"/><circle cx="563.3" cy="575.8" r="3.7" fill="url(#sf)" opacity="0.47"/><circle cx="574.4" cy="402.4" r="2.5" fill="url(#sf)" opacity="0.73"/><circle cx="552.1" cy="351.0" r="3.7" fill="url(#sf)" opacity="0.32"/><circle cx="587.9" cy="245.3" r="2.6" fill="url(#sf)" opacity="0.52"/><circle cx="1058.0" cy="293.2" r="2.6" fill="url(#sf)" opacity="0.63"/><circle cx="794.5" cy="375.3" r="2.5" fill="url(#sf)" opacity="0.37"/><circle cx="1147.7" cy="267.9" r="2.8" fill="url(#sf)" opacity="0.62"/><circle cx="1096.0" cy="650.5" r="3.2" fill="url(#sf)" opacity="0.73"/><circle cx="909.8" cy="351.3" r="3.1" fill="url(#sf)" opacity="0.61"/><circle cx="993.9" cy="274.0" r="2.6" fill="url(#sf)" opacity="0.73"/><circle cx="588.2" cy="606.3" r="2.9" fill="url(#sf)" opacity="0.37"/><circle cx="684.1" cy="439.0" r="4.1" fill="url(#sf)" opacity="0.32"/><circle cx="1071.9" cy="367.1" r="2.6" fill="url(#sf)" opacity="0.62"/><circle cx="740.0" cy="302.1" r="3.1" fill="url(#sf)" opacity="0.66"/><circle cx="1077.4" cy="490.4" r="2.3" fill="url(#sf)" opacity="0.63"/><circle cx="911.4" cy="648.1" r="4.0" fill="url(#sf)" opacity="0.41"/><circle cx="1068.0" cy="609.0" r="2.8" fill="url(#sf)" opacity="0.43"/><circle cx="761.4" cy="382.5" r="3.0" fill="url(#sf)" opacity="0.31"/><circle cx="666.0" cy="653.0" r="3.0" fill="url(#sf)" opacity="0.57"/><circle cx="1093.1" cy="578.2" r="2.7" fill="url(#sf)" opacity="0.71"/><circle cx="1039.3" cy="692.5" r="3.6" fill="url(#sf)" opacity="0.63"/><circle cx="1045.0" cy="334.1" r="3.5" fill="url(#sf)" opacity="0.44"/><circle cx="1062.3" cy="275.9" r="3.3" fill="url(#sf)" opacity="0.42"/><circle cx="1049.9" cy="378.8" r="3.8" fill="url(#sf)" opacity="0.67"/><circle cx="1087.6" cy="278.6" r="4.0" fill="url(#sf)" opacity="0.62"/><circle cx="957.0" cy="528.1" r="2.4" fill="url(#sf)" opacity="0.69"/><circle cx="873.4" cy="432.5" r="2.9" fill="url(#sf)" opacity="0.64"/><circle cx="1025.1" cy="633.7" r="2.7" fill="url(#sf)" opacity="0.42"/><circle cx="680.3" cy="259.8" r="2.9" fill="url(#sf)" opacity="0.26"/><circle cx="1034.4" cy="321.4" r="2.4" fill="url(#sf)" opacity="0.28"/><circle cx="998.5" cy="307.4" r="3.1" fill="url(#sf)" opacity="0.45"/><circle cx="1038.2" cy="674.7" r="2.9" fill="url(#sf)" opacity="0.57"/><circle cx="1097.9" cy="439.7" r="3.9" fill="url(#sf)" opacity="0.62"/><circle cx="720.6" cy="635.7" r="3.3" fill="url(#sf)" opacity="0.30"/><circle cx="899.1" cy="614.0" r="3.2" fill="url(#sf)" opacity="0.49"/><circle cx="788.4" cy="638.9" r="3.5" fill="url(#sf)" opacity="0.35"/><circle cx="753.4" cy="387.6" r="4.0" fill="url(#sf)" opacity="0.60"/><circle cx="599.8" cy="655.4" r="2.4" fill="url(#sf)" opacity="0.55"/><circle cx="798.7" cy="559.7" r="3.1" fill="url(#sf)" opacity="0.30"/><circle cx="857.8" cy="609.7" r="3.7" fill="url(#sf)" opacity="0.43"/><circle cx="662.8" cy="573.0" r="3.7" fill="url(#sf)" opacity="0.36"/><circle cx="1090.4" cy="693.3" r="3.1" fill="url(#sf)" opacity="0.44"/><circle cx="978.3" cy="662.9" r="2.7" fill="url(#sf)" opacity="0.40"/><circle cx="731.9" cy="566.9" r="2.6" fill="url(#sf)" opacity="0.52"/><circle cx="842.7" cy="535.9" r="2.6" fill="url(#sf)" opacity="0.73"/><circle cx="1166.0" cy="483.7" r="3.7" fill="url(#sf)" opacity="0.34"/><circle cx="1107.9" cy="479.0" r="3.7" fill="url(#sf)" opacity="0.68"/><circle cx="753.0" cy="660.1" r="2.7" fill="url(#sf)" opacity="0.26"/><circle cx="844.1" cy="647.8" r="3.9" fill="url(#sf)" opacity="0.73"/><circle cx="849.5" cy="664.3" r="3.3" fill="url(#sf)" opacity="0.32"/><circle cx="927.3" cy="601.5" r="3.1" fill="url(#sf)" opacity="0.55"/><circle cx="686.7" cy="345.1" r="3.1" fill="url(#sf)" opacity="0.51"/><circle cx="822.0" cy="255.9" r="2.3" fill="url(#sf)" opacity="0.42"/><circle cx="982.8" cy="574.7" r="2.7" fill="url(#sf)" opacity="0.38"/><circle cx="853.3" cy="296.3" r="3.4" fill="url(#sf)" opacity="0.70"/><circle cx="649.7" cy="495.6" r="3.6" fill="url(#sf)" opacity="0.62"/><circle cx="979.7" cy="556.3" r="2.8" fill="url(#sf)" opacity="0.67"/><circle cx="1117.5" cy="236.5" r="4.0" fill="url(#sf)" opacity="0.47"/><circle cx="574.9" cy="244.8" r="3.7" fill="url(#sf)" opacity="0.59"/><circle cx="610.9" cy="434.5" r="3.4" fill="url(#sf)" opacity="0.75"/><circle cx="736.4" cy="583.6" r="2.7" fill="url(#sf)" opacity="0.35"/><circle cx="623.3" cy="410.3" r="3.4" fill="url(#sf)" opacity="0.40"/><circle cx="623.8" cy="317.2" r="2.5" fill="url(#sf)" opacity="0.35"/><circle cx="723.3" cy="456.2" r="2.6" fill="url(#sf)" opacity="0.49"/><circle cx="803.6" cy="683.9" r="3.2" fill="url(#sf)" opacity="0.72"/><circle cx="824.0" cy="307.2" r="3.4" fill="url(#sf)" opacity="0.32"/><circle cx="628.5" cy="246.6" r="3.6" fill="url(#sf)" opacity="0.73"/><circle cx="780.0" cy="383.1" r="3.1" fill="url(#sf)" opacity="0.43"/><circle cx="965.9" cy="401.5" r="2.6" fill="url(#sf)" opacity="0.68"/><circle cx="889.5" cy="214.1" r="3.8" fill="url(#sf)" opacity="0.61"/><circle cx="748.3" cy="517.2" r="4.0" fill="url(#sf)" opacity="0.45"/><circle cx="798.9" cy="355.9" r="3.3" fill="url(#sf)" opacity="0.58"/><circle cx="994.6" cy="672.4" r="2.6" fill="url(#sf)" opacity="0.43"/><circle cx="1070.0" cy="595.4" r="3.4" fill="url(#sf)" opacity="0.59"/><circle cx="739.0" cy="670.2" r="3.3" fill="url(#sf)" opacity="0.45"/><circle cx="637.0" cy="267.1" r="3.9" fill="url(#sf)" opacity="0.65"/><circle cx="536.3" cy="368.1" r="3.2" fill="url(#sf)" opacity="0.50"/><circle cx="754.2" cy="646.0" r="2.9" fill="url(#sf)" opacity="0.52"/><circle cx="1120.3" cy="521.6" r="3.2" fill="url(#sf)" opacity="0.42"/><circle cx="769.5" cy="507.0" r="3.7" fill="url(#sf)" opacity="0.38"/><circle cx="758.7" cy="399.4" r="3.0" fill="url(#sf)" opacity="0.71"/><circle cx="867.7" cy="345.0" r="2.9" fill="url(#sf)" opacity="0.66"/><circle cx="622.7" cy="546.3" r="2.3" fill="url(#sf)" opacity="0.35"/><circle cx="557.5" cy="602.5" r="2.6" fill="url(#sf)" opacity="0.36"/><circle cx="556.3" cy="339.2" r="3.6" fill="url(#sf)" opacity="0.61"/><circle cx="1108.0" cy="671.2" r="3.3" fill="url(#sf)" opacity="0.71"/><circle cx="577.0" cy="660.6" r="3.1" fill="url(#sf)" opacity="0.35"/><circle cx="1003.0" cy="628.3" r="3.0" fill="url(#sf)" opacity="0.30"/><circle cx="1083.8" cy="577.2" r="3.4" fill="url(#sf)" opacity="0.74"/><circle cx="543.6" cy="238.2" r="2.5" fill="url(#sf)" opacity="0.26"/><circle cx="977.3" cy="517.2" r="2.5" fill="url(#sf)" opacity="0.33"/><circle cx="636.1" cy="507.1" r="3.5" fill="url(#sf)" opacity="0.73"/><circle cx="752.3" cy="686.8" r="3.1" fill="url(#sf)" opacity="0.45"/><circle cx="682.9" cy="324.1" r="4.1" fill="url(#sf)" opacity="0.75"/><circle cx="975.7" cy="296.1" r="2.6" fill="url(#sf)" opacity="0.33"/><circle cx="746.1" cy="569.3" r="2.4" fill="url(#sf)" opacity="0.52"/><circle cx="959.4" cy="227.3" r="3.1" fill="url(#sf)" opacity="0.65"/><circle cx="891.5" cy="430.5" r="3.9" fill="url(#sf)" opacity="0.55"/><circle cx="737.0" cy="403.4" r="4.0" fill="url(#sf)" opacity="0.68"/><circle cx="1110.9" cy="483.6" r="2.6" fill="url(#sf)" opacity="0.34"/><circle cx="767.0" cy="546.7" r="2.3" fill="url(#sf)" opacity="0.65"/><circle cx="1027.5" cy="461.2" r="2.3" fill="url(#sf)" opacity="0.65"/><circle cx="786.9" cy="536.3" r="3.3" fill="url(#sf)" opacity="0.61"/><circle cx="783.5" cy="677.5" r="4.0" fill="url(#sf)" opacity="0.71"/><circle cx="917.0" cy="364.7" r="3.0" fill="url(#sf)" opacity="0.38"/><circle cx="1103.7" cy="596.0" r="3.7" fill="url(#sf)" opacity="0.66"/><circle cx="1160.0" cy="545.4" r="2.9" fill="url(#sf)" opacity="0.63"/><circle cx="688.7" cy="507.9" r="2.6" fill="url(#sf)" opacity="0.68"/><circle cx="835.2" cy="344.7" r="4.0" fill="url(#sf)" opacity="0.29"/><circle cx="1120.8" cy="578.9" r="2.6" fill="url(#sf)" opacity="0.63"/><circle cx="889.9" cy="651.9" r="3.4" fill="url(#sf)" opacity="0.46"/><circle cx="1122.9" cy="253.4" r="3.7" fill="url(#sf)" opacity="0.30"/><circle cx="698.0" cy="266.3" r="3.9" fill="url(#sf)" opacity="0.47"/><circle cx="989.0" cy="335.7" r="3.6" fill="url(#sf)" opacity="0.57"/><circle cx="582.1" cy="451.0" r="3.6" fill="url(#sf)" opacity="0.36"/><circle cx="942.3" cy="346.1" r="3.0" fill="url(#sf)" opacity="0.71"/><circle cx="1129.2" cy="696.0" r="3.1" fill="url(#sf)" opacity="0.54"/><circle cx="1042.1" cy="579.6" r="3.1" fill="url(#sf)" opacity="0.68"/><circle cx="778.6" cy="672.7" r="3.2" fill="url(#sf)" opacity="0.31"/><circle cx="1003.7" cy="281.4" r="3.5" fill="url(#sf)" opacity="0.28"/><circle cx="1158.4" cy="473.9" r="3.6" fill="url(#sf)" opacity="0.32"/><circle cx="931.0" cy="394.0" r="2.7" fill="url(#sf)" opacity="0.66"/><circle cx="540.5" cy="443.3" r="2.5" fill="url(#sf)" opacity="0.68"/><circle cx="1096.9" cy="227.7" r="3.1" fill="url(#sf)" opacity="0.48"/><circle cx="984.0" cy="565.4" r="2.9" fill="url(#sf)" opacity="0.72"/><circle cx="638.9" cy="277.4" r="3.8" fill="url(#sf)" opacity="0.31"/><circle cx="639.3" cy="454.1" r="2.9" fill="url(#sf)" opacity="0.33"/><circle cx="1120.7" cy="441.3" r="3.7" fill="url(#sf)" opacity="0.38"/><circle cx="1109.5" cy="318.5" r="3.9" fill="url(#sf)" opacity="0.56"/><circle cx="1147.3" cy="585.8" r="3.4" fill="url(#sf)" opacity="0.52"/><circle cx="1072.1" cy="426.6" r="2.5" fill="url(#sf)" opacity="0.71"/><circle cx="1040.2" cy="542.4" r="3.6" fill="url(#sf)" opacity="0.37"/><circle cx="818.8" cy="610.9" r="4.0" fill="url(#sf)" opacity="0.71"/><circle cx="622.8" cy="543.4" r="3.3" fill="url(#sf)" opacity="0.45"/><circle cx="627.5" cy="277.6" r="3.1" fill="url(#sf)" opacity="0.50"/><circle cx="692.3" cy="389.7" r="3.3" fill="url(#sf)" opacity="0.63"/><circle cx="900.3" cy="289.8" r="3.9" fill="url(#sf)" opacity="0.43"/><circle cx="1140.0" cy="688.1" r="2.6" fill="url(#sf)" opacity="0.54"/><circle cx="1144.5" cy="398.1" r="3.3" fill="url(#sf)" opacity="0.41"/><circle cx="537.5" cy="310.4" r="2.5" fill="url(#sf)" opacity="0.39"/><circle cx="926.3" cy="484.6" r="4.0" fill="url(#sf)" opacity="0.59"/><circle cx="753.4" cy="672.4" r="3.4" fill="url(#sf)" opacity="0.52"/><circle cx="1077.1" cy="536.6" r="2.9" fill="url(#sf)" opacity="0.55"/><circle cx="713.3" cy="682.1" r="2.7" fill="url(#sf)" opacity="0.74"/><circle cx="560.7" cy="215.8" r="3.3" fill="url(#sf)" opacity="0.35"/><circle cx="847.3" cy="268.4" r="3.8" fill="url(#sf)" opacity="0.58"/><circle cx="961.7" cy="661.4" r="4.1" fill="url(#sf)" opacity="0.59"/><circle cx="980.4" cy="211.9" r="2.4" fill="url(#sf)" opacity="0.46"/><circle cx="1146.0" cy="363.1" r="3.3" fill="url(#sf)" opacity="0.25"/><circle cx="788.0" cy="649.6" r="3.4" fill="url(#sf)" opacity="0.66"/><circle cx="527.5" cy="309.5" r="2.6" fill="url(#sf)" opacity="0.67"/><circle cx="584.8" cy="664.0" r="2.8" fill="url(#sf)" opacity="0.69"/><circle cx="852.6" cy="368.2" r="4.0" fill="url(#sf)" opacity="0.45"/><circle cx="970.2" cy="243.7" r="3.8" fill="url(#sf)" opacity="0.74"/><circle cx="590.5" cy="573.7" r="2.8" fill="url(#sf)" opacity="0.32"/><circle cx="754.7" cy="532.6" r="4.0" fill="url(#sf)" opacity="0.75"/><circle cx="1161.8" cy="513.9" r="3.5" fill="url(#sf)" opacity="0.33"/><circle cx="988.8" cy="478.9" r="2.9" fill="url(#sf)" opacity="0.70"/><circle cx="684.0" cy="279.8" r="2.6" fill="url(#sf)" opacity="0.32"/><circle cx="899.8" cy="600.2" r="2.6" fill="url(#sf)" opacity="0.50"/><circle cx="890.7" cy="483.4" r="3.0" fill="url(#sf)" opacity="0.52"/><circle cx="528.8" cy="239.2" r="3.1" fill="url(#sf)" opacity="0.37"/><circle cx="1008.7" cy="328.6" r="3.8" fill="url(#sf)" opacity="0.37"/><circle cx="578.9" cy="443.0" r="3.0" fill="url(#sf)" opacity="0.42"/><circle cx="1014.0" cy="319.0" r="3.5" fill="url(#sf)" opacity="0.67"/><circle cx="811.8" cy="455.5" r="4.0" fill="url(#sf)" opacity="0.55"/><circle cx="636.1" cy="244.8" r="2.4" fill="url(#sf)" opacity="0.42"/><circle cx="576.5" cy="526.3" r="3.1" fill="url(#sf)" opacity="0.40"/><circle cx="850.4" cy="666.2" r="2.7" fill="url(#sf)" opacity="0.33"/><circle cx="716.6" cy="368.6" r="3.9" fill="url(#sf)" opacity="0.60"/><circle cx="796.5" cy="291.7" r="2.4" fill="url(#sf)" opacity="0.31"/><circle cx="1067.3" cy="525.9" r="2.6" fill="url(#sf)" opacity="0.56"/><circle cx="556.8" cy="457.4" r="2.9" fill="url(#sf)" opacity="0.30"/><circle cx="999.4" cy="559.4" r="3.2" fill="url(#sf)" opacity="0.33"/><circle cx="952.2" cy="421.6" r="3.5" fill="url(#sf)" opacity="0.30"/><circle cx="1103.0" cy="212.7" r="2.7" fill="url(#sf)" opacity="0.45"/><circle cx="647.4" cy="253.7" r="3.5" fill="url(#sf)" opacity="0.75"/><circle cx="735.7" cy="340.4" r="3.5" fill="url(#sf)" opacity="0.36"/><circle cx="778.3" cy="545.6" r="3.1" fill="url(#sf)" opacity="0.33"/><circle cx="564.6" cy="474.9" r="4.1" fill="url(#sf)" opacity="0.71"/><circle cx="583.6" cy="455.1" r="3.2" fill="url(#sf)" opacity="0.35"/><circle cx="952.4" cy="451.9" r="3.8" fill="url(#sf)" opacity="0.40"/><circle cx="1123.2" cy="606.9" r="3.2" fill="url(#sf)" opacity="0.32"/><circle cx="831.9" cy="272.7" r="3.5" fill="url(#sf)" opacity="0.60"/><circle cx="893.1" cy="685.5" r="2.4" fill="url(#sf)" opacity="0.61"/><circle cx="1037.2" cy="265.9" r="2.9" fill="url(#sf)" opacity="0.28"/><circle cx="896.2" cy="562.4" r="2.9" fill="url(#sf)" opacity="0.60"/><circle cx="756.3" cy="557.1" r="2.8" fill="url(#sf)" opacity="0.74"/><circle cx="802.3" cy="212.7" r="2.5" fill="url(#sf)" opacity="0.61"/><circle cx="1078.5" cy="520.5" r="2.6" fill="url(#sf)" opacity="0.69"/><circle cx="982.8" cy="267.0" r="3.0" fill="url(#sf)" opacity="0.59"/><circle cx="521.3" cy="231.6" r="2.9" fill="url(#sf)" opacity="0.69"/><circle cx="1163.6" cy="365.7" r="3.9" fill="url(#sf)" opacity="0.64"/><circle cx="1078.7" cy="496.9" r="4.0" fill="url(#sf)" opacity="0.57"/><circle cx="1132.3" cy="486.0" r="2.7" fill="url(#sf)" opacity="0.51"/><circle cx="831.5" cy="375.0" r="3.0" fill="url(#sf)" opacity="0.51"/><circle cx="899.5" cy="319.2" r="2.8" fill="url(#sf)" opacity="0.50"/><circle cx="845.0" cy="414.5" r="3.5" fill="url(#sf)" opacity="0.34"/><circle cx="863.1" cy="345.0" r="3.7" fill="url(#sf)" opacity="0.60"/><circle cx="1024.3" cy="462.5" r="2.7" fill="url(#sf)" opacity="0.71"/><circle cx="849.5" cy="393.3" r="2.8" fill="url(#sf)" opacity="0.45"/><circle cx="977.5" cy="608.8" r="3.2" fill="url(#sf)" opacity="0.62"/><circle cx="656.8" cy="430.7" r="2.9" fill="url(#sf)" opacity="0.40"/><circle cx="751.6" cy="577.8" r="3.6" fill="url(#sf)" opacity="0.35"/><circle cx="670.3" cy="592.2" r="3.5" fill="url(#sf)" opacity="0.59"/><circle cx="930.0" cy="548.0" r="2.8" fill="url(#sf)" opacity="0.28"/><circle cx="752.3" cy="226.7" r="4.0" fill="url(#sf)" opacity="0.51"/><circle cx="952.6" cy="680.7" r="3.7" fill="url(#sf)" opacity="0.36"/><circle cx="737.0" cy="263.8" r="3.7" fill="url(#sf)" opacity="0.62"/><circle cx="834.5" cy="390.5" r="2.8" fill="url(#sf)" opacity="0.49"/><circle cx="979.7" cy="646.2" r="3.8" fill="url(#sf)" opacity="0.68"/><circle cx="803.2" cy="415.7" r="2.9" fill="url(#sf)" opacity="0.74"/><circle cx="637.6" cy="287.7" r="2.8" fill="url(#sf)" opacity="0.71"/><circle cx="1070.7" cy="372.1" r="3.8" fill="url(#sf)" opacity="0.70"/><circle cx="795.4" cy="304.5" r="3.7" fill="url(#sf)" opacity="0.44"/><circle cx="596.2" cy="649.8" r="3.1" fill="url(#sf)" opacity="0.45"/><circle cx="904.1" cy="335.1" r="2.3" fill="url(#sf)" opacity="0.45"/><circle cx="764.4" cy="216.4" r="3.0" fill="url(#sf)" opacity="0.63"/><circle cx="734.4" cy="541.3" r="3.4" fill="url(#sf)" opacity="0.34"/><circle cx="532.2" cy="538.7" r="3.4" fill="url(#sf)" opacity="0.40"/><circle cx="648.5" cy="626.7" r="3.9" fill="url(#sf)" opacity="0.37"/><circle cx="898.1" cy="490.3" r="2.9" fill="url(#sf)" opacity="0.27"/><circle cx="729.5" cy="524.2" r="3.4" fill="url(#sf)" opacity="0.51"/><circle cx="598.2" cy="314.4" r="2.9" fill="url(#sf)" opacity="0.46"/><circle cx="754.0" cy="649.5" r="2.5" fill="url(#sf)" opacity="0.74"/><circle cx="674.5" cy="627.3" r="2.7" fill="url(#sf)" opacity="0.54"/><circle cx="763.1" cy="229.4" r="3.7" fill="url(#sf)" opacity="0.66"/><circle cx="693.2" cy="588.2" r="3.2" fill="url(#sf)" opacity="0.74"/><circle cx="554.2" cy="395.8" r="2.7" fill="url(#sf)" opacity="0.56"/><circle cx="1022.3" cy="620.3" r="3.3" fill="url(#sf)" opacity="0.44"/><circle cx="1036.4" cy="261.8" r="2.8" fill="url(#sf)" opacity="0.63"/><circle cx="804.0" cy="693.6" r="2.5" fill="url(#sf)" opacity="0.48"/><circle cx="656.5" cy="212.0" r="2.5" fill="url(#sf)" opacity="0.30"/><circle cx="757.7" cy="421.2" r="3.2" fill="url(#sf)" opacity="0.39"/><circle cx="973.2" cy="461.8" r="4.1" fill="url(#sf)" opacity="0.33"/><circle cx="849.4" cy="450.9" r="3.0" fill="url(#sf)" opacity="0.68"/><circle cx="654.6" cy="637.5" r="2.9" fill="url(#sf)" opacity="0.42"/><circle cx="916.8" cy="484.8" r="2.8" fill="url(#sf)" opacity="0.29"/><circle cx="1137.0" cy="390.5" r="2.5" fill="url(#sf)" opacity="0.58"/><circle cx="863.2" cy="370.2" r="2.9" fill="url(#sf)" opacity="0.67"/><circle cx="738.1" cy="413.9" r="4.0" fill="url(#sf)" opacity="0.43"/><circle cx="779.1" cy="289.7" r="3.5" fill="url(#sf)" opacity="0.58"/><circle cx="807.8" cy="408.3" r="2.7" fill="url(#sf)" opacity="0.64"/><circle cx="814.8" cy="615.3" r="3.0" fill="url(#sf)" opacity="0.62"/><circle cx="537.6" cy="317.8" r="4.0" fill="url(#sf)" opacity="0.59"/><circle cx="956.2" cy="452.6" r="3.2" fill="url(#sf)" opacity="0.35"/><circle cx="630.9" cy="524.6" r="3.5" fill="url(#sf)" opacity="0.38"/><circle cx="936.0" cy="277.2" r="3.4" fill="url(#sf)" opacity="0.34"/><circle cx="848.7" cy="363.6" r="3.3" fill="url(#sf)" opacity="0.32"/><circle cx="831.7" cy="510.7" r="2.5" fill="url(#sf)" opacity="0.40"/><circle cx="958.1" cy="476.4" r="3.4" fill="url(#sf)" opacity="0.64"/><circle cx="888.7" cy="319.0" r="3.1" fill="url(#sf)" opacity="0.67"/><circle cx="885.6" cy="577.0" r="3.0" fill="url(#sf)" opacity="0.47"/><circle cx="1146.5" cy="610.6" r="3.5" fill="url(#sf)" opacity="0.30"/><circle cx="914.9" cy="227.1" r="4.0" fill="url(#sf)" opacity="0.74"/><circle cx="990.1" cy="341.0" r="3.8" fill="url(#sf)" opacity="0.34"/><circle cx="1054.6" cy="464.1" r="2.3" fill="url(#sf)" opacity="0.70"/><circle cx="803.7" cy="614.5" r="3.5" fill="url(#sf)" opacity="0.52"/><circle cx="1077.0" cy="309.7" r="3.9" fill="url(#sf)" opacity="0.42"/><circle cx="535.8" cy="374.6" r="2.4" fill="url(#sf)" opacity="0.29"/><circle cx="922.8" cy="269.7" r="2.6" fill="url(#sf)" opacity="0.40"/><circle cx="699.3" cy="658.2" r="3.9" fill="url(#sf)" opacity="0.69"/><circle cx="1159.4" cy="424.9" r="3.7" fill="url(#sf)" opacity="0.39"/><circle cx="1118.4" cy="605.0" r="3.6" fill="url(#sf)" opacity="0.36"/><circle cx="578.2" cy="660.6" r="3.3" fill="url(#sf)" opacity="0.56"/><circle cx="1076.7" cy="280.7" r="3.6" fill="url(#sf)" opacity="0.48"/><circle cx="1027.6" cy="432.6" r="2.7" fill="url(#sf)" opacity="0.73"/><circle cx="700.9" cy="573.0" r="3.8" fill="url(#sf)" opacity="0.37"/><circle cx="968.7" cy="403.5" r="2.7" fill="url(#sf)" opacity="0.36"/><circle cx="1136.3" cy="390.0" r="3.2" fill="url(#sf)" opacity="0.50"/><circle cx="536.2" cy="577.2" r="3.6" fill="url(#sf)" opacity="0.69"/><circle cx="749.9" cy="312.9" r="2.9" fill="url(#sf)" opacity="0.62"/><circle cx="944.7" cy="408.3" r="3.2" fill="url(#sf)" opacity="0.33"/><circle cx="1113.3" cy="440.3" r="3.2" fill="url(#sf)" opacity="0.64"/><circle cx="647.0" cy="562.1" r="2.9" fill="url(#sf)" opacity="0.66"/><circle cx="580.0" cy="345.1" r="3.4" fill="url(#sf)" opacity="0.49"/><circle cx="762.8" cy="492.2" r="2.7" fill="url(#sf)" opacity="0.47"/><circle cx="520.2" cy="599.2" r="2.8" fill="url(#sf)" opacity="0.67"/><circle cx="876.2" cy="503.3" r="3.4" fill="url(#sf)" opacity="0.31"/><circle cx="1021.9" cy="352.9" r="3.9" fill="url(#sf)" opacity="0.64"/><circle cx="957.8" cy="607.2" r="3.1" fill="url(#sf)" opacity="0.59"/><circle cx="1135.5" cy="302.9" r="2.5" fill="url(#sf)" opacity="0.46"/><circle cx="848.7" cy="283.5" r="2.7" fill="url(#sf)" opacity="0.68"/><circle cx="770.0" cy="283.4" r="2.6" fill="url(#sf)" opacity="0.54"/><circle cx="641.9" cy="441.9" r="3.3" fill="url(#sf)" opacity="0.47"/><circle cx="844.9" cy="617.7" r="2.3" fill="url(#sf)" opacity="0.71"/><circle cx="647.9" cy="229.6" r="3.7" fill="url(#sf)" opacity="0.53"/><circle cx="867.0" cy="316.8" r="3.7" fill="url(#sf)" opacity="0.40"/><circle cx="989.3" cy="321.9" r="3.3" fill="url(#sf)" opacity="0.57"/><circle cx="759.5" cy="444.3" r="2.4" fill="url(#sf)" opacity="0.57"/><circle cx="966.3" cy="285.5" r="3.3" fill="url(#sf)" opacity="0.62"/><circle cx="584.4" cy="618.7" r="3.9" fill="url(#sf)" opacity="0.28"/><circle cx="679.7" cy="251.9" r="2.8" fill="url(#sf)" opacity="0.29"/><circle cx="835.6" cy="332.7" r="2.8" fill="url(#sf)" opacity="0.48"/><circle cx="759.4" cy="594.2" r="3.6" fill="url(#sf)" opacity="0.31"/><circle cx="663.6" cy="215.0" r="2.9" fill="url(#sf)" opacity="0.30"/><circle cx="970.1" cy="590.2" r="4.1" fill="url(#sf)" opacity="0.35"/><circle cx="542.7" cy="578.9" r="3.0" fill="url(#sf)" opacity="0.72"/><circle cx="772.9" cy="362.9" r="2.4" fill="url(#sf)" opacity="0.72"/><circle cx="850.3" cy="425.2" r="3.1" fill="url(#sf)" opacity="0.63"/><circle cx="1056.5" cy="442.3" r="2.6" fill="url(#sf)" opacity="0.45"/><circle cx="1095.7" cy="409.1" r="3.5" fill="url(#sf)" opacity="0.53"/><circle cx="817.5" cy="490.4" r="2.7" fill="url(#sf)" opacity="0.53"/><circle cx="1078.5" cy="249.8" r="3.0" fill="url(#sf)" opacity="0.69"/><circle cx="1151.9" cy="217.5" r="3.4" fill="url(#sf)" opacity="0.57"/><circle cx="1064.5" cy="439.4" r="2.5" fill="url(#sf)" opacity="0.40"/><circle cx="980.1" cy="565.0" r="2.7" fill="url(#sf)" opacity="0.57"/><circle cx="943.9" cy="530.7" r="2.3" fill="url(#sf)" opacity="0.47"/><circle cx="729.3" cy="501.2" r="2.9" fill="url(#sf)" opacity="0.31"/><circle cx="952.7" cy="350.4" r="3.7" fill="url(#sf)" opacity="0.40"/><circle cx="872.2" cy="603.7" r="2.5" fill="url(#sf)" opacity="0.62"/><circle cx="563.1" cy="666.0" r="2.3" fill="url(#sf)" opacity="0.61"/><circle cx="757.6" cy="298.3" r="3.0" fill="url(#sf)" opacity="0.50"/><circle cx="787.5" cy="270.5" r="3.2" fill="url(#sf)" opacity="0.40"/><circle cx="1144.8" cy="397.2" r="3.1" fill="url(#sf)" opacity="0.36"/><circle cx="1145.8" cy="367.4" r="3.5" fill="url(#sf)" opacity="0.67"/><circle cx="773.4" cy="578.1" r="2.8" fill="url(#sf)" opacity="0.30"/><circle cx="546.3" cy="429.2" r="3.9" fill="url(#sf)" opacity="0.35"/><circle cx="804.0" cy="581.7" r="2.8" fill="url(#sf)" opacity="0.33"/><circle cx="855.0" cy="417.7" r="4.0" fill="url(#sf)" opacity="0.70"/><circle cx="673.0" cy="483.6" r="3.0" fill="url(#sf)" opacity="0.27"/><circle cx="806.5" cy="656.0" r="2.8" fill="url(#sf)" opacity="0.54"/><circle cx="978.6" cy="241.7" r="4.0" fill="url(#sf)" opacity="0.30"/><circle cx="714.1" cy="558.9" r="2.3" fill="url(#sf)" opacity="0.44"/><circle cx="600.9" cy="441.1" r="2.3" fill="url(#sf)" opacity="0.33"/><circle cx="662.9" cy="250.6" r="2.5" fill="url(#sf)" opacity="0.35"/><circle cx="853.9" cy="277.6" r="3.8" fill="url(#sf)" opacity="0.46"/><circle cx="682.0" cy="328.1" r="3.8" fill="url(#sf)" opacity="0.27"/><circle cx="999.2" cy="258.4" r="4.0" fill="url(#sf)" opacity="0.45"/><circle cx="905.7" cy="630.6" r="2.5" fill="url(#sf)" opacity="0.28"/><circle cx="967.7" cy="496.6" r="3.6" fill="url(#sf)" opacity="0.39"/><circle cx="840.5" cy="301.7" r="3.1" fill="url(#sf)" opacity="0.39"/><circle cx="897.9" cy="356.3" r="2.8" fill="url(#sf)" opacity="0.57"/><circle cx="574.4" cy="600.4" r="3.2" fill="url(#sf)" opacity="0.36"/><circle cx="593.4" cy="458.3" r="3.2" fill="url(#sf)" opacity="0.61"/><circle cx="760.9" cy="411.3" r="3.9" fill="url(#sf)" opacity="0.39"/><circle cx="1153.7" cy="644.8" r="4.1" fill="url(#sf)" opacity="0.72"/><circle cx="685.4" cy="606.8" r="3.4" fill="url(#sf)" opacity="0.35"/><circle cx="1164.4" cy="525.8" r="3.8" fill="url(#sf)" opacity="0.53"/><circle cx="570.5" cy="630.6" r="2.6" fill="url(#sf)" opacity="0.38"/><circle cx="917.7" cy="305.3" r="3.1" fill="url(#sf)" opacity="0.61"/><circle cx="581.1" cy="532.1" r="2.5" fill="url(#sf)" opacity="0.49"/><circle cx="939.2" cy="545.0" r="2.4" fill="url(#sf)" opacity="0.35"/><circle cx="1140.2" cy="401.0" r="3.1" fill="url(#sf)" opacity="0.44"/><circle cx="969.4" cy="570.9" r="3.5" fill="url(#sf)" opacity="0.45"/><circle cx="887.5" cy="461.5" r="2.6" fill="url(#sf)" opacity="0.72"/><circle cx="1143.3" cy="588.8" r="4.1" fill="url(#sf)" opacity="0.48"/><circle cx="1061.9" cy="328.0" r="3.6" fill="url(#sf)" opacity="0.61"/><circle cx="1126.3" cy="616.0" r="3.9" fill="url(#sf)" opacity="0.38"/><circle cx="1028.5" cy="442.0" r="2.9" fill="url(#sf)" opacity="0.43"/><circle cx="1035.9" cy="620.6" r="3.8" fill="url(#sf)" opacity="0.58"/><circle cx="629.2" cy="286.7" r="3.3" fill="url(#sf)" opacity="0.36"/><circle cx="736.8" cy="260.8" r="2.6" fill="url(#sf)" opacity="0.61"/><circle cx="663.7" cy="623.1" r="2.9" fill="url(#sf)" opacity="0.67"/><circle cx="714.8" cy="341.0" r="3.0" fill="url(#sf)" opacity="0.26"/><circle cx="800.8" cy="395.6" r="2.3" fill="url(#sf)" opacity="0.68"/><circle cx="761.7" cy="211.2" r="4.0" fill="url(#sf)" opacity="0.36"/><circle cx="682.7" cy="222.8" r="2.5" fill="url(#sf)" opacity="0.60"/><circle cx="895.6" cy="456.0" r="2.7" fill="url(#sf)" opacity="0.39"/><circle cx="1146.6" cy="391.9" r="4.1" fill="url(#sf)" opacity="0.69"/><circle cx="599.6" cy="623.2" r="2.3" fill="url(#sf)" opacity="0.61"/><circle cx="1042.8" cy="549.0" r="3.3" fill="url(#sf)" opacity="0.66"/><circle cx="618.9" cy="473.3" r="2.8" fill="url(#sf)" opacity="0.45"/><circle cx="642.8" cy="555.2" r="3.3" fill="url(#sf)" opacity="0.64"/><circle cx="925.5" cy="502.2" r="4.0" fill="url(#sf)" opacity="0.66"/><circle cx="885.7" cy="369.5" r="4.0" fill="url(#sf)" opacity="0.44"/><circle cx="585.1" cy="373.0" r="3.6" fill="url(#sf)" opacity="0.72"/><circle cx="936.8" cy="533.0" r="4.0" fill="url(#sf)" opacity="0.64"/><circle cx="807.2" cy="435.4" r="3.7" fill="url(#sf)" opacity="0.41"/><circle cx="590.0" cy="512.2" r="3.8" fill="url(#sf)" opacity="0.37"/><circle cx="961.3" cy="644.8" r="2.5" fill="url(#sf)" opacity="0.32"/><circle cx="838.0" cy="373.5" r="4.0" fill="url(#sf)" opacity="0.75"/><circle cx="807.3" cy="596.5" r="3.4" fill="url(#sf)" opacity="0.34"/><circle cx="1147.8" cy="295.8" r="2.4" fill="url(#sf)" opacity="0.48"/><circle cx="530.5" cy="444.6" r="3.0" fill="url(#sf)" opacity="0.73"/><circle cx="786.6" cy="624.0" r="3.7" fill="url(#sf)" opacity="0.54"/><circle cx="672.9" cy="359.2" r="3.2" fill="url(#sf)" opacity="0.45"/><circle cx="936.7" cy="456.6" r="2.9" fill="url(#sf)" opacity="0.55"/><circle cx="1163.8" cy="309.4" r="2.9" fill="url(#sf)" opacity="0.26"/><circle cx="579.7" cy="238.0" r="3.1" fill="url(#sf)" opacity="0.67"/><circle cx="970.4" cy="680.5" r="3.8" fill="url(#sf)" opacity="0.54"/><circle cx="894.5" cy="217.1" r="3.0" fill="url(#sf)" opacity="0.38"/><circle cx="920.6" cy="242.8" r="3.3" fill="url(#sf)" opacity="0.44"/><circle cx="837.3" cy="407.5" r="2.5" fill="url(#sf)" opacity="0.62"/><circle cx="1036.8" cy="501.7" r="2.5" fill="url(#sf)" opacity="0.55"/><circle cx="1082.5" cy="690.5" r="3.7" fill="url(#sf)" opacity="0.27"/><circle cx="1087.4" cy="534.2" r="2.8" fill="url(#sf)" opacity="0.71"/></g><g filter="url(#sblr)"><g filter="url(#blr)"><path d="M852.0 464.9 L979.1 460.7 L852.0 461.1 Z" fill="url(#rayf)" opacity="0.62"/><path d="M851.9 464.3 L928.6 469.0 L852.1 461.7 Z" fill="url(#rayf)" opacity="0.73"/><path d="M851.7 465.8 L945.9 474.6 L852.3 460.2 Z" fill="url(#rayf)" opacity="0.56"/><path d="M851.5 465.2 L968.8 490.7 L852.5 460.8 Z" fill="url(#rayf)" opacity="0.42"/><path d="M851.4 465.0 L1006.5 508.9 L852.6 461.0 Z" fill="url(#rayf)" opacity="0.68"/><path d="M851.1 465.3 L923.8 490.1 L852.9 460.7 Z" fill="url(#rayf)" opacity="0.62"/><path d="M851.0 465.4 L919.3 491.9 L853.0 460.6 Z" fill="url(#rayf)" opacity="0.56"/><path d="M850.9 465.1 L994.1 541.4 L853.1 460.9 Z" fill="url(#rayf)" opacity="0.76"/><path d="M851.0 464.7 L983.3 543.7 L853.0 461.3 Z" fill="url(#rayf)" opacity="0.77"/><path d="M851.1 464.2 L915.6 511.9 L852.9 461.8 Z" fill="url(#rayf)" opacity="0.45"/><path d="M850.5 464.7 L938.2 540.3 L853.5 461.3 Z" fill="url(#rayf)" opacity="0.49"/><path d="M850.7 464.3 L931.5 539.8 L853.3 461.7 Z" fill="url(#rayf)" opacity="0.61"/><path d="M850.3 464.5 L961.6 586.2 L853.7 461.5 Z" fill="url(#rayf)" opacity="0.77"/><path d="M850.1 464.4 L955.7 602.8 L853.9 461.6 Z" fill="url(#rayf)" opacity="0.42"/><path d="M849.8 464.4 L944.2 607.4 L854.2 461.6 Z" fill="url(#rayf)" opacity="0.61"/><path d="M849.8 464.2 L896.9 543.5 L854.2 461.8 Z" fill="url(#rayf)" opacity="0.61"/><path d="M849.7 464.2 L886.6 531.4 L854.3 461.8 Z" fill="url(#rayf)" opacity="0.80"/><path d="M850.2 463.8 L913.8 604.1 L853.8 462.2 Z" fill="url(#rayf)" opacity="0.42"/><path d="M849.5 463.8 L900.6 605.7 L854.5 462.2 Z" fill="url(#rayf)" opacity="0.37"/><path d="M849.7 463.6 L869.5 535.6 L854.3 462.4 Z" fill="url(#rayf)" opacity="0.50"/><path d="M850.0 463.3 L877.5 634.1 L854.0 462.7 Z" fill="url(#rayf)" opacity="0.80"/><path d="M849.8 463.3 L861.2 540.5 L854.2 462.7 Z" fill="url(#rayf)" opacity="0.36"/><path d="M849.8 463.1 L858.3 575.7 L854.2 462.9 Z" fill="url(#rayf)" opacity="0.42"/><path d="M850.2 463.0 L851.5 624.1 L853.8 463.0 Z" fill="url(#rayf)" opacity="0.78"/><path d="M850.0 462.7 L837.5 571.7 L854.0 463.3 Z" fill="url(#rayf)" opacity="0.58"/><path d="M849.9 462.6 L827.7 593.3 L854.1 463.4 Z" fill="url(#rayf)" opacity="0.63"/><path d="M850.1 462.5 L818.5 581.6 L853.9 463.5 Z" fill="url(#rayf)" opacity="0.67"/><path d="M849.4 462.2 L822.4 560.2 L854.6 463.8 Z" fill="url(#rayf)" opacity="0.58"/><path d="M850.2 462.3 L825.1 528.9 L853.8 463.7 Z" fill="url(#rayf)" opacity="0.61"/><path d="M849.9 462.1 L797.1 585.9 L854.1 463.9 Z" fill="url(#rayf)" opacity="0.38"/><path d="M850.0 461.8 L791.6 565.5 L854.0 464.2 Z" fill="url(#rayf)" opacity="0.51"/><path d="M850.9 462.2 L767.8 584.1 L853.1 463.8 Z" fill="url(#rayf)" opacity="0.38"/><path d="M850.7 462.0 L745.0 596.6 L853.3 464.0 Z" fill="url(#rayf)" opacity="0.56"/><path d="M850.6 461.8 L782.2 539.5 L853.4 464.2 Z" fill="url(#rayf)" opacity="0.49"/><path d="M850.8 461.8 L757.5 555.9 L853.2 464.2 Z" fill="url(#rayf)" opacity="0.52"/><path d="M850.6 461.3 L795.3 508.7 L853.4 464.7 Z" fill="url(#rayf)" opacity="0.68"/><path d="M850.5 461.0 L777.2 518.9 L853.5 465.0 Z" fill="url(#rayf)" opacity="0.46"/><path d="M850.7 461.0 L755.2 526.4 L853.3 465.0 Z" fill="url(#rayf)" opacity="0.40"/><path d="M850.8 460.8 L759.9 513.5 L853.2 465.2 Z" fill="url(#rayf)" opacity="0.55"/><path d="M851.3 461.3 L771.0 496.7 L852.7 464.7 Z" fill="url(#rayf)" opacity="0.64"/><path d="M851.5 461.4 L740.7 500.2 L852.5 464.6 Z" fill="url(#rayf)" opacity="0.40"/><path d="M851.3 460.6 L765.4 487.6 L852.7 465.4 Z" fill="url(#rayf)" opacity="0.73"/><path d="M851.4 460.6 L755.4 485.8 L852.6 465.4 Z" fill="url(#rayf)" opacity="0.64"/><path d="M851.8 461.5 L746.5 475.5 L852.2 464.5 Z" fill="url(#rayf)" opacity="0.48"/><path d="M851.9 461.2 L753.6 467.9 L852.1 464.8 Z" fill="url(#rayf)" opacity="0.54"/><path d="M852.0 460.3 L739.0 463.6 L852.0 465.7 Z" fill="url(#rayf)" opacity="0.42"/><path d="M852.1 460.4 L683.1 457.0 L851.9 465.6 Z" fill="url(#rayf)" opacity="0.79"/><path d="M852.4 460.3 L683.8 440.1 L851.6 465.7 Z" fill="url(#rayf)" opacity="0.45"/><path d="M852.5 460.8 L698.2 427.5 L851.5 465.2 Z" fill="url(#rayf)" opacity="0.58"/><path d="M852.4 461.4 L749.9 435.3 L851.6 464.6 Z" fill="url(#rayf)" opacity="0.38"/><path d="M852.9 460.6 L758.1 428.2 L851.1 465.4 Z" fill="url(#rayf)" opacity="0.37"/><path d="M853.2 460.6 L723.2 401.2 L850.8 465.4 Z" fill="url(#rayf)" opacity="0.75"/><path d="M852.7 461.9 L738.5 398.5 L851.3 464.1 Z" fill="url(#rayf)" opacity="0.69"/><path d="M853.2 461.0 L764.7 411.2 L850.8 465.0 Z" fill="url(#rayf)" opacity="0.59"/><path d="M853.3 461.2 L715.0 364.7 L850.7 464.8 Z" fill="url(#rayf)" opacity="0.50"/><path d="M853.3 461.4 L727.3 362.0 L850.7 464.6 Z" fill="url(#rayf)" opacity="0.70"/><path d="M853.4 461.5 L786.1 400.7 L850.6 464.5 Z" fill="url(#rayf)" opacity="0.72"/><path d="M854.0 461.2 L747.0 351.6 L850.0 464.8 Z" fill="url(#rayf)" opacity="0.71"/><path d="M853.8 461.7 L809.7 406.2 L850.2 464.3 Z" fill="url(#rayf)" opacity="0.74"/><path d="M853.4 462.0 L794.4 383.1 L850.6 464.0 Z" fill="url(#rayf)" opacity="0.59"/><path d="M854.1 461.8 L791.6 359.7 L849.9 464.2 Z" fill="url(#rayf)" opacity="0.35"/><path d="M853.3 462.3 L813.2 389.3 L850.7 463.7 Z" fill="url(#rayf)" opacity="0.38"/><path d="M853.3 462.5 L797.1 313.0 L850.7 463.5 Z" fill="url(#rayf)" opacity="0.58"/><path d="M853.7 462.4 L818.9 365.4 L850.3 463.6 Z" fill="url(#rayf)" opacity="0.64"/><path d="M853.5 462.6 L826.5 358.2 L850.5 463.4 Z" fill="url(#rayf)" opacity="0.50"/><path d="M854.3 462.5 L826.4 337.2 L849.7 463.5 Z" fill="url(#rayf)" opacity="0.52"/><path d="M853.8 462.8 L840.1 375.0 L850.2 463.2 Z" fill="url(#rayf)" opacity="0.62"/><path d="M854.5 463.0 L850.3 353.1 L849.5 463.0 Z" fill="url(#rayf)" opacity="0.63"/><path d="M854.0 463.1 L855.3 353.9 L850.0 462.9 Z" fill="url(#rayf)" opacity="0.67"/><path d="M854.0 463.2 L866.1 320.8 L850.0 462.8 Z" fill="url(#rayf)" opacity="0.46"/><path d="M853.4 463.2 L877.2 322.2 L850.6 462.8 Z" fill="url(#rayf)" opacity="0.54"/><path d="M854.6 463.6 L890.5 305.3 L849.4 462.4 Z" fill="url(#rayf)" opacity="0.52"/><path d="M853.6 463.6 L903.3 318.8 L850.4 462.4 Z" fill="url(#rayf)" opacity="0.56"/><path d="M854.1 463.8 L906.4 317.4 L849.9 462.2 Z" fill="url(#rayf)" opacity="0.75"/><path d="M854.1 464.1 L916.0 338.4 L849.9 461.9 Z" fill="url(#rayf)" opacity="0.60"/><path d="M853.1 463.6 L914.7 347.2 L850.9 462.4 Z" fill="url(#rayf)" opacity="0.41"/><path d="M853.2 463.8 L894.9 401.9 L850.8 462.2 Z" fill="url(#rayf)" opacity="0.39"/><path d="M853.0 463.8 L908.5 394.5 L851.0 462.2 Z" fill="url(#rayf)" opacity="0.73"/><path d="M853.8 464.5 L955.0 342.4 L850.2 461.5 Z" fill="url(#rayf)" opacity="0.73"/><path d="M853.7 464.9 L948.9 375.2 L850.3 461.1 Z" fill="url(#rayf)" opacity="0.37"/><path d="M853.5 464.8 L948.2 385.3 L850.5 461.2 Z" fill="url(#rayf)" opacity="0.40"/><path d="M852.8 464.1 L989.7 366.6 L851.2 461.9 Z" fill="url(#rayf)" opacity="0.50"/><path d="M852.9 464.4 L985.5 380.4 L851.1 461.6 Z" fill="url(#rayf)" opacity="0.43"/><path d="M853.2 465.1 L969.8 397.7 L850.8 460.9 Z" fill="url(#rayf)" opacity="0.53"/><path d="M852.8 464.7 L953.6 416.6 L851.2 461.3 Z" fill="url(#rayf)" opacity="0.54"/><path d="M853.0 465.6 L965.9 417.8 L851.0 460.4 Z" fill="url(#rayf)" opacity="0.54"/><path d="M852.6 465.3 L935.9 440.5 L851.4 460.7 Z" fill="url(#rayf)" opacity="0.69"/><path d="M852.4 465.0 L973.9 438.6 L851.6 461.0 Z" fill="url(#rayf)" opacity="0.64"/><path d="M852.2 464.4 L937.1 453.4 L851.8 461.6 Z" fill="url(#rayf)" opacity="0.69"/><path d="M852.1 465.0 L976.2 457.9 L851.9 461.0 Z" fill="url(#rayf)" opacity="0.67"/></g><circle cx="852" cy="463" r="54" fill="url(#core)"/><circle cx="707.0" cy="225.4" r="6.4" fill="url(#sc)" opacity="1.00"/><circle cx="637.8" cy="219.0" r="3.7" fill="url(#sw)" opacity="0.68"/><circle cx="587.4" cy="253.3" r="6.0" fill="url(#sw)" opacity="1.00"/><circle cx="646.8" cy="247.0" r="5.1" fill="url(#sy)" opacity="0.93"/><circle cx="711.6" cy="248.0" r="3.7" fill="url(#sy)" opacity="0.68"/><circle cx="705.3" cy="258.7" r="3.7" fill="url(#sc)" opacity="0.68"/><circle cx="671.0" cy="277.6" r="5.7" fill="url(#sy)" opacity="1.00"/><circle cx="684.6" cy="287.5" r="6.4" fill="url(#sr)" opacity="1.00"/><circle cx="683.7" cy="279.4" r="4.1" fill="url(#sw)" opacity="0.76"/><circle cx="573.9" cy="285.7" r="4.6" fill="url(#sy)" opacity="0.84"/><circle cx="555.9" cy="290.2" r="4.1" fill="url(#sy)" opacity="0.76"/><circle cx="636.0" cy="281.0" r="3.7" fill="url(#sc)" opacity="0.68"/><circle cx="645.0" cy="275.8" r="3.7" fill="url(#sc)" opacity="0.68"/><circle cx="623.4" cy="271.3" r="3.4" fill="url(#sc)" opacity="0.59"/><circle cx="716.0" cy="308.2" r="4.6" fill="url(#sy)" opacity="0.84"/><circle cx="539.7" cy="330.7" r="4.6" fill="url(#sc)" opacity="0.84"/><circle cx="607.2" cy="333.4" r="3.7" fill="url(#sw)" opacity="0.68"/><circle cx="686.4" cy="332.5" r="4.1" fill="url(#sw)" opacity="0.76"/><circle cx="691.8" cy="341.5" r="4.1" fill="url(#sc)" opacity="0.76"/><circle cx="582.0" cy="312.7" r="3.7" fill="url(#sy)" opacity="0.68"/><circle cx="537.0" cy="240.7" r="3.4" fill="url(#sy)" opacity="0.59"/><circle cx="600.0" cy="260.5" r="3.4" fill="url(#sw)" opacity="0.59"/><circle cx="559.5" cy="257.8" r="3.2" fill="url(#sw)" opacity="0.55"/><circle cx="724.2" cy="268.6" r="3.4" fill="url(#sc)" opacity="0.59"/><circle cx="616.0" cy="350.5" r="3.5" fill="url(#sw)" opacity="0.63"/><circle cx="661.0" cy="365.0" r="3.5" fill="url(#sw)" opacity="0.63"/><circle cx="603.6" cy="365.0" r="3.4" fill="url(#sw)" opacity="0.59"/><circle cx="720.6" cy="351.4" r="3.4" fill="url(#sw)" opacity="0.59"/><circle cx="803.4" cy="337.0" r="6.4" fill="url(#sp)" opacity="1.00"/><circle cx="847.5" cy="310.9" r="6.4" fill="url(#sp)" opacity="1.00"/><circle cx="879.0" cy="239.8" r="5.7" fill="url(#sc)" opacity="1.00"/><circle cx="918.6" cy="283.9" r="5.1" fill="url(#sy)" opacity="0.93"/><circle cx="908.7" cy="338.8" r="5.4" fill="url(#sw)" opacity="0.97"/><circle cx="924.0" cy="338.8" r="5.7" fill="url(#sc)" opacity="1.00"/><circle cx="801.6" cy="364.9" r="5.1" fill="url(#sw)" opacity="0.93"/><circle cx="940.0" cy="212.8" r="4.6" fill="url(#sw)" opacity="0.84"/><circle cx="768.3" cy="228.0" r="4.1" fill="url(#sy)" opacity="0.76"/><circle cx="844.0" cy="234.4" r="3.9" fill="url(#sy)" opacity="0.72"/><circle cx="936.6" cy="324.4" r="3.9" fill="url(#sw)" opacity="0.72"/><circle cx="778.2" cy="317.2" r="3.7" fill="url(#sw)" opacity="0.68"/><circle cx="850.0" cy="268.6" r="3.2" fill="url(#sw)" opacity="0.55"/><circle cx="817.8" cy="221.8" r="3.5" fill="url(#sc)" opacity="0.63"/><circle cx="783.6" cy="240.7" r="3.4" fill="url(#sy)" opacity="0.59"/><circle cx="762.0" cy="321.7" r="3.4" fill="url(#sw)" opacity="0.59"/><circle cx="817.8" cy="313.6" r="3.5" fill="url(#sw)" opacity="0.63"/><circle cx="881.7" cy="252.4" r="3.5" fill="url(#sy)" opacity="0.63"/><circle cx="944.7" cy="280.3" r="3.4" fill="url(#sc)" opacity="0.59"/><circle cx="861.0" cy="361.3" r="3.5" fill="url(#sw)" opacity="0.63"/><circle cx="990.6" cy="328.9" r="6.0" fill="url(#sr)" opacity="1.00"/><circle cx="1162.5" cy="328.9" r="5.4" fill="url(#sr)" opacity="0.97"/><circle cx="1125.6" cy="223.6" r="5.1" fill="url(#sy)" opacity="0.93"/><circle cx="1035.6" cy="267.7" r="5.4" fill="url(#sc)" opacity="0.97"/><circle cx="1060.8" cy="265.9" r="4.8" fill="url(#sc)" opacity="0.89"/><circle cx="1043.7" cy="297.4" r="5.4" fill="url(#sc)" opacity="0.97"/><circle cx="986.1" cy="307.3" r="4.1" fill="url(#sc)" opacity="0.76"/><circle cx="1121.0" cy="339.7" r="4.8" fill="url(#sc)" opacity="0.89"/><circle cx="1032.9" cy="346.0" r="4.6" fill="url(#sy)" opacity="0.84"/><circle cx="1030.2" cy="338.8" r="3.7" fill="url(#sw)" opacity="0.68"/><circle cx="1086.0" cy="264.1" r="4.1" fill="url(#sy)" opacity="0.76"/><circle cx="1131.0" cy="264.1" r="3.9" fill="url(#sw)" opacity="0.72"/><circle cx="1030.2" cy="225.4" r="3.7" fill="url(#sy)" opacity="0.68"/><circle cx="1005.0" cy="224.5" r="3.5" fill="url(#sy)" opacity="0.63"/><circle cx="957.3" cy="251.5" r="3.4" fill="url(#sy)" opacity="0.59"/><circle cx="1059.0" cy="318.1" r="3.7" fill="url(#sw)" opacity="0.68"/><circle cx="1068.0" cy="279.4" r="3.7" fill="url(#sy)" opacity="0.68"/><circle cx="1142.7" cy="346.0" r="3.9" fill="url(#sw)" opacity="0.72"/><circle cx="975.3" cy="368.5" r="3.9" fill="url(#sc)" opacity="0.72"/><circle cx="989.7" cy="237.1" r="3.5" fill="url(#sc)" opacity="0.63"/><circle cx="1113.9" cy="279.4" r="3.7" fill="url(#sc)" opacity="0.68"/><circle cx="1114.8" cy="259.6" r="3.5" fill="url(#sc)" opacity="0.63"/><circle cx="1043.7" cy="212.8" r="3.5" fill="url(#sw)" opacity="0.63"/><circle cx="639.6" cy="479.2" r="6.4" fill="url(#sr)" opacity="1.00"/><circle cx="651.3" cy="514.3" r="6.4" fill="url(#sc)" opacity="1.00"/><circle cx="648.6" cy="455.8" r="5.7" fill="url(#sw)" opacity="1.00"/><circle cx="701.7" cy="482.8" r="5.7" fill="url(#sc)" opacity="1.00"/><circle cx="708.0" cy="462.1" r="4.3" fill="url(#sc)" opacity="0.80"/><circle cx="723.3" cy="490.9" r="4.6" fill="url(#sy)" opacity="0.84"/><circle cx="687.3" cy="526.0" r="4.8" fill="url(#sc)" opacity="0.89"/><circle cx="602.7" cy="501.7" r="4.1" fill="url(#sw)" opacity="0.76"/><circle cx="569.4" cy="503.5" r="3.9" fill="url(#sw)" opacity="0.72"/><circle cx="676.5" cy="384.7" r="3.9" fill="url(#sw)" opacity="0.72"/><circle cx="679.2" cy="402.7" r="3.9" fill="url(#sc)" opacity="0.72"/><circle cx="656.7" cy="427.0" r="3.9" fill="url(#sy)" opacity="0.72"/><circle cx="649.5" cy="440.5" r="3.7" fill="url(#sy)" opacity="0.68"/><circle cx="546.9" cy="388.3" r="3.7" fill="url(#sc)" opacity="0.68"/><circle cx="591.0" cy="394.6" r="3.7" fill="url(#sw)" opacity="0.68"/><circle cx="686.4" cy="426.1" r="3.5" fill="url(#sc)" opacity="0.63"/><circle cx="615.3" cy="435.1" r="3.5" fill="url(#sw)" opacity="0.63"/><circle cx="731.4" cy="451.3" r="3.7" fill="url(#sy)" opacity="0.68"/><circle cx="580.2" cy="429.7" r="3.4" fill="url(#sw)" opacity="0.59"/><circle cx="580.2" cy="517.0" r="3.5" fill="url(#sw)" opacity="0.63"/><circle cx="725.0" cy="517.0" r="3.7" fill="url(#sc)" opacity="0.68"/><circle cx="723.3" cy="526.0" r="3.5" fill="url(#sc)" opacity="0.63"/><circle cx="569.4" cy="452.2" r="3.2" fill="url(#sw)" opacity="0.55"/><circle cx="656.7" cy="470.2" r="3.4" fill="url(#sw)" opacity="0.59"/><circle cx="778.2" cy="395.5" r="5.4" fill="url(#sw)" opacity="0.97"/><circle cx="752.1" cy="439.6" r="3.9" fill="url(#sw)" opacity="0.72"/><circle cx="796.2" cy="427.9" r="4.1" fill="url(#sw)" opacity="0.76"/><circle cx="769.2" cy="419.8" r="3.7" fill="url(#sw)" opacity="0.68"/><circle cx="807.0" cy="461.2" r="3.9" fill="url(#sw)" opacity="0.72"/><circle cx="883.5" cy="404.5" r="3.7" fill="url(#sc)" opacity="0.68"/><circle cx="904.2" cy="376.6" r="4.1" fill="url(#sw)" opacity="0.76"/><circle cx="949.2" cy="387.4" r="3.9" fill="url(#sw)" opacity="0.72"/><circle cx="945.6" cy="490.0" r="3.9" fill="url(#sw)" opacity="0.72"/><circle cx="789.0" cy="490.9" r="3.7" fill="url(#sw)" opacity="0.68"/><circle cx="893.4" cy="509.8" r="3.5" fill="url(#sw)" opacity="0.63"/><circle cx="915.0" cy="522.4" r="3.4" fill="url(#sw)" opacity="0.59"/><circle cx="749.4" cy="473.8" r="3.4" fill="url(#sw)" opacity="0.59"/><circle cx="1042.8" cy="405.4" r="5.7" fill="url(#sw)" opacity="1.00"/><circle cx="1021.2" cy="397.3" r="4.6" fill="url(#sy)" opacity="0.84"/><circle cx="1032.0" cy="456.7" r="5.4" fill="url(#sw)" opacity="0.97"/><circle cx="987.0" cy="452.2" r="4.6" fill="url(#sc)" opacity="0.84"/><circle cx="997.8" cy="445.9" r="4.3" fill="url(#sw)" opacity="0.80"/><circle cx="1077.0" cy="427.0" r="4.1" fill="url(#sy)" opacity="0.76"/><circle cx="1078.8" cy="443.2" r="4.1" fill="url(#sc)" opacity="0.76"/><circle cx="1126.5" cy="456.7" r="4.1" fill="url(#sc)" opacity="0.76"/><circle cx="1098.6" cy="446.8" r="3.9" fill="url(#sy)" opacity="0.72"/><circle cx="1106.7" cy="438.7" r="3.7" fill="url(#sw)" opacity="0.68"/><circle cx="1131.9" cy="488.2" r="3.9" fill="url(#sc)" opacity="0.72"/><circle cx="1003.2" cy="460.3" r="3.7" fill="url(#sc)" opacity="0.68"/><circle cx="1003.2" cy="379.3" r="3.7" fill="url(#sw)" opacity="0.68"/><circle cx="983.4" cy="402.7" r="3.7" fill="url(#sc)" opacity="0.68"/><circle cx="1003.2" cy="429.7" r="3.5" fill="url(#sc)" opacity="0.63"/><circle cx="951.9" cy="387.4" r="3.7" fill="url(#sc)" opacity="0.68"/><circle cx="994.2" cy="500.8" r="3.5" fill="url(#sw)" opacity="0.63"/><circle cx="1073.4" cy="388.3" r="3.5" fill="url(#sw)" opacity="0.63"/><circle cx="1087.8" cy="393.7" r="3.5" fill="url(#sw)" opacity="0.63"/><circle cx="744.0" cy="577.3" r="6.4" fill="url(#sr)" opacity="1.00"/><circle cx="735.9" cy="619.6" r="6.4" fill="url(#sw)" opacity="1.00"/><circle cx="718.8" cy="575.5" r="5.4" fill="url(#sc)" opacity="0.97"/><circle cx="640.5" cy="574.6" r="5.7" fill="url(#sy)" opacity="1.00"/><circle cx="627.9" cy="567.4" r="5.4" fill="url(#sw)" opacity="0.97"/><circle cx="609.9" cy="566.5" r="4.6" fill="url(#sy)" opacity="0.84"/><circle cx="636.0" cy="538.6" r="4.1" fill="url(#sw)" opacity="0.76"/><circle cx="672.0" cy="539.5" r="4.1" fill="url(#sy)" opacity="0.76"/><circle cx="708.0" cy="547.6" r="4.1" fill="url(#sy)" opacity="0.76"/><circle cx="741.3" cy="633.1" r="4.6" fill="url(#sy)" opacity="0.84"/><circle cx="727.8" cy="649.3" r="3.9" fill="url(#sy)" opacity="0.72"/><circle cx="646.8" cy="646.6" r="4.6" fill="url(#sc)" opacity="0.84"/><circle cx="633.3" cy="663.7" r="4.8" fill="url(#sc)" opacity="0.89"/><circle cx="650.4" cy="673.6" r="5.4" fill="url(#sc)" opacity="0.97"/><circle cx="681.9" cy="652.0" r="3.9" fill="url(#sc)" opacity="0.72"/><circle cx="747.6" cy="675.4" r="4.3" fill="url(#sy)" opacity="0.80"/><circle cx="717.9" cy="673.6" r="3.9" fill="url(#sc)" opacity="0.72"/><circle cx="535.2" cy="578.2" r="3.7" fill="url(#sw)" opacity="0.68"/><circle cx="587.4" cy="551.2" r="3.5" fill="url(#sw)" opacity="0.63"/><circle cx="691.8" cy="612.4" r="3.5" fill="url(#sw)" opacity="0.63"/><circle cx="544.2" cy="598.9" r="3.5" fill="url(#sy)" opacity="0.63"/><circle cx="580.2" cy="603.4" r="3.5" fill="url(#sy)" opacity="0.63"/><circle cx="602.7" cy="572.8" r="3.7" fill="url(#sc)" opacity="0.68"/><circle cx="721.5" cy="618.7" r="3.7" fill="url(#sy)" opacity="0.68"/><circle cx="943.5" cy="619.6" r="6.4" fill="url(#sp)" opacity="1.00"/><circle cx="899.4" cy="652.9" r="6.4" fill="url(#sr)" opacity="1.00"/><circle cx="843.6" cy="592.6" r="5.4" fill="url(#sr)" opacity="0.97"/><circle cx="851.7" cy="612.4" r="5.1" fill="url(#sw)" opacity="0.93"/><circle cx="948.0" cy="597.1" r="5.4" fill="url(#sc)" opacity="0.97"/><circle cx="876.9" cy="635.8" r="4.8" fill="url(#sc)" opacity="0.89"/><circle cx="899.4" cy="685.3" r="5.7" fill="url(#sc)" opacity="1.00"/><circle cx="774.3" cy="565.6" r="4.6" fill="url(#sy)" opacity="0.84"/><circle cx="772.5" cy="625.9" r="4.3" fill="url(#sy)" opacity="0.80"/><circle cx="764.4" cy="614.2" r="3.7" fill="url(#sy)" opacity="0.68"/><circle cx="873.3" cy="544.9" r="4.6" fill="url(#sc)" opacity="0.84"/><circle cx="909.3" cy="584.5" r="4.1" fill="url(#sy)" opacity="0.76"/><circle cx="903.0" cy="595.3" r="3.7" fill="url(#sy)" opacity="0.68"/><circle cx="919.2" cy="628.6" r="3.7" fill="url(#sy)" opacity="0.68"/><circle cx="926.4" cy="651.1" r="3.9" fill="url(#sc)" opacity="0.72"/><circle cx="939.0" cy="635.8" r="3.7" fill="url(#sc)" opacity="0.68"/><circle cx="912.0" cy="656.5" r="3.9" fill="url(#sc)" opacity="0.72"/><circle cx="814.8" cy="687.1" r="4.1" fill="url(#sc)" opacity="0.76"/><circle cx="862.5" cy="683.5" r="3.7" fill="url(#sy)" opacity="0.68"/><circle cx="990.3" cy="635.8" r="4.1" fill="url(#sy)" opacity="0.76"/><circle cx="993.0" cy="684.4" r="4.1" fill="url(#sc)" opacity="0.76"/><circle cx="990.3" cy="691.6" r="4.6" fill="url(#sr)" opacity="0.84"/><circle cx="970.5" cy="563.8" r="3.7" fill="url(#sc)" opacity="0.68"/><circle cx="804.9" cy="580.0" r="3.7" fill="url(#sw)" opacity="0.68"/><circle cx="800.4" cy="655.6" r="3.5" fill="url(#sw)" opacity="0.63"/><circle cx="894.0" cy="580.9" r="3.4" fill="url(#sw)" opacity="0.59"/><circle cx="922.8" cy="544.9" r="3.5" fill="url(#sc)" opacity="0.63"/></g><circle cx="852.5" cy="463" r="15.5" fill="#f59cb4"/><rect x="519" y="211" width="647" height="1" fill="#000"/></svg><div class="a" style="left:999px;top:494px;width:418px;height:261px;background:#5564b4"></div><div class="a" style="left:1001px;top:515px;width:414px;height:219px;background:#e2e2e2;border-left:3px solid #d8d8d8"></div><div class="a" style="left:1001px;top:734px;width:414px;height:19px;background:#cbc8c0"></div><div class="a" style="left:1158px;top:498px;font-size:11px;font-weight:bold;color:#fff;white-space:nowrap;letter-spacing:0.42px">MaskedStretch</div><svg class="a" style="left:1003px;top:498px" width="16" height="14"><defs><pattern id="chk2" width="2" height="2" patternUnits="userSpaceOnUse"><rect width="2" height="2" fill="#fff"/><rect width="1" height="1" fill="#222"/><rect x="1" y="1" width="1" height="1" fill="#222"/></pattern></defs><rect x="1" y="1" width="14" height="12" fill="#8a90ff"/><rect x="7" y="1" width="8" height="12" fill="url(#chk2)"/><path d="M1.5 13 Q4 3 14 1.5" stroke="#ff7a1a" stroke-width="1.3" fill="none"/></svg><svg class="a" style="left:1380px;top:499px" width="34" height="12"><path d="M3 1.5 H13 M3 10 H13" stroke="#fff" stroke-width="1.6"/><path d="M4 8.5 L8 3.5 L12 8.5Z" fill="#fff"/><path d="M21.5 1.5 L29.5 9.5 M29.5 1.5 L21.5 9.5" stroke="#fff" stroke-width="1.9"/></svg><div class="lbl" style="right:488px;top:523px;color:#2c2c2c">Target background:</div><div class="a" style="left:1117px;top:520px;width:73px;height:17px;background:#fff;border:2px solid #6fa3f5;font-size:10px;color:#151515;white-space:nowrap"><span style="position:absolute;left:3px;top:1px">0.12500000</span></div><div class="a" style="left:1175px;top:524px;width:1px;height:10px;background:#222"></div><div class="lbl" style="right:488px;top:543px;color:#2c2c2c">Iterations:</div><div class="a" style="left:1117px;top:541px;width:44px;height:17px;background:#fff;border:1px solid #a9a9a9;font-size:10px;color:#151515;white-space:nowrap"><span style="position:absolute;left:4px;top:2px">100</span></div><div class="a" style="left:1148px;top:542px;width:12px;height:15px;background:linear-gradient(#f0f0f0,#d8d8d8);border-left:1px solid #c8c8c8"></div><svg class="a" style="left:1149px;top:543px" width="11" height="13"><path d="M2 5 L5.5 1.5 L9 5Z M2 8 L5.5 11.5 L9 8Z" fill="#111"/></svg><div class="lbl" style="right:488px;top:564px;color:#2c2c2c">Clipping fraction:</div><div class="a" style="left:1117px;top:561px;width:73px;height:17px;background:#fff;border:1px solid #a9a9a9;font-size:10px;color:#151515;white-space:nowrap"><span style="position:absolute;left:4px;top:2px">0.00050000</span></div><svg class="a" style="left:1195px;top:564px" width="14" height="11"><path d="M0.5 5 L5 0.5 H13.5 V10.5 H5Z" fill="#444"/><path d="M6.5 2.5 L11.5 8 M11.5 2.5 L6.5 8" stroke="#fff" stroke-width="1.8"/></svg><div class="lbl" style="right:488px;top:584px;color:#2c2c2c">Color mask type:</div><div class="a" style="left:1117px;top:581px;width:90px;height:17px;background:linear-gradient(#f4f4f4,#dadada);border:1px solid #a9a9a9;border-radius:1px"></div><div class="a" style="left:1192px;top:582px;width:1px;height:15px;background:#c4c4c4"></div><div class="a" style="left:1121px;top:584px;font-size:10px;color:#151515;white-space:nowrap">HSI Intensity</div><svg class="a" style="left:1194px;top:585px" width="11" height="9"><path d="M1.5 2.5 H9.5 L5.5 7Z" fill="#111"/></svg><div class="lbl" style="right:488px;top:604px;color:#2c2c2c">Background reference:</div><div class="a" style="left:1117px;top:602px;width:274px;height:17px;background:#fff;border:1px solid #a9a9a9;font-size:10px;color:#151515;white-space:nowrap"><span style="position:absolute;left:4px;top:2px">&lt;target image&gt;</span></div><svg class="a" style="left:1396px;top:604px" width="11" height="11"><rect x="1" y="1.5" width="9" height="8" fill="none" stroke="#333" stroke-width="1"/><rect x="1" y="1" width="9" height="2" fill="#333"/></svg><div class="lbl" style="right:488px;top:625px;color:#2c2c2c">Lower limit:</div><div class="a" style="left:1117px;top:622px;width:73px;height:17px;background:#fff;border:1px solid #a9a9a9;font-size:10px;color:#151515;white-space:nowrap"><span style="position:absolute;left:4px;top:2px">0.00000000</span></div><div class="lbl" style="right:488px;top:645px;color:#2c2c2c">Upper limit:</div><div class="a" style="left:1117px;top:643px;width:73px;height:17px;background:#fff;border:1px solid #a9a9a9;font-size:10px;color:#151515;white-space:nowrap"><span style="position:absolute;left:4px;top:2px">0.05000000</span></div><div class="a" style="left:1193px;top:526px;width:217px;height:4px;background:linear-gradient(#c0c0c0,#e8e8e8);border:1px solid #a8a8a8;border-radius:2px"></div><div class="a" style="left:1193px;top:527px;width:30px;height:3px;background:#9a9a9a;border-radius:2px"></div><div class="a" style="left:1218px;top:523px;width:10px;height:10px;border-radius:50%;background:radial-gradient(circle at 40% 35%,#e0e0e0,#a8a8a8 70%,#909090);border:1px solid #8a8a8a"></div><div class="a" style="left:1193px;top:628px;width:217px;height:4px;background:linear-gradient(#c0c0c0,#e8e8e8);border:1px solid #a8a8a8;border-radius:2px"></div><div class="a" style="left:1193px;top:629px;width:4px;height:3px;background:#9a9a9a;border-radius:2px"></div><div class="a" style="left:1192px;top:625px;width:10px;height:10px;border-radius:50%;background:radial-gradient(circle at 40% 35%,#e0e0e0,#a8a8a8 70%,#909090);border:1px solid #8a8a8a"></div><div class="a" style="left:1193px;top:649px;width:217px;height:4px;background:linear-gradient(#c0c0c0,#e8e8e8);border:1px solid #a8a8a8;border-radius:2px"></div><div class="a" style="left:1193px;top:650px;width:15px;height:3px;background:#9a9a9a;border-radius:2px"></div><div class="a" style="left:1203px;top:646px;width:10px;height:10px;border-radius:50%;background:radial-gradient(circle at 40% 35%,#e0e0e0,#a8a8a8 70%,#909090);border:1px solid #8a8a8a"></div><div class="a" style="left:1006px;top:669px;width:405px;height:60px;border:1px solid #8e8e8e"></div><div class="a" style="left:1019px;top:664px;width:105px;height:10px;background:#e2e2e2"></div><div class="a" style="left:1124px;top:664px;width:0px;height:10px"></div><div class="a" style="left:1021px;top:664px;width:12px;height:11px;background:#fff;border:1px solid #8a8a8a"></div><div class="a" style="left:1040px;top:664px;font-size:10px;color:#3a6fbf;white-space:nowrap">Region of Interest</div><div class="lbl" style="right:488px;top:687px;color:#9a9a9a">Left:</div><div class="lbl" style="right:370px;top:687px;color:#9a9a9a">Top:</div><div class="lbl" style="right:488px;top:708px;color:#9a9a9a">Width:</div><div class="lbl" style="right:370px;top:708px;color:#9a9a9a">Height:</div><div class="a" style="left:1117px;top:685px;width:73px;height:17px;background:#d2d2d2;border:1px solid #a0a0a0;font-size:10px;color:#9a9a9a;white-space:nowrap"><span style="position:absolute;left:4px;top:2px">0</span></div><svg class="a" style="left:1179px;top:686px" width="10" height="15"><path d="M2 5.5 L5 2.5 L8 5.5Z M2 9.5 L5 12.5 L8 9.5Z" fill="#8a8a8a"/></svg><div class="a" style="left:1235px;top:685px;width:73px;height:17px;background:#d2d2d2;border:1px solid #a0a0a0;font-size:10px;color:#9a9a9a;white-space:nowrap"><span style="position:absolute;left:4px;top:2px">0</span></div><svg class="a" style="left:1297px;top:686px" width="10" height="15"><path d="M2 5.5 L5 2.5 L8 5.5Z M2 9.5 L5 12.5 L8 9.5Z" fill="#8a8a8a"/></svg><div class="a" style="left:1117px;top:705px;width:73px;height:17px;background:#d2d2d2;border:1px solid #a0a0a0;font-size:10px;color:#9a9a9a;white-space:nowrap"><span style="position:absolute;left:4px;top:2px">0</span></div><svg class="a" style="left:1179px;top:706px" width="10" height="15"><path d="M2 5.5 L5 2.5 L8 5.5Z M2 9.5 L5 12.5 L8 9.5Z" fill="#8a8a8a"/></svg><div class="a" style="left:1235px;top:705px;width:73px;height:17px;background:#d2d2d2;border:1px solid #a0a0a0;font-size:10px;color:#9a9a9a;white-space:nowrap"><span style="position:absolute;left:4px;top:2px">0</span></div><svg class="a" style="left:1297px;top:706px" width="10" height="15"><path d="M2 5.5 L5 2.5 L8 5.5Z M2 9.5 L5 12.5 L8 9.5Z" fill="#8a8a8a"/></svg><div class="a" style="left:1321px;top:705px;width:83px;height:18px;background:#d8d8d8;border:1px solid #a5a5a5;font-size:10px;color:#9c9c9c;text-align:center;padding-top:3px;white-space:nowrap">From Preview</div><svg class="a" style="left:1001px;top:734px" width="414" height="19"><path d="M6.5 5 L6.5 14 L15.5 14Z" fill="#1560c8"/><rect x="26" y="5" width="9" height="9" fill="#1560c8"/><rect x="360" y="5.5" width="8" height="8" fill="none" stroke="#1560c8" stroke-width="1.6"/><path d="M379.5 5 H384 L388.5 9.5 V13.8 H379.5Z" fill="none" stroke="#1560c8" stroke-width="1.6"/><path d="M398 5 L402 9 M398 14 L402 10 M408 5 L404 9 M408 14 L404 10 M400.5 9.5 H402.5 V7.5 M405.5 7.5 V9.5 H407.5" stroke="#1560c8" stroke-width="1.6" fill="none"/></svg><div class="a" style="left:1424px;top:90px;width:81px;height:21px;background:#bdbdbd;box-shadow:1px 1px 0 #2e2e2e"></div><div class="a" style="left:1448px;top:94px;font-size:10px;color:#2c2c2c;white-space:nowrap;letter-spacing:-0.25px">Process12</div><svg class="a" style="left:1425px;top:91px" width="19" height="19"><rect x=".5" y=".5" width="18" height="18" fill="#0a4a0a" stroke="#333"/><rect x="2" y="2" width="12" height="12" fill="#4a7aff"/><rect x="5" y="5" width="11" height="11" fill="#7ba0ff" opacity=".8"/><path d="M12 8 L13.3 11.3 L16.8 11.4 L14 13.6 L15 17 L12 15 L9 17 L10 13.6 L7.2 11.4 L10.7 11.3Z" fill="#f5a030"/></svg><svg class="a" style="left:1498px;top:92px" width="6" height="17"><path d="M1 5 V1 L4 5 V1" stroke="#222" stroke-width=".9" fill="none"/><path d="M1 12 V16 H2.5 A2 2 0 0 0 2.5 12Z" stroke="#222" stroke-width=".9" fill="none"/></svg><div class="a" style="left:1424px;top:115px;width:81px;height:21px;background:#bdbdbd;box-shadow:1px 1px 0 #2e2e2e"></div><div class="a" style="left:1448px;top:119px;font-size:10px;color:#2c2c2c;white-space:nowrap;letter-spacing:-0.25px">Process13</div><svg class="a" style="left:1425px;top:116px" width="19" height="19"><defs><linearGradient id="sg" x1="0" x2="1"><stop offset="0" stop-color="#b8b8ff"/><stop offset="1" stop-color="#f4e4d4"/></linearGradient></defs><rect x=".5" y=".5" width="18" height="18" fill="url(#sg)" stroke="#333"/><path d="M4.5 3.5 H14 V6 M14 15.5 H4.5 L9.5 9.5 L4.5 3.5 M14 13 V15.5" stroke="#111" stroke-width="2" fill="none"/></svg><svg class="a" style="left:1498px;top:117px" width="6" height="17"><path d="M1 5 V1 L4 5 V1" stroke="#222" stroke-width=".9" fill="none"/><path d="M1 12 V16 H2.5 A2 2 0 0 0 2.5 12Z" stroke="#222" stroke-width=".9" fill="none"/></svg><div class="a" style="left:1424px;top:140px;width:81px;height:21px;background:#bdbdbd;box-shadow:1px 1px 0 #2e2e2e"></div><div class="a" style="left:1448px;top:144px;font-size:10px;color:#2c2c2c;white-space:nowrap;letter-spacing:-0.25px">Process15</div><svg class="a" style="left:1425px;top:141px" width="19" height="19"><rect x=".5" y=".5" width="18" height="18" fill="#e8e8e8" stroke="#333"/><path d="M5 1 H14 L9.5 5Z M5 18 H14 L9.5 14Z" fill="#222"/><rect x="1" y="7" width="17" height="1.3" fill="#3333ff"/><rect x="1" y="9" width="17" height="1.3" fill="#22cc22"/><rect x="1" y="11" width="17" height="1.3" fill="#ee2222"/></svg><svg class="a" style="left:1498px;top:142px" width="6" height="17"><path d="M1 5 V1 L4 5 V1" stroke="#222" stroke-width=".9" fill="none"/><path d="M1 12 V16 H2.5 A2 2 0 0 0 2.5 12Z" stroke="#222" stroke-width=".9" fill="none"/></svg><div class="a" style="left:1424px;top:165px;width:81px;height:21px;background:#bdbdbd;box-shadow:1px 1px 0 #2e2e2e"></div><div class="a" style="left:1448px;top:169px;font-size:10px;color:#2c2c2c;white-space:nowrap;letter-spacing:-0.25px">Process16</div><svg class="a" style="left:1425px;top:166px" width="19" height="19"><rect x=".5" y=".5" width="18" height="18" fill="#eee" stroke="#333"/><circle cx="9.5" cy="5.5" r="3.8" fill="#ff0000"/><circle cx="5" cy="12.5" r="3.8" fill="#00e000"/><circle cx="14" cy="12.5" r="3.8" fill="#0000ff"/></svg><svg class="a" style="left:1498px;top:167px" width="6" height="17"><path d="M1 5 V1 L4 5 V1" stroke="#222" stroke-width=".9" fill="none"/><path d="M1 12 V16 H2.5 A2 2 0 0 0 2.5 12Z" stroke="#222" stroke-width=".9" fill="none"/></svg><div class="a" style="left:1424px;top:190px;width:81px;height:21px;background:#bdbdbd;box-shadow:1px 1px 0 #2e2e2e"></div><div class="a" style="left:1448px;top:194px;font-size:10px;color:#2c2c2c;white-space:nowrap;letter-spacing:-0.25px">Process17</div><svg class="a" style="left:1425px;top:191px" width="19" height="19"><rect x=".5" y=".5" width="18" height="18" fill="#0a4a0a" stroke="#333"/><rect x="2" y="2" width="12" height="12" fill="#4a7aff"/><rect x="5" y="5" width="11" height="11" fill="#7ba0ff" opacity=".8"/><path d="M12 8 L13.3 11.3 L16.8 11.4 L14 13.6 L15 17 L12 15 L9 17 L10 13.6 L7.2 11.4 L10.7 11.3Z" fill="#f5a030"/></svg><svg class="a" style="left:1498px;top:192px" width="6" height="17"><path d="M1 5 V1 L4 5 V1" stroke="#222" stroke-width=".9" fill="none"/><path d="M1 12 V16 H2.5 A2 2 0 0 0 2.5 12Z" stroke="#222" stroke-width=".9" fill="none"/></svg><div class="a" style="left:1420px;top:292px;width:82px;height:21px;background:#bdbdbd;box-shadow:1px 1px 0 #2e2e2e"></div><div class="a" style="left:1444px;top:296px;font-size:10px;color:#2c2c2c;white-space:nowrap;letter-spacing:-0.25px">Process18</div><svg class="a" style="left:1421px;top:293px" width="19" height="19"><rect x=".5" y=".5" width="18" height="18" fill="#ddd" stroke="#222"/><path d="M1 1 H9.5 V9.5 H1Z" fill="#f0a0a0"/><path d="M9.5 1 V9.5 H1Z" fill="#1010f0"/><path d="M9.5 1 H18 V9.5 H9.5Z" fill="#e8e8e8"/><path d="M9.5 1 L18 9.5 H9.5Z" fill="#10f010"/><path d="M9.5 9.5 H18 V18 H9.5Z" fill="#b0c4ff"/><path d="M9.5 9.5 H18 L9.5 18Z" fill="#f01010"/><path d="M1 9.5 H9.5 V18 H1Z" fill="#a8a8a8"/><path d="M1 9.5 L9.5 18 H1Z" fill="#a0f0a0"/></svg><svg class="a" style="left:1495px;top:294px" width="6" height="17"><path d="M1 5 V1 L4 5 V1" stroke="#222" stroke-width=".9" fill="none"/><path d="M1 12 V16 H2.5 A2 2 0 0 0 2.5 12Z" stroke="#222" stroke-width=".9" fill="none"/></svg><div class="a" style="left:1420px;top:343px;width:82px;height:21px;background:#6e7fdc;box-shadow:1px 1px 0 #2e2e2e"></div><div class="a" style="left:1444px;top:347px;font-size:10px;color:#fff;white-space:nowrap;letter-spacing:-0.25px">Process19</div><svg class="a" style="left:1421px;top:344px" width="19" height="19"><defs><pattern id="chk3" width="3" height="3" patternUnits="userSpaceOnUse"><rect width="3" height="3" fill="#fff"/><rect width="1.5" height="1.5" fill="#111"/><rect x="1.5" y="1.5" width="1.5" height="1.5" fill="#111"/></pattern></defs><rect x=".5" y=".5" width="18" height="18" fill="#8a8cf0"/><rect x="9" y="1" width="9" height="17" fill="url(#chk3)"/><path d="M1 3 H9 M1 7 H9 M1 11 H9 M1 15 H9 M3 1 V18 M6 1 V18" stroke="#b0b4ff" stroke-width=".6"/><path d="M1.5 17 Q5 4 17 2" stroke="#ff7a1a" stroke-width="1.5" fill="none"/></svg><svg class="a" style="left:1495px;top:345px" width="6" height="17"><path d="M1 5 V1 L4 5 V1" stroke="#fff" stroke-width=".9" fill="none"/><path d="M1 12 V16 H2.5 A2 2 0 0 0 2.5 12Z" stroke="#fff" stroke-width=".9" fill="none"/></svg><div class="a" style="left:1418px;top:367px;width:82px;height:21px;background:#bdbdbd;box-shadow:1px 1px 0 #2e2e2e"></div><div class="a" style="left:1442px;top:371px;font-size:10px;color:#2c2c2c;white-space:nowrap;letter-spacing:-0.25px">Process21</div><svg class="a" style="left:1419px;top:368px" width="19" height="19"><rect x=".5" y=".5" width="18" height="18" fill="#ddd" stroke="#222"/><path d="M1 1 H9.5 V9.5 H1Z" fill="#f0a0a0"/><path d="M9.5 1 V9.5 H1Z" fill="#1010f0"/><path d="M9.5 1 H18 V9.5 H9.5Z" fill="#e8e8e8"/><path d="M9.5 1 L18 9.5 H9.5Z" fill="#10f010"/><path d="M9.5 9.5 H18 V18 H9.5Z" fill="#b0c4ff"/><path d="M9.5 9.5 H18 L9.5 18Z" fill="#f01010"/><path d="M1 9.5 H9.5 V18 H1Z" fill="#a8a8a8"/><path d="M1 9.5 L9.5 18 H1Z" fill="#a0f0a0"/></svg><svg class="a" style="left:1493px;top:369px" width="6" height="17"><path d="M1 5 V1 L4 5 V1" stroke="#222" stroke-width=".9" fill="none"/><path d="M1 12 V16 H2.5 A2 2 0 0 0 2.5 12Z" stroke="#222" stroke-width=".9" fill="none"/></svg><svg class="a" style="left:1298px;top:214px" width="109" height="22"><path d="M0 0 H101 L108 6 V21 H0Z" fill="#bdbdbd"/><path d="M0 21 H108" stroke="#2e2e2e" stroke-width="1"/></svg><svg class="a" style="left:1299px;top:215px" width="20" height="20"><path d="M10 1 L18 4.5 V15 L10 19 L2 15 V4.5Z" fill="#1470d8"/><path d="M2 4.5 L10 8 L18 4.5 L10 1Z" fill="#2a90f2"/><path d="M2 4.5 L10 8 V19 L2 15Z" fill="#6cbcfc"/></svg><div class="a" style="left:1322px;top:218px;font-size:10px;color:#2c2c2c;white-space:nowrap">integration1_R</div><svg class="a" style="left:1400px;top:227px" width="6" height="6"><path d="M1 5 V1 L4 5 V1" stroke="#222" stroke-width=".9" fill="none"/></svg><svg class="a" style="left:1298px;top:239px" width="108" height="22"><path d="M0 0 H100 L107 6 V21 H0Z" fill="#bdbdbd"/><path d="M0 21 H107" stroke="#2e2e2e" stroke-width="1"/></svg><svg class="a" style="left:1299px;top:240px" width="20" height="20"><path d="M10 1 L18 4.5 V15 L10 19 L2 15 V4.5Z" fill="#1470d8"/><path d="M2 4.5 L10 8 L18 4.5 L10 1Z" fill="#2a90f2"/><path d="M2 4.5 L10 8 V19 L2 15Z" fill="#6cbcfc"/></svg><div class="a" style="left:1322px;top:243px;font-size:10px;color:#2c2c2c;white-space:nowrap">integration1_G</div><svg class="a" style="left:1399px;top:252px" width="6" height="6"><path d="M1 5 V1 L4 5 V1" stroke="#222" stroke-width=".9" fill="none"/></svg><svg class="a" style="left:1298px;top:264px" width="107" height="22"><path d="M0 0 H99 L106 6 V21 H0Z" fill="#bdbdbd"/><path d="M0 21 H106" stroke="#2e2e2e" stroke-width="1"/></svg><svg class="a" style="left:1299px;top:265px" width="20" height="20"><path d="M10 1 L18 4.5 V15 L10 19 L2 15 V4.5Z" fill="#1470d8"/><path d="M2 4.5 L10 8 L18 4.5 L10 1Z" fill="#2a90f2"/><path d="M2 4.5 L10 8 V19 L2 15Z" fill="#6cbcfc"/></svg><div class="a" style="left:1322px;top:268px;font-size:10px;color:#2c2c2c;white-space:nowrap">integration1_B</div><svg class="a" style="left:1398px;top:277px" width="6" height="6"><path d="M1 5 V1 L4 5 V1" stroke="#222" stroke-width=".9" fill="none"/></svg><svg class="a" style="left:1411px;top:240px" width="157" height="22"><path d="M0 0 H149 L156 6 V21 H0Z" fill="#bdbdbd"/><path d="M0 21 H156" stroke="#2e2e2e" stroke-width="1"/></svg><svg class="a" style="left:1412px;top:241px" width="20" height="20"><path d="M10 1 L18 4.5 V15 L10 19 L2 15 V4.5Z" fill="#1470d8"/><path d="M2 4.5 L10 8 L18 4.5 L10 1Z" fill="#2a90f2"/><path d="M2 4.5 L10 8 V19 L2 15Z" fill="#6cbcfc"/></svg><div class="a" style="left:1435px;top:244px;font-size:10px;color:#2c2c2c;white-space:nowrap">integration1_B_registered</div><svg class="a" style="left:1561px;top:253px" width="6" height="6"><path d="M1 5 V1 L4 5 V1" stroke="#222" stroke-width=".9" fill="none"/></svg><svg class="a" style="left:1411px;top:265px" width="158" height="22"><path d="M0 0 H150 L157 6 V21 H0Z" fill="#bdbdbd"/><path d="M0 21 H157" stroke="#2e2e2e" stroke-width="1"/></svg><svg class="a" style="left:1412px;top:266px" width="20" height="20"><path d="M10 1 L18 4.5 V15 L10 19 L2 15 V4.5Z" fill="#1470d8"/><path d="M2 4.5 L10 8 L18 4.5 L10 1Z" fill="#2a90f2"/><path d="M2 4.5 L10 8 V19 L2 15Z" fill="#6cbcfc"/></svg><div class="a" style="left:1435px;top:269px;font-size:10px;color:#2c2c2c;white-space:nowrap">integration1_G_registered</div><svg class="a" style="left:1562px;top:278px" width="6" height="6"><path d="M1 5 V1 L4 5 V1" stroke="#222" stroke-width=".9" fill="none"/></svg><div class="a" style="left:0;top:876px;width:1600px;height:24px;background:#efefef"></div><div class="a" style="left:17px;top:880px;width:204px;height:17px;background:linear-gradient(#f7f7f7,#dcdcdc);border:1px solid #a0a0a0;border-radius:1px"></div><div class="a" style="left:207px;top:881px;width:1px;height:15px;background:#c4c4c4"></div><svg class="a" style="left:0;top:876px" width="360" height="24"><path d="M208.5 9.5 H217.5 L213 14Z" fill="#111"/><rect x="24" y="8" width="9" height="8.5" fill="none" stroke="#333" stroke-width="1.1"/><rect x="24" y="7.5" width="9" height="2" fill="#333"/><rect x="224.5" y="5.5" width="14" height="14" fill="#fafafa" stroke="#777"/><path d="M227 10 L229.5 8 V17 H227Z" fill="#333"/><rect x="229.5" y="8.5" width="6.5" height="8.5" fill="#fff" stroke="#333" stroke-width="1"/><defs><linearGradient id="sq1" x1="0" y1="0" x2="0" y2="1"><stop offset="0" stop-color="#7a7a7a"/><stop offset="1" stop-color="#222"/></linearGradient><linearGradient id="sq2" x1="0" y1="0" x2="0" y2="1"><stop offset="0" stop-color="#6aa8ff"/><stop offset="1" stop-color="#1648c8"/></linearGradient></defs><rect x="261" y="4" width="15.5" height="16" fill="url(#sq1)" stroke="#222" stroke-width=".8"/><rect x="280" y="4" width="15.5" height="16" fill="url(#sq2)" stroke="#1a2a6a" stroke-width=".8"/><rect x="299" y="4" width="15.5" height="16" fill="url(#sq1)" stroke="#222" stroke-width=".8"/><rect x="318" y="4" width="15.5" height="16" fill="url(#sq1)" stroke="#222" stroke-width=".8"/></svg><div class="st" style="left:41px;top:883px;font-size:9.7px;color:#222">Image71_Preview01</div><div class="st" style="left:527px;top:883px;font-size:9.72px;color:#383838">R:0.1919 · G:0.1457 · B:0.0748</div><div class="st" style="left:856px;top:883px;font-size:9.72px;color:#383838">w:388 · h:292 · n:3 · f32 · RGB · 1.297 MiB · Modified</div><svg class="a" style="left:812px;top:882px" width="12" height="12"><path d="M2 1.5 L10 6 L2 10.5Z" fill="#222"/></svg><svg class="a" style="left:0;top:0" width="1600" height="900" style="pointer-events:none"><rect x="5.4" y="879.3" width="1.2" height="1.2" fill="#707070"/><rect x="8.6" y="879.3" width="1.2" height="1.2" fill="#707070"/><rect x="7.0" y="881.0" width="1.2" height="1.2" fill="#707070"/><rect x="5.4" y="882.7" width="1.2" height="1.2" fill="#707070"/><rect x="8.6" y="882.7" width="1.2" height="1.2" fill="#707070"/><rect x="7.0" y="884.4" width="1.2" height="1.2" fill="#707070"/><rect x="5.4" y="886.1" width="1.2" height="1.2" fill="#707070"/><rect x="8.6" y="886.1" width="1.2" height="1.2" fill="#707070"/><rect x="7.0" y="887.8" width="1.2" height="1.2" fill="#707070"/><rect x="5.4" y="889.5" width="1.2" height="1.2" fill="#707070"/><rect x="8.6" y="889.5" width="1.2" height="1.2" fill="#707070"/><rect x="7.0" y="891.2" width="1.2" height="1.2" fill="#707070"/><rect x="5.4" y="892.9" width="1.2" height="1.2" fill="#707070"/><rect x="8.6" y="892.9" width="1.2" height="1.2" fill="#707070"/><rect x="7.0" y="894.6" width="1.2" height="1.2" fill="#707070"/><rect x="5.4" y="896.3" width="1.2" height="1.2" fill="#707070"/><rect x="8.6" y="896.3" width="1.2" height="1.2" fill="#707070"/><rect x="249.4" y="879.3" width="1.2" height="1.2" fill="#707070"/><rect x="252.6" y="879.3" width="1.2" height="1.2" fill="#707070"/><rect x="251.0" y="881.0" width="1.2" height="1.2" fill="#707070"/><rect x="249.4" y="882.7" width="1.2" height="1.2" fill="#707070"/><rect x="252.6" y="882.7" width="1.2" height="1.2" fill="#707070"/><rect x="251.0" y="884.4" width="1.2" height="1.2" fill="#707070"/><rect x="249.4" y="886.1" width="1.2" height="1.2" fill="#707070"/><rect x="252.6" y="886.1" width="1.2" height="1.2" fill="#707070"/><rect x="251.0" y="887.8" width="1.2" height="1.2" fill="#707070"/><rect x="249.4" y="889.5" width="1.2" height="1.2" fill="#707070"/><rect x="252.6" y="889.5" width="1.2" height="1.2" fill="#707070"/><rect x="251.0" y="891.2" width="1.2" height="1.2" fill="#707070"/><rect x="249.4" y="892.9" width="1.2" height="1.2" fill="#707070"/><rect x="252.6" y="892.9" width="1.2" height="1.2" fill="#707070"/><rect x="251.0" y="894.6" width="1.2" height="1.2" fill="#707070"/><rect x="249.4" y="896.3" width="1.2" height="1.2" fill="#707070"/><rect x="252.6" y="896.3" width="1.2" height="1.2" fill="#707070"/><rect x="341.4" y="879.3" width="1.2" height="1.2" fill="#707070"/><rect x="344.6" y="879.3" width="1.2" height="1.2" fill="#707070"/><rect x="343.0" y="881.0" width="1.2" height="1.2" fill="#707070"/><rect x="341.4" y="882.7" width="1.2" height="1.2" fill="#707070"/><rect x="344.6" y="882.7" width="1.2" height="1.2" fill="#707070"/><rect x="343.0" y="884.4" width="1.2" height="1.2" fill="#707070"/><rect x="341.4" y="886.1" width="1.2" height="1.2" fill="#707070"/><rect x="344.6" y="886.1" width="1.2" height="1.2" fill="#707070"/><rect x="343.0" y="887.8" width="1.2" height="1.2" fill="#707070"/><rect x="341.4" y="889.5" width="1.2" height="1.2" fill="#707070"/><rect x="344.6" y="889.5" width="1.2" height="1.2" fill="#707070"/><rect x="343.0" y="891.2" width="1.2" height="1.2" fill="#707070"/><rect x="341.4" y="892.9" width="1.2" height="1.2" fill="#707070"/><rect x="344.6" y="892.9" width="1.2" height="1.2" fill="#707070"/><rect x="343.0" y="894.6" width="1.2" height="1.2" fill="#707070"/><rect x="341.4" y="896.3" width="1.2" height="1.2" fill="#707070"/><rect x="344.6" y="896.3" width="1.2" height="1.2" fill="#707070"/><rect x="505.4" y="879.3" width="1.2" height="1.2" fill="#707070"/><rect x="508.6" y="879.3" width="1.2" height="1.2" fill="#707070"/><rect x="507.0" y="881.0" width="1.2" height="1.2" fill="#707070"/><rect x="505.4" y="882.7" width="1.2" height="1.2" fill="#707070"/><rect x="508.6" y="882.7" width="1.2" height="1.2" fill="#707070"/><rect x="507.0" y="884.4" width="1.2" height="1.2" fill="#707070"/><rect x="505.4" y="886.1" width="1.2" height="1.2" fill="#707070"/><rect x="508.6" y="886.1" width="1.2" height="1.2" fill="#707070"/><rect x="507.0" y="887.8" width="1.2" height="1.2" fill="#707070"/><rect x="505.4" y="889.5" width="1.2" height="1.2" fill="#707070"/><rect x="508.6" y="889.5" width="1.2" height="1.2" fill="#707070"/><rect x="507.0" y="891.2" width="1.2" height="1.2" fill="#707070"/><rect x="505.4" y="892.9" width="1.2" height="1.2" fill="#707070"/><rect x="508.6" y="892.9" width="1.2" height="1.2" fill="#707070"/><rect x="507.0" y="894.6" width="1.2" height="1.2" fill="#707070"/><rect x="505.4" y="896.3" width="1.2" height="1.2" fill="#707070"/><rect x="508.6" y="896.3" width="1.2" height="1.2" fill="#707070"/><rect x="835.4" y="879.3" width="1.2" height="1.2" fill="#707070"/><rect x="838.6" y="879.3" width="1.2" height="1.2" fill="#707070"/><rect x="837.0" y="881.0" width="1.2" height="1.2" fill="#707070"/><rect x="835.4" y="882.7" width="1.2" height="1.2" fill="#707070"/><rect x="838.6" y="882.7" width="1.2" height="1.2" fill="#707070"/><rect x="837.0" y="884.4" width="1.2" height="1.2" fill="#707070"/><rect x="835.4" y="886.1" width="1.2" height="1.2" fill="#707070"/><rect x="838.6" y="886.1" width="1.2" height="1.2" fill="#707070"/><rect x="837.0" y="887.8" width="1.2" height="1.2" fill="#707070"/><rect x="835.4" y="889.5" width="1.2" height="1.2" fill="#707070"/><rect x="838.6" y="889.5" width="1.2" height="1.2" fill="#707070"/><rect x="837.0" y="891.2" width="1.2" height="1.2" fill="#707070"/><rect x="835.4" y="892.9" width="1.2" height="1.2" fill="#707070"/><rect x="838.6" y="892.9" width="1.2" height="1.2" fill="#707070"/><rect x="837.0" y="894.6" width="1.2" height="1.2" fill="#707070"/><rect x="835.4" y="896.3" width="1.2" height="1.2" fill="#707070"/><rect x="838.6" y="896.3" width="1.2" height="1.2" fill="#707070"/></svg></body></html>
